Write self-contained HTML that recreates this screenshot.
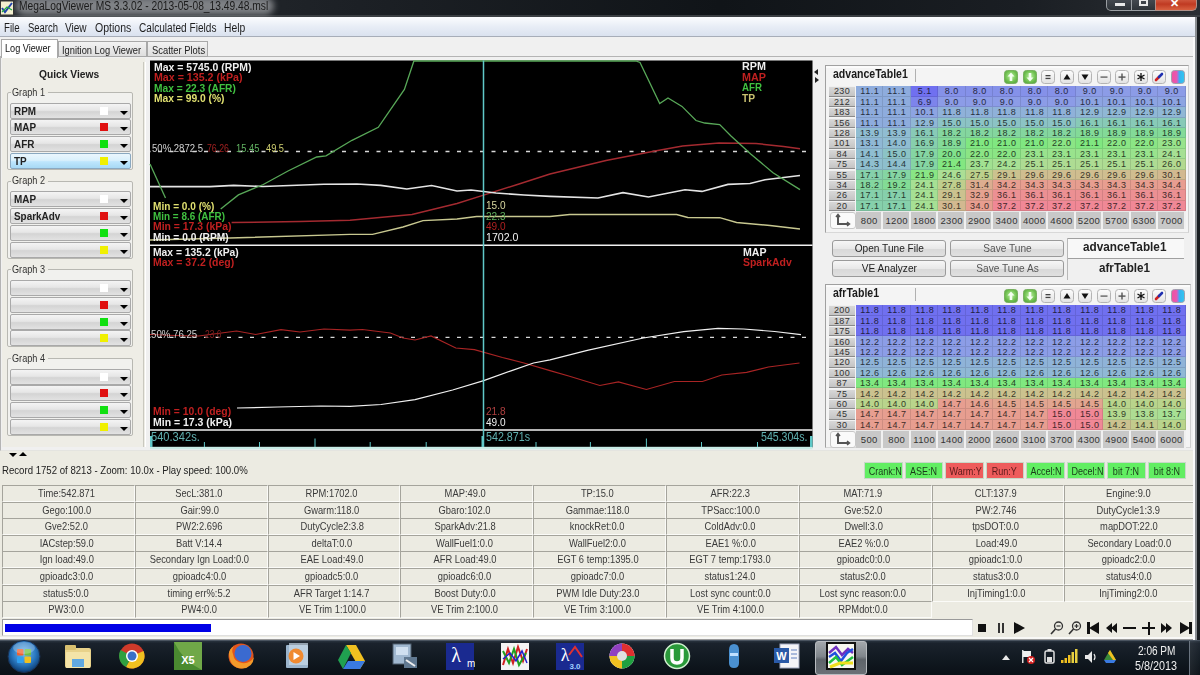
<!DOCTYPE html><html><head><meta charset="utf-8"><style>
html,body{margin:0;padding:0;width:1200px;height:675px;overflow:hidden;background:#f0f0f0;font-family:"Liberation Sans",sans-serif;}
div{box-sizing:border-box;}
.cb{position:absolute;left:10px;width:121px;height:16px;border:1px solid #a9a9a9;border-radius:2px;background:linear-gradient(#f4f4f4,#e6e6e6 45%,#d4d4d4 55%,#e2e2e2);font-size:11px;font-weight:bold;color:#222;line-height:14px;padding-left:3px;}
.cb .sq{position:absolute;left:89px;top:3px;width:8px;height:8px;}
.cb .ar{position:absolute;left:109px;top:7px;width:0;height:0;border-left:4px solid transparent;border-right:4px solid transparent;border-top:4px solid #000;}
.grp{position:absolute;left:7px;width:126px;border:1px solid #b8b8b2;border-radius:2px;background:#f1f1ee;}
.gl{position:absolute;left:11px;font-size:11px;color:#333;background:#eeede6;padding:0 1px;line-height:12px;}
.dc{position:absolute;height:17px;padding-right:4px;border-top:1px solid #a5a49c;border-left:1px solid #a5a49c;border-bottom:1px solid #fbfbf8;border-right:1px solid #fbfbf8;font-size:11px;color:#3a3a3a;text-align:center;line-height:15px;}
.tb{position:absolute;width:14px;height:14px;border:1px solid #b9b9b9;border-radius:3px;background:linear-gradient(#fdfdfd,#e4e4e4);}
.ind{position:absolute;top:462px;height:17px;font-size:11px;color:#2a4a2a;text-align:center;line-height:16px;}
</style></head><body>
<div style="position:absolute;left:0px;top:0px;width:1200px;height:17px;background:linear-gradient(90deg,#2a2e33 0%,#1c2025 30%,#101418 60%,#1a1e23 85%,#2a2e33 100%);"></div>
<div style="position:absolute;left:0px;top:15px;width:1200px;height:2px;background:#3a3e42;"></div>
<div style="position:absolute;left:16px;top:-3px;width:258px;height:18px;background:rgba(150,153,156,0.8);border-radius:9px;filter:blur(3px);"></div>
<svg style="position:absolute;left:0;top:0" width="14" height="16" viewBox="0 0 14 16"><rect x="0.5" y="1" width="13" height="14" fill="#f3efd0" stroke="#333" stroke-width="1"/><polyline points="2,8 5,12 12,3" fill="none" stroke="#2244aa" stroke-width="2"/><polyline points="2,12 7,7 12,10" fill="none" stroke="#22aa44" stroke-width="1.2"/></svg>
<div style="position:absolute;left:19.1px;top:-1.3px;height:15px;line-height:15px;white-space:nowrap;transform:scaleX(0.8534);transform-origin:left;font-size:12px;font-weight:normal;color:#1b1b1b;">MegaLogViewer MS 3.3.02 - 2013-05-08_13.49.48.msl</div>
<div style="position:absolute;left:1106px;top:-3px;width:26px;height:14px;border:1px solid #9a9ea2;border-top:none;border-radius:0 0 0 5px;background:linear-gradient(#4a4f56,#2e3338);"></div>
<div style="position:absolute;left:1115px;top:3px;width:10px;height:3px;background:#e8e8e8;"></div>
<div style="position:absolute;left:1131px;top:-3px;width:25px;height:14px;border:1px solid #9a9ea2;border-top:none;background:linear-gradient(#4a4f56,#2e3338);"></div>
<div style="position:absolute;left:1139px;top:-1px;width:9px;height:7px;border:2px solid #e8e8e8;"></div>
<div style="position:absolute;left:1155px;top:-3px;width:42px;height:14px;border:1px solid #b09088;border-top:none;border-radius:0 0 5px 0;background:linear-gradient(#d86a50,#c03a22 55%,#d86040);"></div>
<div style="position:absolute;left:1170px;top:-4px;height:14px;line-height:14px;white-space:nowrap;font-size:11px;color:#fff;font-weight:bold;">&#x2715;</div>
<div style="position:absolute;left:0px;top:17px;width:1196px;height:20px;background:linear-gradient(#fbfcfe,#e8edf6 50%,#dae2ef);border-bottom:1px solid #a7adb8;"></div>
<div style="position:absolute;left:3.9px;top:20.9px;height:15px;line-height:15px;white-space:nowrap;transform:scaleX(0.8052);transform-origin:left;font-size:12px;font-weight:normal;color:#1e1e1e;">File</div>
<div style="position:absolute;left:27.5px;top:20.9px;height:15px;line-height:15px;white-space:nowrap;transform:scaleX(0.7868);transform-origin:left;font-size:12px;font-weight:normal;color:#1e1e1e;">Search</div>
<div style="position:absolute;left:65.0px;top:20.9px;height:15px;line-height:15px;white-space:nowrap;transform:scaleX(0.8386);transform-origin:left;font-size:12px;font-weight:normal;color:#1e1e1e;">View</div>
<div style="position:absolute;left:94.7px;top:20.9px;height:15px;line-height:15px;white-space:nowrap;transform:scaleX(0.8773);transform-origin:left;font-size:12px;font-weight:normal;color:#1e1e1e;">Options</div>
<div style="position:absolute;left:139.3px;top:20.9px;height:15px;line-height:15px;white-space:nowrap;transform:scaleX(0.8413);transform-origin:left;font-size:12px;font-weight:normal;color:#1e1e1e;">Calculated Fields</div>
<div style="position:absolute;left:224.3px;top:20.9px;height:15px;line-height:15px;white-space:nowrap;transform:scaleX(0.8609);transform-origin:left;font-size:12px;font-weight:normal;color:#1e1e1e;">Help</div>
<div style="position:absolute;left:0px;top:37px;width:1196px;height:20px;background:#f0f0f0;"></div>
<div style="position:absolute;left:0px;top:56px;width:1195px;height:395px;border:1px solid #b4b4b4;border-bottom-color:#e4e4e0;background:#f0f0f0;"></div>
<div style="position:absolute;left:1px;top:39px;width:57px;height:19px;background:#fff;border:1px solid #a8a8a8;border-bottom:none;"></div>
<div style="position:absolute;left:5.4px;top:41.0px;height:14px;line-height:14px;white-space:nowrap;transform:scaleX(0.8310);transform-origin:left;font-size:11px;font-weight:normal;color:#111;">Log Viewer</div>
<div style="position:absolute;left:58px;top:41px;width:89px;height:16px;background:linear-gradient(#f2f2f2,#dedede);border:1px solid #a8a8a8;"></div>
<div style="position:absolute;left:61.8px;top:42.5px;height:14px;line-height:14px;white-space:nowrap;transform:scaleX(0.8461);transform-origin:left;font-size:11px;font-weight:normal;color:#222;">Ignition Log Viewer</div>
<div style="position:absolute;left:147px;top:41px;width:61px;height:16px;background:linear-gradient(#f2f2f2,#dedede);border:1px solid #a8a8a8;"></div>
<div style="position:absolute;left:151.7px;top:42.5px;height:14px;line-height:14px;white-space:nowrap;transform:scaleX(0.8513);transform-origin:left;font-size:11px;font-weight:normal;color:#222;">Scatter Plots</div>
<div style="position:absolute;left:2px;top:58px;width:143px;height:389px;background:#eeede6;"></div>
<div style="position:absolute;left:143px;top:62px;width:3px;height:385px;border-left:1px solid #c9c8bf;border-right:1px solid #fff;"></div>
<div style="position:absolute;left:39.4px;top:67.0px;height:14px;line-height:14px;white-space:nowrap;transform:scaleX(0.9315);transform-origin:left;font-size:11px;font-weight:bold;color:#222;">Quick Views</div>
<div class="grp" style="top:92.0px;height:78px;"></div>
<div style="position:absolute;left:11px;top:90.0px;width:37px;height:4px;background:#eeede6;"></div>
<div style="position:absolute;left:12.0px;top:84.7px;height:14px;line-height:14px;white-space:nowrap;transform:scaleX(0.8302);transform-origin:left;font-size:11px;font-weight:normal;color:#333;">Graph 1</div>
<div class="cb" style="top:102.5px;"><span style="display:inline-block;transform:scaleX(0.9);transform-origin:left;">RPM</span><div class="sq" style="background:#fff;"></div><div class="ar"></div></div>
<div class="cb" style="top:119.3px;"><span style="display:inline-block;transform:scaleX(0.9);transform-origin:left;">MAP</span><div class="sq" style="background:#e01010;"></div><div class="ar"></div></div>
<div class="cb" style="top:136.1px;"><span style="display:inline-block;transform:scaleX(0.9);transform-origin:left;">AFR</span><div class="sq" style="background:#10e010;"></div><div class="ar"></div></div>
<div class="cb" style="top:152.9px;background:linear-gradient(#eaf6fd,#d9f0fc 45%,#bee6fd 55%,#a7d9f5);border-color:#8aa8c0;"><span style="display:inline-block;transform:scaleX(0.9);transform-origin:left;">TP</span><div class="sq" style="background:#f0f000;"></div><div class="ar"></div></div>
<div class="grp" style="top:180.7px;height:78px;"></div>
<div style="position:absolute;left:11px;top:178.7px;width:37px;height:4px;background:#eeede6;"></div>
<div style="position:absolute;left:12.0px;top:173.4px;height:14px;line-height:14px;white-space:nowrap;transform:scaleX(0.8302);transform-origin:left;font-size:11px;font-weight:normal;color:#333;">Graph 2</div>
<div class="cb" style="top:191.2px;"><span style="display:inline-block;transform:scaleX(0.9);transform-origin:left;">MAP</span><div class="sq" style="background:#fff;"></div><div class="ar"></div></div>
<div class="cb" style="top:208.0px;"><span style="display:inline-block;transform:scaleX(0.9);transform-origin:left;">SparkAdv</span><div class="sq" style="background:#e01010;"></div><div class="ar"></div></div>
<div class="cb" style="top:224.8px;"><span style="display:inline-block;transform:scaleX(0.9);transform-origin:left;"></span><div class="sq" style="background:#10e010;"></div><div class="ar"></div></div>
<div class="cb" style="top:241.6px;"><span style="display:inline-block;transform:scaleX(0.9);transform-origin:left;"></span><div class="sq" style="background:#f0f000;"></div><div class="ar"></div></div>
<div class="grp" style="top:269.4px;height:78px;"></div>
<div style="position:absolute;left:11px;top:267.4px;width:37px;height:4px;background:#eeede6;"></div>
<div style="position:absolute;left:12.0px;top:262.1px;height:14px;line-height:14px;white-space:nowrap;transform:scaleX(0.8302);transform-origin:left;font-size:11px;font-weight:normal;color:#333;">Graph 3</div>
<div class="cb" style="top:279.9px;"><span style="display:inline-block;transform:scaleX(0.9);transform-origin:left;"></span><div class="sq" style="background:#fff;"></div><div class="ar"></div></div>
<div class="cb" style="top:296.7px;"><span style="display:inline-block;transform:scaleX(0.9);transform-origin:left;"></span><div class="sq" style="background:#e01010;"></div><div class="ar"></div></div>
<div class="cb" style="top:313.5px;"><span style="display:inline-block;transform:scaleX(0.9);transform-origin:left;"></span><div class="sq" style="background:#10e010;"></div><div class="ar"></div></div>
<div class="cb" style="top:330.3px;"><span style="display:inline-block;transform:scaleX(0.9);transform-origin:left;"></span><div class="sq" style="background:#f0f000;"></div><div class="ar"></div></div>
<div class="grp" style="top:358.1px;height:78px;"></div>
<div style="position:absolute;left:11px;top:356.1px;width:37px;height:4px;background:#eeede6;"></div>
<div style="position:absolute;left:12.0px;top:350.8px;height:14px;line-height:14px;white-space:nowrap;transform:scaleX(0.8302);transform-origin:left;font-size:11px;font-weight:normal;color:#333;">Graph 4</div>
<div class="cb" style="top:368.6px;"><span style="display:inline-block;transform:scaleX(0.9);transform-origin:left;"></span><div class="sq" style="background:#fff;"></div><div class="ar"></div></div>
<div class="cb" style="top:385.4px;"><span style="display:inline-block;transform:scaleX(0.9);transform-origin:left;"></span><div class="sq" style="background:#e01010;"></div><div class="ar"></div></div>
<div class="cb" style="top:402.2px;"><span style="display:inline-block;transform:scaleX(0.9);transform-origin:left;"></span><div class="sq" style="background:#10e010;"></div><div class="ar"></div></div>
<div class="cb" style="top:419.0px;"><span style="display:inline-block;transform:scaleX(0.9);transform-origin:left;"></span><div class="sq" style="background:#f0f000;"></div><div class="ar"></div></div>
<svg style="position:absolute;left:0;top:0" width="1200" height="675" viewBox="0 0 1200 675">
<defs><linearGradient id="tbg" x1="0" y1="0" x2="0" y2="1"><stop offset="0" stop-color="#fdfdfd"/><stop offset="1" stop-color="#e2e2e2"/></linearGradient><radialGradient id="tgr" cx="50%" cy="45%" r="60%"><stop offset="0" stop-color="#b8f0a0"/><stop offset="0.7" stop-color="#70c050"/><stop offset="1" stop-color="#58a840"/></radialGradient><linearGradient id="tcl" x1="0" y1="0" x2="1" y2="0"><stop offset="0" stop-color="#f050a0"/><stop offset="0.38" stop-color="#e858b0"/><stop offset="0.5" stop-color="#9a78e0"/><stop offset="0.6" stop-color="#38b0f0"/><stop offset="1" stop-color="#30c8f0"/></linearGradient></defs>
<rect x="150" y="60.5" width="662.5" height="387" fill="#000"/>
<line x1="150" y1="245.3" x2="812.5" y2="245.3" stroke="#f0f0f0" stroke-width="1.6"/>
<line x1="150" y1="430" x2="812.5" y2="430" stroke="#f0f0f0" stroke-width="1.6"/>
<line x1="150" y1="151.5" x2="812" y2="151.5" stroke="#d8d8d8" stroke-width="1.3" stroke-dasharray="4,7.5" stroke-dashoffset="3.5"/>
<line x1="150" y1="337.4" x2="812" y2="337.4" stroke="#d8d8d8" stroke-width="1.3" stroke-dasharray="4,7.5" stroke-dashoffset="3.5"/>
<polyline points="150.0,240.0 230.0,238.0 350.0,234.4 372.5,234.4 403.0,227.0 423.0,220.6 457.0,219.0 476.6,216.5 550.0,216.5 569.7,214.5 676.6,214.5 687.8,217.5 719.7,217.7 736.6,222.5 770.0,225.5 800.0,229.0" fill="none" stroke="#c8c890" stroke-width="1.4"/>
<polyline points="231.6,222.6 300.0,221.5 350.0,220.3 412.0,214.5 457.0,203.5 482.0,195.6 519.0,184.0 550.0,174.0 606.0,160.5 655.0,151.0 682.6,146.0 719.0,142.9 756.0,143.5 783.5,146.4 800.0,148.8" fill="none" stroke="#a42a30" stroke-width="1.5"/>
<polyline points="150.0,186.6 210.0,186.6 233.7,185.4 263.0,186.5 323.8,184.2 357.0,184.0 380.7,185.4 406.8,189.0 431.6,185.5 457.0,191.0 471.0,190.0 496.0,193.0 524.0,195.0 550.0,196.4 598.0,198.0 623.0,192.6 648.5,197.0 685.0,189.7 702.0,191.4 728.0,184.4 750.0,183.5 765.0,179.7 800.0,175.5" fill="none" stroke="#e4e4e4" stroke-width="1.6"/>
<polyline points="150.0,164.0 165.5,198.0" fill="none" stroke="#58a858" stroke-width="1.3"/>
<polyline points="220.7,209.0 238.4,194.9 263.3,184.5 288.0,171.0 316.7,157.0 326.0,155.8 352.0,140.3 378.3,127.3 404.4,89.4 413.9,61.0 635.8,61.0 640.0,62.5 659.7,103.6 668.0,98.0 682.0,106.4 696.0,120.5 704.7,123.0 719.7,124.5 731.0,136.0 750.7,154.0 773.0,172.7 800.0,189.6" fill="none" stroke="#58a858" stroke-width="1.3"/>
<polyline points="150.0,334.5 175.0,335.5 198.6,336.0 221.4,333.0 236.6,331.0 255.6,334.5 281.0,329.7 300.0,332.0 324.0,329.0 350.0,330.2 362.4,329.5 390.4,333.0 403.0,338.0 415.0,340.0 431.0,336.0 455.8,348.0 474.4,349.7 502.4,357.5 524.0,363.0 550.0,370.6 568.7,376.0 599.8,385.5 618.4,381.8 646.4,389.5 674.4,381.5 702.4,381.5 721.8,375.0 746.6,372.4 768.4,367.0 799.5,363.0" fill="none" stroke="#a82424" stroke-width="1.2"/>
<polyline points="237.0,408.0 277.5,407.0 321.0,406.0 350.0,406.4 381.0,404.5 415.0,399.7 452.6,390.0 483.7,380.6 511.7,370.6 533.5,363.0 550.0,359.8 587.3,350.4 643.3,338.0 683.7,331.6 718.0,328.3 743.5,329.0 774.6,331.5 801.0,334.7" fill="none" stroke="#f0f0f0" stroke-width="1.2"/>
<line x1="483.5" y1="60.5" x2="483.5" y2="447" stroke="#5fc8c8" stroke-width="1.5"/>
<rect x="150" y="446.8" width="662.5" height="2.5" fill="#c8ece6"/>
<line x1="204.4" y1="442" x2="204.4" y2="447" stroke="#5fc8c8" stroke-width="1"/>
<line x1="259.5" y1="442" x2="259.5" y2="447" stroke="#5fc8c8" stroke-width="1"/>
<line x1="370.2" y1="442" x2="370.2" y2="447" stroke="#5fc8c8" stroke-width="1"/>
<line x1="426.2" y1="442" x2="426.2" y2="447" stroke="#5fc8c8" stroke-width="1"/>
<line x1="536" y1="442" x2="536" y2="447" stroke="#5fc8c8" stroke-width="1"/>
<line x1="590.4" y1="442" x2="590.4" y2="447" stroke="#5fc8c8" stroke-width="1"/>
<line x1="701.5" y1="442" x2="701.5" y2="447" stroke="#5fc8c8" stroke-width="1"/>
<line x1="757.5" y1="442" x2="757.5" y2="447" stroke="#5fc8c8" stroke-width="1"/>
<line x1="315" y1="438.5" x2="315" y2="447" stroke="#5fc8c8" stroke-width="1"/>
<line x1="646.4" y1="438.5" x2="646.4" y2="447" stroke="#5fc8c8" stroke-width="1"/>
<rect x="150" y="436" width="2.5" height="11" fill="#5fc8c8"/>
<rect x="481.5" y="436" width="2.5" height="11" fill="#5fc8c8"/>
<rect x="810" y="436" width="2.5" height="11" fill="#5fc8c8"/>
</svg>
<div style="position:absolute;left:153.5px;top:60.0px;height:14px;line-height:14px;white-space:nowrap;transform:scaleX(0.9524);transform-origin:left;font-size:11px;font-weight:bold;color:#f0f0f0;">Max = 5745.0 (RPM)</div>
<div style="position:absolute;left:153.5px;top:70.2px;height:14px;line-height:14px;white-space:nowrap;transform:scaleX(0.9685);transform-origin:left;font-size:11px;font-weight:bold;color:#c02020;">Max = 135.2 (kPa)</div>
<div style="position:absolute;left:153.5px;top:80.5px;height:14px;line-height:14px;white-space:nowrap;transform:scaleX(0.9267);transform-origin:left;font-size:11px;font-weight:bold;color:#40c040;">Max = 22.3 (AFR)</div>
<div style="position:absolute;left:153.5px;top:91.0px;height:14px;line-height:14px;white-space:nowrap;transform:scaleX(0.9338);transform-origin:left;font-size:11px;font-weight:bold;color:#e0e070;">Max = 99.0 (%)</div>
<div style="position:absolute;left:742.0px;top:59.2px;height:14px;line-height:14px;white-space:nowrap;transform:scaleX(0.9796);transform-origin:left;font-size:11px;font-weight:bold;color:#f0f0f0;">RPM</div>
<div style="position:absolute;left:742.0px;top:69.6px;height:14px;line-height:14px;white-space:nowrap;transform:scaleX(0.9796);transform-origin:left;font-size:11px;font-weight:bold;color:#c02020;">MAP</div>
<div style="position:absolute;left:742.0px;top:80.0px;height:14px;line-height:14px;white-space:nowrap;transform:scaleX(0.8840);transform-origin:left;font-size:11px;font-weight:bold;color:#40c040;">AFR</div>
<div style="position:absolute;left:742.0px;top:90.6px;height:14px;line-height:14px;white-space:nowrap;transform:scaleX(0.9286);transform-origin:left;font-size:11px;font-weight:bold;color:#c8c070;">TP</div>
<div style="position:absolute;left:152.0px;top:142.1px;height:13px;line-height:13px;white-space:nowrap;transform:scaleX(0.9555);transform-origin:left;font-size:10px;font-weight:normal;color:#d0d0d0;">50% 2872.5</div>
<div style="position:absolute;left:206.6px;top:142.1px;height:13px;line-height:13px;white-space:nowrap;transform:scaleX(0.8760);transform-origin:left;font-size:10px;font-weight:normal;color:#a02020;">76.26</div>
<div style="position:absolute;left:236.0px;top:142.1px;height:13px;line-height:13px;white-space:nowrap;transform:scaleX(0.9360);transform-origin:left;font-size:10px;font-weight:normal;color:#60b060;">15.45</div>
<div style="position:absolute;left:266.0px;top:142.1px;height:13px;line-height:13px;white-space:nowrap;transform:scaleX(0.9231);transform-origin:left;font-size:10px;font-weight:normal;color:#d0d070;">49.5</div>
<div style="position:absolute;left:153.3px;top:198.5px;height:14px;line-height:14px;white-space:nowrap;transform:scaleX(0.9166);transform-origin:left;font-size:11px;font-weight:bold;color:#e0e070;">Min = 0.0 (%)</div>
<div style="position:absolute;left:153.3px;top:208.8px;height:14px;line-height:14px;white-space:nowrap;transform:scaleX(0.9028);transform-origin:left;font-size:11px;font-weight:bold;color:#40c040;">Min = 8.6 (AFR)</div>
<div style="position:absolute;left:153.3px;top:219.2px;height:14px;line-height:14px;white-space:nowrap;transform:scaleX(0.9472);transform-origin:left;font-size:11px;font-weight:bold;color:#c02020;">Min = 17.3 (kPa)</div>
<div style="position:absolute;left:153.3px;top:229.6px;height:14px;line-height:14px;white-space:nowrap;transform:scaleX(0.9262);transform-origin:left;font-size:11px;font-weight:bold;color:#f0f0f0;">Min = 0.0 (RPM)</div>
<div style="position:absolute;left:486.4px;top:198.3px;height:14px;line-height:14px;white-space:nowrap;transform:scaleX(0.9170);transform-origin:left;font-size:11px;font-weight:normal;color:#d8d8a0;">15.0</div>
<div style="position:absolute;left:486.4px;top:208.6px;height:14px;line-height:14px;white-space:nowrap;transform:scaleX(0.9170);transform-origin:left;font-size:11px;font-weight:normal;color:#60b060;">22.3</div>
<div style="position:absolute;left:486.4px;top:219.0px;height:14px;line-height:14px;white-space:nowrap;transform:scaleX(0.9170);transform-origin:left;font-size:11px;font-weight:normal;color:#b02020;">49.0</div>
<div style="position:absolute;left:486.4px;top:229.5px;height:14px;line-height:14px;white-space:nowrap;transform:scaleX(0.9636);transform-origin:left;font-size:11px;font-weight:normal;color:#f0f0f0;">1702.0</div>
<div style="position:absolute;left:153.3px;top:245.2px;height:14px;line-height:14px;white-space:nowrap;transform:scaleX(0.9379);transform-origin:left;font-size:11px;font-weight:bold;color:#f0f0f0;">Max = 135.2 (kPa)</div>
<div style="position:absolute;left:153.3px;top:255.3px;height:14px;line-height:14px;white-space:nowrap;transform:scaleX(0.9525);transform-origin:left;font-size:11px;font-weight:bold;color:#c02020;">Max = 37.2 (deg)</div>
<div style="position:absolute;left:742.9px;top:245.4px;height:14px;line-height:14px;white-space:nowrap;transform:scaleX(0.9633);transform-origin:left;font-size:11px;font-weight:bold;color:#f0f0f0;">MAP</div>
<div style="position:absolute;left:742.9px;top:255.3px;height:14px;line-height:14px;white-space:nowrap;transform:scaleX(0.9499);transform-origin:left;font-size:11px;font-weight:bold;color:#c02020;">SparkAdv</div>
<div style="position:absolute;left:150.7px;top:328.0px;height:13px;line-height:13px;white-space:nowrap;transform:scaleX(0.9671);transform-origin:left;font-size:10px;font-weight:normal;color:#d0d0d0;">50% 76.25</div>
<div style="position:absolute;left:205.0px;top:328.0px;height:13px;line-height:13px;white-space:nowrap;transform:scaleX(0.8410);transform-origin:left;font-size:10px;font-weight:normal;color:#802020;">23.6</div>
<div style="position:absolute;left:153.0px;top:404.0px;height:14px;line-height:14px;white-space:nowrap;transform:scaleX(0.9436);transform-origin:left;font-size:11px;font-weight:bold;color:#c02020;">Min = 10.0 (deg)</div>
<div style="position:absolute;left:153.0px;top:415.0px;height:14px;line-height:14px;white-space:nowrap;transform:scaleX(0.9532);transform-origin:left;font-size:11px;font-weight:bold;color:#f0f0f0;">Min = 17.3 (kPa)</div>
<div style="position:absolute;left:486.4px;top:404.0px;height:14px;line-height:14px;white-space:nowrap;transform:scaleX(0.9170);transform-origin:left;font-size:11px;font-weight:normal;color:#b04040;">21.8</div>
<div style="position:absolute;left:486.4px;top:415.0px;height:14px;line-height:14px;white-space:nowrap;transform:scaleX(0.9170);transform-origin:left;font-size:11px;font-weight:normal;color:#f0f0f0;">49.0</div>
<div style="position:absolute;left:151.0px;top:430.0px;height:15px;line-height:15px;white-space:nowrap;transform:scaleX(0.9251);transform-origin:left;font-size:12px;font-weight:normal;color:#60b0b0;">540.342s.</div>
<div style="position:absolute;left:486.0px;top:430.0px;height:15px;line-height:15px;white-space:nowrap;transform:scaleX(0.8911);transform-origin:left;font-size:12px;font-weight:normal;color:#60b0b0;">542.871s</div>
<div style="position:absolute;left:761.0px;top:430.0px;height:15px;line-height:15px;white-space:nowrap;transform:scaleX(0.8815);transform-origin:left;font-size:12px;font-weight:normal;color:#60b0b0;">545.304s.</div>
<div style="position:absolute;left:814px;top:69px;width:0;height:0;border-top:3.5px solid transparent;border-bottom:3.5px solid transparent;border-right:4px solid #222;"></div>
<div style="position:absolute;left:815px;top:77px;width:0;height:0;border-top:3.5px solid transparent;border-bottom:3.5px solid transparent;border-left:4px solid #222;"></div>
<div style="position:absolute;left:824.5px;top:64.5px;width:364px;height:168px;border:1px solid #a0a0a0;border-right-color:#d0d0d0;border-bottom-color:#d8d8d8;background:#f4f4f4;"></div>
<div style="position:absolute;left:825.5px;top:65.5px;width:362px;height:2px;background:#fff;opacity:0.6;"></div>
<div style="position:absolute;left:832.7px;top:67.2px;height:15px;line-height:15px;white-space:nowrap;transform:scaleX(0.8787);transform-origin:left;font-size:12px;font-weight:bold;color:#1a1a1a;">advanceTable1</div>
<div style="position:absolute;left:914.5px;top:68.5px;width:1px;height:13px;background:#b0b0b0;"></div>
<svg style="position:absolute;left:1004px;top:69.5px" width="14" height="14" viewBox="0 0 14 14"><rect x="0.5" y="0.5" width="13" height="13" rx="3" fill="url(#tgr)" stroke="#78b060"/><path d="M7 2.5 L10.5 6.5 L8.3 6.5 L8.3 11 L5.7 11 L5.7 6.5 L3.5 6.5 Z" fill="#f4fff0"/></svg>
<svg style="position:absolute;left:1022.5px;top:69.5px" width="14" height="14" viewBox="0 0 14 14"><rect x="0.5" y="0.5" width="13" height="13" rx="3" fill="url(#tgr)" stroke="#78b060"/><path d="M7 11.5 L10.5 7.5 L8.3 7.5 L8.3 3 L5.7 3 L5.7 7.5 L3.5 7.5 Z" fill="#f4fff0"/></svg>
<svg style="position:absolute;left:1041px;top:69.5px" width="14" height="14" viewBox="0 0 14 14"><rect x="0.5" y="0.5" width="13" height="13" rx="3" fill="url(#tbg)" stroke="#b4b4b4"/><rect x="4.5" y="5" width="5" height="1.3" fill="#444"/><rect x="4.5" y="7.8" width="5" height="1.3" fill="#444"/></svg>
<svg style="position:absolute;left:1059.5px;top:69.5px" width="14" height="14" viewBox="0 0 14 14"><rect x="0.5" y="0.5" width="13" height="13" rx="3" fill="url(#tbg)" stroke="#b4b4b4"/><path d="M7 4 L10.5 9.5 L3.5 9.5 Z" fill="#111"/></svg>
<svg style="position:absolute;left:1078px;top:69.5px" width="14" height="14" viewBox="0 0 14 14"><rect x="0.5" y="0.5" width="13" height="13" rx="3" fill="url(#tbg)" stroke="#b4b4b4"/><path d="M7 10 L10.5 4.5 L3.5 4.5 Z" fill="#111"/></svg>
<svg style="position:absolute;left:1096.5px;top:69.5px" width="14" height="14" viewBox="0 0 14 14"><rect x="0.5" y="0.5" width="13" height="13" rx="3" fill="url(#tbg)" stroke="#b4b4b4"/><rect x="3.5" y="6.4" width="7" height="1.4" fill="#666"/></svg>
<svg style="position:absolute;left:1115px;top:69.5px" width="14" height="14" viewBox="0 0 14 14"><rect x="0.5" y="0.5" width="13" height="13" rx="3" fill="url(#tbg)" stroke="#b4b4b4"/><rect x="3.5" y="6.4" width="7" height="1.4" fill="#555"/><rect x="6.3" y="3.5" width="1.4" height="7" fill="#555"/></svg>
<svg style="position:absolute;left:1133.5px;top:69.5px" width="14" height="14" viewBox="0 0 14 14"><rect x="0.5" y="0.5" width="13" height="13" rx="3" fill="url(#tbg)" stroke="#b4b4b4"/><path d="M7 3 L7 11 M3.5 5 L10.5 9 M3.5 9 L10.5 5" stroke="#111" stroke-width="1.3"/></svg>
<svg style="position:absolute;left:1152px;top:69.5px" width="14" height="14" viewBox="0 0 14 14"><rect x="0.5" y="0.5" width="13" height="13" rx="3" fill="url(#tbg)" stroke="#b4b4b4"/><line x1="4" y1="10" x2="7" y2="7" stroke="#d02020" stroke-width="2.6" stroke-linecap="round"/><line x1="7" y1="7" x2="10" y2="4" stroke="#2030b0" stroke-width="2.6" stroke-linecap="round"/></svg>
<svg style="position:absolute;left:1170.5px;top:69.5px" width="14" height="14" viewBox="0 0 14 14"><rect x="0.5" y="0.5" width="13" height="13" rx="3" fill="url(#tcl)" stroke="#a0a0b0"/></svg>
<div style="position:absolute;left:829px;top:86.3px;width:26px;height:10.4px;background:linear-gradient(#d8d8d8,#c4c4c4);border-bottom:1px solid #8a8a8a;border-top:1px solid #f0f0f0;"></div>
<div style="position:absolute;left:829px;top:86.3px;width:26px;height:11px;line-height:11px;white-space:nowrap;font-size:9px;color:#333;text-align:center;letter-spacing:0.4px;">230</div>
<div style="position:absolute;left:829px;top:96.7px;width:26px;height:10.4px;background:linear-gradient(#d8d8d8,#c4c4c4);border-bottom:1px solid #8a8a8a;border-top:1px solid #f0f0f0;"></div>
<div style="position:absolute;left:829px;top:96.7px;width:26px;height:11px;line-height:11px;white-space:nowrap;font-size:9px;color:#333;text-align:center;letter-spacing:0.4px;">212</div>
<div style="position:absolute;left:829px;top:107.1px;width:26px;height:10.4px;background:linear-gradient(#d8d8d8,#c4c4c4);border-bottom:1px solid #8a8a8a;border-top:1px solid #f0f0f0;"></div>
<div style="position:absolute;left:829px;top:107.1px;width:26px;height:11px;line-height:11px;white-space:nowrap;font-size:9px;color:#333;text-align:center;letter-spacing:0.4px;">183</div>
<div style="position:absolute;left:829px;top:117.5px;width:26px;height:10.4px;background:linear-gradient(#d8d8d8,#c4c4c4);border-bottom:1px solid #8a8a8a;border-top:1px solid #f0f0f0;"></div>
<div style="position:absolute;left:829px;top:117.5px;width:26px;height:11px;line-height:11px;white-space:nowrap;font-size:9px;color:#333;text-align:center;letter-spacing:0.4px;">156</div>
<div style="position:absolute;left:829px;top:127.9px;width:26px;height:10.4px;background:linear-gradient(#d8d8d8,#c4c4c4);border-bottom:1px solid #8a8a8a;border-top:1px solid #f0f0f0;"></div>
<div style="position:absolute;left:829px;top:127.9px;width:26px;height:11px;line-height:11px;white-space:nowrap;font-size:9px;color:#333;text-align:center;letter-spacing:0.4px;">128</div>
<div style="position:absolute;left:829px;top:138.3px;width:26px;height:10.4px;background:linear-gradient(#d8d8d8,#c4c4c4);border-bottom:1px solid #8a8a8a;border-top:1px solid #f0f0f0;"></div>
<div style="position:absolute;left:829px;top:138.3px;width:26px;height:11px;line-height:11px;white-space:nowrap;font-size:9px;color:#333;text-align:center;letter-spacing:0.4px;">101</div>
<div style="position:absolute;left:829px;top:148.7px;width:26px;height:10.4px;background:linear-gradient(#d8d8d8,#c4c4c4);border-bottom:1px solid #8a8a8a;border-top:1px solid #f0f0f0;"></div>
<div style="position:absolute;left:829px;top:148.7px;width:26px;height:11px;line-height:11px;white-space:nowrap;font-size:9px;color:#333;text-align:center;letter-spacing:0.4px;">84</div>
<div style="position:absolute;left:829px;top:159.1px;width:26px;height:10.4px;background:linear-gradient(#d8d8d8,#c4c4c4);border-bottom:1px solid #8a8a8a;border-top:1px solid #f0f0f0;"></div>
<div style="position:absolute;left:829px;top:159.1px;width:26px;height:11px;line-height:11px;white-space:nowrap;font-size:9px;color:#333;text-align:center;letter-spacing:0.4px;">75</div>
<div style="position:absolute;left:829px;top:169.5px;width:26px;height:10.4px;background:linear-gradient(#d8d8d8,#c4c4c4);border-bottom:1px solid #8a8a8a;border-top:1px solid #f0f0f0;"></div>
<div style="position:absolute;left:829px;top:169.5px;width:26px;height:11px;line-height:11px;white-space:nowrap;font-size:9px;color:#333;text-align:center;letter-spacing:0.4px;">55</div>
<div style="position:absolute;left:829px;top:179.9px;width:26px;height:10.4px;background:linear-gradient(#d8d8d8,#c4c4c4);border-bottom:1px solid #8a8a8a;border-top:1px solid #f0f0f0;"></div>
<div style="position:absolute;left:829px;top:179.9px;width:26px;height:11px;line-height:11px;white-space:nowrap;font-size:9px;color:#333;text-align:center;letter-spacing:0.4px;">34</div>
<div style="position:absolute;left:829px;top:190.3px;width:26px;height:10.4px;background:linear-gradient(#d8d8d8,#c4c4c4);border-bottom:1px solid #8a8a8a;border-top:1px solid #f0f0f0;"></div>
<div style="position:absolute;left:829px;top:190.3px;width:26px;height:11px;line-height:11px;white-space:nowrap;font-size:9px;color:#333;text-align:center;letter-spacing:0.4px;">26</div>
<div style="position:absolute;left:829px;top:200.7px;width:26px;height:10.4px;background:linear-gradient(#d8d8d8,#c4c4c4);border-bottom:1px solid #8a8a8a;border-top:1px solid #f0f0f0;"></div>
<div style="position:absolute;left:829px;top:200.7px;width:26px;height:11px;line-height:11px;white-space:nowrap;font-size:9px;color:#333;text-align:center;letter-spacing:0.4px;">20</div>
<div style="position:absolute;left:856px;top:86px;width:27px;height:11px;background:rgb(142, 172, 221);border-right:1px solid rgba(0,0,0,0.10);border-bottom:1px solid rgba(0,0,0,0.10);"></div>
<div style="position:absolute;left:856px;top:86.3px;width:27.47px;height:11px;line-height:11px;white-space:nowrap;font-size:9px;color:rgb(39, 48, 61);text-align:center;letter-spacing:0.5px;">11.1</div>
<div style="position:absolute;left:883px;top:86px;width:28px;height:11px;background:rgb(142, 172, 221);border-right:1px solid rgba(0,0,0,0.10);border-bottom:1px solid rgba(0,0,0,0.10);"></div>
<div style="position:absolute;left:883px;top:86.3px;width:27.47px;height:11px;line-height:11px;white-space:nowrap;font-size:9px;color:rgb(39, 48, 61);text-align:center;letter-spacing:0.5px;">11.1</div>
<div style="position:absolute;left:911px;top:86px;width:27px;height:11px;background:rgb(112, 112, 240);border-right:1px solid rgba(0,0,0,0.10);border-bottom:1px solid rgba(0,0,0,0.10);"></div>
<div style="position:absolute;left:911px;top:86.3px;width:27.47px;height:11px;line-height:11px;white-space:nowrap;font-size:9px;color:rgb(31, 31, 67);text-align:center;letter-spacing:0.5px;">5.1</div>
<div style="position:absolute;left:938px;top:86px;width:28px;height:11px;background:rgb(133, 145, 233);border-right:1px solid rgba(0,0,0,0.10);border-bottom:1px solid rgba(0,0,0,0.10);"></div>
<div style="position:absolute;left:938px;top:86.3px;width:27.47px;height:11px;line-height:11px;white-space:nowrap;font-size:9px;color:rgb(37, 40, 65);text-align:center;letter-spacing:0.5px;">8.0</div>
<div style="position:absolute;left:966px;top:86px;width:27px;height:11px;background:rgb(133, 145, 233);border-right:1px solid rgba(0,0,0,0.10);border-bottom:1px solid rgba(0,0,0,0.10);"></div>
<div style="position:absolute;left:966px;top:86.3px;width:27.47px;height:11px;line-height:11px;white-space:nowrap;font-size:9px;color:rgb(37, 40, 65);text-align:center;letter-spacing:0.5px;">8.0</div>
<div style="position:absolute;left:993px;top:86px;width:28px;height:11px;background:rgb(133, 145, 233);border-right:1px solid rgba(0,0,0,0.10);border-bottom:1px solid rgba(0,0,0,0.10);"></div>
<div style="position:absolute;left:993px;top:86.3px;width:27.47px;height:11px;line-height:11px;white-space:nowrap;font-size:9px;color:rgb(37, 40, 65);text-align:center;letter-spacing:0.5px;">8.0</div>
<div style="position:absolute;left:1021px;top:86px;width:27px;height:11px;background:rgb(133, 145, 233);border-right:1px solid rgba(0,0,0,0.10);border-bottom:1px solid rgba(0,0,0,0.10);"></div>
<div style="position:absolute;left:1021px;top:86.3px;width:27.47px;height:11px;line-height:11px;white-space:nowrap;font-size:9px;color:rgb(37, 40, 65);text-align:center;letter-spacing:0.5px;">8.0</div>
<div style="position:absolute;left:1048px;top:86px;width:28px;height:11px;background:rgb(133, 145, 233);border-right:1px solid rgba(0,0,0,0.10);border-bottom:1px solid rgba(0,0,0,0.10);"></div>
<div style="position:absolute;left:1048px;top:86.3px;width:27.47px;height:11px;line-height:11px;white-space:nowrap;font-size:9px;color:rgb(37, 40, 65);text-align:center;letter-spacing:0.5px;">8.0</div>
<div style="position:absolute;left:1076px;top:86px;width:27px;height:11px;background:rgb(140, 156, 231);border-right:1px solid rgba(0,0,0,0.10);border-bottom:1px solid rgba(0,0,0,0.10);"></div>
<div style="position:absolute;left:1076px;top:86.3px;width:27.47px;height:11px;line-height:11px;white-space:nowrap;font-size:9px;color:rgb(39, 43, 64);text-align:center;letter-spacing:0.5px;">9.0</div>
<div style="position:absolute;left:1103px;top:86px;width:28px;height:11px;background:rgb(140, 156, 231);border-right:1px solid rgba(0,0,0,0.10);border-bottom:1px solid rgba(0,0,0,0.10);"></div>
<div style="position:absolute;left:1103px;top:86.3px;width:27.47px;height:11px;line-height:11px;white-space:nowrap;font-size:9px;color:rgb(39, 43, 64);text-align:center;letter-spacing:0.5px;">9.0</div>
<div style="position:absolute;left:1131px;top:86px;width:27px;height:11px;background:rgb(140, 156, 231);border-right:1px solid rgba(0,0,0,0.10);border-bottom:1px solid rgba(0,0,0,0.10);"></div>
<div style="position:absolute;left:1131px;top:86.3px;width:27.47px;height:11px;line-height:11px;white-space:nowrap;font-size:9px;color:rgb(39, 43, 64);text-align:center;letter-spacing:0.5px;">9.0</div>
<div style="position:absolute;left:1158px;top:86px;width:28px;height:11px;background:rgb(140, 156, 231);border-right:1px solid rgba(0,0,0,0.10);border-bottom:1px solid rgba(0,0,0,0.10);"></div>
<div style="position:absolute;left:1158px;top:86.3px;width:27.47px;height:11px;line-height:11px;white-space:nowrap;font-size:9px;color:rgb(39, 43, 64);text-align:center;letter-spacing:0.5px;">9.0</div>
<div style="position:absolute;left:856px;top:97px;width:27px;height:10px;background:rgb(142, 172, 221);border-right:1px solid rgba(0,0,0,0.10);border-bottom:1px solid rgba(0,0,0,0.10);"></div>
<div style="position:absolute;left:856px;top:96.7px;width:27.47px;height:11px;line-height:11px;white-space:nowrap;font-size:9px;color:rgb(39, 48, 61);text-align:center;letter-spacing:0.5px;">11.1</div>
<div style="position:absolute;left:883px;top:97px;width:28px;height:10px;background:rgb(142, 172, 221);border-right:1px solid rgba(0,0,0,0.10);border-bottom:1px solid rgba(0,0,0,0.10);"></div>
<div style="position:absolute;left:883px;top:96.7px;width:27.47px;height:11px;line-height:11px;white-space:nowrap;font-size:9px;color:rgb(39, 48, 61);text-align:center;letter-spacing:0.5px;">11.1</div>
<div style="position:absolute;left:911px;top:97px;width:27px;height:10px;background:rgb(125, 132, 236);border-right:1px solid rgba(0,0,0,0.10);border-bottom:1px solid rgba(0,0,0,0.10);"></div>
<div style="position:absolute;left:911px;top:96.7px;width:27.47px;height:11px;line-height:11px;white-space:nowrap;font-size:9px;color:rgb(35, 36, 66);text-align:center;letter-spacing:0.5px;">6.9</div>
<div style="position:absolute;left:938px;top:97px;width:28px;height:10px;background:rgb(140, 156, 231);border-right:1px solid rgba(0,0,0,0.10);border-bottom:1px solid rgba(0,0,0,0.10);"></div>
<div style="position:absolute;left:938px;top:96.7px;width:27.47px;height:11px;line-height:11px;white-space:nowrap;font-size:9px;color:rgb(39, 43, 64);text-align:center;letter-spacing:0.5px;">9.0</div>
<div style="position:absolute;left:966px;top:97px;width:27px;height:10px;background:rgb(140, 156, 231);border-right:1px solid rgba(0,0,0,0.10);border-bottom:1px solid rgba(0,0,0,0.10);"></div>
<div style="position:absolute;left:966px;top:96.7px;width:27.47px;height:11px;line-height:11px;white-space:nowrap;font-size:9px;color:rgb(39, 43, 64);text-align:center;letter-spacing:0.5px;">9.0</div>
<div style="position:absolute;left:993px;top:97px;width:28px;height:10px;background:rgb(140, 156, 231);border-right:1px solid rgba(0,0,0,0.10);border-bottom:1px solid rgba(0,0,0,0.10);"></div>
<div style="position:absolute;left:993px;top:96.7px;width:27.47px;height:11px;line-height:11px;white-space:nowrap;font-size:9px;color:rgb(39, 43, 64);text-align:center;letter-spacing:0.5px;">9.0</div>
<div style="position:absolute;left:1021px;top:97px;width:27px;height:10px;background:rgb(140, 156, 231);border-right:1px solid rgba(0,0,0,0.10);border-bottom:1px solid rgba(0,0,0,0.10);"></div>
<div style="position:absolute;left:1021px;top:96.7px;width:27.47px;height:11px;line-height:11px;white-space:nowrap;font-size:9px;color:rgb(39, 43, 64);text-align:center;letter-spacing:0.5px;">9.0</div>
<div style="position:absolute;left:1048px;top:97px;width:28px;height:10px;background:rgb(140, 156, 231);border-right:1px solid rgba(0,0,0,0.10);border-bottom:1px solid rgba(0,0,0,0.10);"></div>
<div style="position:absolute;left:1048px;top:96.7px;width:27.47px;height:11px;line-height:11px;white-space:nowrap;font-size:9px;color:rgb(39, 43, 64);text-align:center;letter-spacing:0.5px;">9.0</div>
<div style="position:absolute;left:1076px;top:97px;width:27px;height:10px;background:rgb(141, 164, 226);border-right:1px solid rgba(0,0,0,0.10);border-bottom:1px solid rgba(0,0,0,0.10);"></div>
<div style="position:absolute;left:1076px;top:96.7px;width:27.47px;height:11px;line-height:11px;white-space:nowrap;font-size:9px;color:rgb(39, 45, 63);text-align:center;letter-spacing:0.5px;">10.1</div>
<div style="position:absolute;left:1103px;top:97px;width:28px;height:10px;background:rgb(141, 164, 226);border-right:1px solid rgba(0,0,0,0.10);border-bottom:1px solid rgba(0,0,0,0.10);"></div>
<div style="position:absolute;left:1103px;top:96.7px;width:27.47px;height:11px;line-height:11px;white-space:nowrap;font-size:9px;color:rgb(39, 45, 63);text-align:center;letter-spacing:0.5px;">10.1</div>
<div style="position:absolute;left:1131px;top:97px;width:27px;height:10px;background:rgb(141, 164, 226);border-right:1px solid rgba(0,0,0,0.10);border-bottom:1px solid rgba(0,0,0,0.10);"></div>
<div style="position:absolute;left:1131px;top:96.7px;width:27.47px;height:11px;line-height:11px;white-space:nowrap;font-size:9px;color:rgb(39, 45, 63);text-align:center;letter-spacing:0.5px;">10.1</div>
<div style="position:absolute;left:1158px;top:97px;width:28px;height:10px;background:rgb(141, 164, 226);border-right:1px solid rgba(0,0,0,0.10);border-bottom:1px solid rgba(0,0,0,0.10);"></div>
<div style="position:absolute;left:1158px;top:96.7px;width:27.47px;height:11px;line-height:11px;white-space:nowrap;font-size:9px;color:rgb(39, 45, 63);text-align:center;letter-spacing:0.5px;">10.1</div>
<div style="position:absolute;left:856px;top:107px;width:27px;height:11px;background:rgb(142, 172, 221);border-right:1px solid rgba(0,0,0,0.10);border-bottom:1px solid rgba(0,0,0,0.10);"></div>
<div style="position:absolute;left:856px;top:107.1px;width:27.47px;height:11px;line-height:11px;white-space:nowrap;font-size:9px;color:rgb(39, 48, 61);text-align:center;letter-spacing:0.5px;">11.1</div>
<div style="position:absolute;left:883px;top:107px;width:28px;height:11px;background:rgb(142, 172, 221);border-right:1px solid rgba(0,0,0,0.10);border-bottom:1px solid rgba(0,0,0,0.10);"></div>
<div style="position:absolute;left:883px;top:107.1px;width:27.47px;height:11px;line-height:11px;white-space:nowrap;font-size:9px;color:rgb(39, 48, 61);text-align:center;letter-spacing:0.5px;">11.1</div>
<div style="position:absolute;left:911px;top:107px;width:27px;height:11px;background:rgb(141, 164, 226);border-right:1px solid rgba(0,0,0,0.10);border-bottom:1px solid rgba(0,0,0,0.10);"></div>
<div style="position:absolute;left:911px;top:107.1px;width:27.47px;height:11px;line-height:11px;white-space:nowrap;font-size:9px;color:rgb(39, 45, 63);text-align:center;letter-spacing:0.5px;">10.1</div>
<div style="position:absolute;left:938px;top:107px;width:28px;height:11px;background:rgb(143, 177, 217);border-right:1px solid rgba(0,0,0,0.10);border-bottom:1px solid rgba(0,0,0,0.10);"></div>
<div style="position:absolute;left:938px;top:107.1px;width:27.47px;height:11px;line-height:11px;white-space:nowrap;font-size:9px;color:rgb(40, 49, 60);text-align:center;letter-spacing:0.5px;">11.8</div>
<div style="position:absolute;left:966px;top:107px;width:27px;height:11px;background:rgb(143, 177, 217);border-right:1px solid rgba(0,0,0,0.10);border-bottom:1px solid rgba(0,0,0,0.10);"></div>
<div style="position:absolute;left:966px;top:107.1px;width:27.47px;height:11px;line-height:11px;white-space:nowrap;font-size:9px;color:rgb(40, 49, 60);text-align:center;letter-spacing:0.5px;">11.8</div>
<div style="position:absolute;left:993px;top:107px;width:28px;height:11px;background:rgb(143, 177, 217);border-right:1px solid rgba(0,0,0,0.10);border-bottom:1px solid rgba(0,0,0,0.10);"></div>
<div style="position:absolute;left:993px;top:107.1px;width:27.47px;height:11px;line-height:11px;white-space:nowrap;font-size:9px;color:rgb(40, 49, 60);text-align:center;letter-spacing:0.5px;">11.8</div>
<div style="position:absolute;left:1021px;top:107px;width:27px;height:11px;background:rgb(143, 177, 217);border-right:1px solid rgba(0,0,0,0.10);border-bottom:1px solid rgba(0,0,0,0.10);"></div>
<div style="position:absolute;left:1021px;top:107.1px;width:27.47px;height:11px;line-height:11px;white-space:nowrap;font-size:9px;color:rgb(40, 49, 60);text-align:center;letter-spacing:0.5px;">11.8</div>
<div style="position:absolute;left:1048px;top:107px;width:28px;height:11px;background:rgb(143, 177, 217);border-right:1px solid rgba(0,0,0,0.10);border-bottom:1px solid rgba(0,0,0,0.10);"></div>
<div style="position:absolute;left:1048px;top:107.1px;width:27.47px;height:11px;line-height:11px;white-space:nowrap;font-size:9px;color:rgb(40, 49, 60);text-align:center;letter-spacing:0.5px;">11.8</div>
<div style="position:absolute;left:1076px;top:107px;width:27px;height:11px;background:rgb(144, 183, 213);border-right:1px solid rgba(0,0,0,0.10);border-bottom:1px solid rgba(0,0,0,0.10);"></div>
<div style="position:absolute;left:1076px;top:107.1px;width:27.47px;height:11px;line-height:11px;white-space:nowrap;font-size:9px;color:rgb(40, 51, 59);text-align:center;letter-spacing:0.5px;">12.9</div>
<div style="position:absolute;left:1103px;top:107px;width:28px;height:11px;background:rgb(144, 183, 213);border-right:1px solid rgba(0,0,0,0.10);border-bottom:1px solid rgba(0,0,0,0.10);"></div>
<div style="position:absolute;left:1103px;top:107.1px;width:27.47px;height:11px;line-height:11px;white-space:nowrap;font-size:9px;color:rgb(40, 51, 59);text-align:center;letter-spacing:0.5px;">12.9</div>
<div style="position:absolute;left:1131px;top:107px;width:27px;height:11px;background:rgb(144, 183, 213);border-right:1px solid rgba(0,0,0,0.10);border-bottom:1px solid rgba(0,0,0,0.10);"></div>
<div style="position:absolute;left:1131px;top:107.1px;width:27.47px;height:11px;line-height:11px;white-space:nowrap;font-size:9px;color:rgb(40, 51, 59);text-align:center;letter-spacing:0.5px;">12.9</div>
<div style="position:absolute;left:1158px;top:107px;width:28px;height:11px;background:rgb(144, 183, 213);border-right:1px solid rgba(0,0,0,0.10);border-bottom:1px solid rgba(0,0,0,0.10);"></div>
<div style="position:absolute;left:1158px;top:107.1px;width:27.47px;height:11px;line-height:11px;white-space:nowrap;font-size:9px;color:rgb(40, 51, 59);text-align:center;letter-spacing:0.5px;">12.9</div>
<div style="position:absolute;left:856px;top:118px;width:27px;height:10px;background:rgb(142, 172, 221);border-right:1px solid rgba(0,0,0,0.10);border-bottom:1px solid rgba(0,0,0,0.10);"></div>
<div style="position:absolute;left:856px;top:117.5px;width:27.47px;height:11px;line-height:11px;white-space:nowrap;font-size:9px;color:rgb(39, 48, 61);text-align:center;letter-spacing:0.5px;">11.1</div>
<div style="position:absolute;left:883px;top:118px;width:28px;height:10px;background:rgb(142, 172, 221);border-right:1px solid rgba(0,0,0,0.10);border-bottom:1px solid rgba(0,0,0,0.10);"></div>
<div style="position:absolute;left:883px;top:117.5px;width:27.47px;height:11px;line-height:11px;white-space:nowrap;font-size:9px;color:rgb(39, 48, 61);text-align:center;letter-spacing:0.5px;">11.1</div>
<div style="position:absolute;left:911px;top:118px;width:27px;height:10px;background:rgb(144, 183, 213);border-right:1px solid rgba(0,0,0,0.10);border-bottom:1px solid rgba(0,0,0,0.10);"></div>
<div style="position:absolute;left:911px;top:117.5px;width:27.47px;height:11px;line-height:11px;white-space:nowrap;font-size:9px;color:rgb(40, 51, 59);text-align:center;letter-spacing:0.5px;">12.9</div>
<div style="position:absolute;left:938px;top:118px;width:28px;height:10px;background:rgb(140, 195, 197);border-right:1px solid rgba(0,0,0,0.10);border-bottom:1px solid rgba(0,0,0,0.10);"></div>
<div style="position:absolute;left:938px;top:117.5px;width:27.47px;height:11px;line-height:11px;white-space:nowrap;font-size:9px;color:rgb(39, 54, 55);text-align:center;letter-spacing:0.5px;">15.0</div>
<div style="position:absolute;left:966px;top:118px;width:27px;height:10px;background:rgb(140, 195, 197);border-right:1px solid rgba(0,0,0,0.10);border-bottom:1px solid rgba(0,0,0,0.10);"></div>
<div style="position:absolute;left:966px;top:117.5px;width:27.47px;height:11px;line-height:11px;white-space:nowrap;font-size:9px;color:rgb(39, 54, 55);text-align:center;letter-spacing:0.5px;">15.0</div>
<div style="position:absolute;left:993px;top:118px;width:28px;height:10px;background:rgb(140, 195, 197);border-right:1px solid rgba(0,0,0,0.10);border-bottom:1px solid rgba(0,0,0,0.10);"></div>
<div style="position:absolute;left:993px;top:117.5px;width:27.47px;height:11px;line-height:11px;white-space:nowrap;font-size:9px;color:rgb(39, 54, 55);text-align:center;letter-spacing:0.5px;">15.0</div>
<div style="position:absolute;left:1021px;top:118px;width:27px;height:10px;background:rgb(140, 195, 197);border-right:1px solid rgba(0,0,0,0.10);border-bottom:1px solid rgba(0,0,0,0.10);"></div>
<div style="position:absolute;left:1021px;top:117.5px;width:27.47px;height:11px;line-height:11px;white-space:nowrap;font-size:9px;color:rgb(39, 54, 55);text-align:center;letter-spacing:0.5px;">15.0</div>
<div style="position:absolute;left:1048px;top:118px;width:28px;height:10px;background:rgb(140, 195, 197);border-right:1px solid rgba(0,0,0,0.10);border-bottom:1px solid rgba(0,0,0,0.10);"></div>
<div style="position:absolute;left:1048px;top:117.5px;width:27.47px;height:11px;line-height:11px;white-space:nowrap;font-size:9px;color:rgb(39, 54, 55);text-align:center;letter-spacing:0.5px;">15.0</div>
<div style="position:absolute;left:1076px;top:118px;width:27px;height:10px;background:rgb(136, 202, 183);border-right:1px solid rgba(0,0,0,0.10);border-bottom:1px solid rgba(0,0,0,0.10);"></div>
<div style="position:absolute;left:1076px;top:117.5px;width:27.47px;height:11px;line-height:11px;white-space:nowrap;font-size:9px;color:rgb(38, 56, 51);text-align:center;letter-spacing:0.5px;">16.1</div>
<div style="position:absolute;left:1103px;top:118px;width:28px;height:10px;background:rgb(136, 202, 183);border-right:1px solid rgba(0,0,0,0.10);border-bottom:1px solid rgba(0,0,0,0.10);"></div>
<div style="position:absolute;left:1103px;top:117.5px;width:27.47px;height:11px;line-height:11px;white-space:nowrap;font-size:9px;color:rgb(38, 56, 51);text-align:center;letter-spacing:0.5px;">16.1</div>
<div style="position:absolute;left:1131px;top:118px;width:27px;height:10px;background:rgb(136, 202, 183);border-right:1px solid rgba(0,0,0,0.10);border-bottom:1px solid rgba(0,0,0,0.10);"></div>
<div style="position:absolute;left:1131px;top:117.5px;width:27.47px;height:11px;line-height:11px;white-space:nowrap;font-size:9px;color:rgb(38, 56, 51);text-align:center;letter-spacing:0.5px;">16.1</div>
<div style="position:absolute;left:1158px;top:118px;width:28px;height:10px;background:rgb(136, 202, 183);border-right:1px solid rgba(0,0,0,0.10);border-bottom:1px solid rgba(0,0,0,0.10);"></div>
<div style="position:absolute;left:1158px;top:117.5px;width:27.47px;height:11px;line-height:11px;white-space:nowrap;font-size:9px;color:rgb(38, 56, 51);text-align:center;letter-spacing:0.5px;">16.1</div>
<div style="position:absolute;left:856px;top:128px;width:27px;height:10px;background:rgb(144, 189, 210);border-right:1px solid rgba(0,0,0,0.10);border-bottom:1px solid rgba(0,0,0,0.10);"></div>
<div style="position:absolute;left:856px;top:127.9px;width:27.47px;height:11px;line-height:11px;white-space:nowrap;font-size:9px;color:rgb(40, 52, 58);text-align:center;letter-spacing:0.5px;">13.9</div>
<div style="position:absolute;left:883px;top:128px;width:28px;height:10px;background:rgb(144, 189, 210);border-right:1px solid rgba(0,0,0,0.10);border-bottom:1px solid rgba(0,0,0,0.10);"></div>
<div style="position:absolute;left:883px;top:127.9px;width:27.47px;height:11px;line-height:11px;white-space:nowrap;font-size:9px;color:rgb(40, 52, 58);text-align:center;letter-spacing:0.5px;">13.9</div>
<div style="position:absolute;left:911px;top:128px;width:27px;height:10px;background:rgb(136, 202, 183);border-right:1px solid rgba(0,0,0,0.10);border-bottom:1px solid rgba(0,0,0,0.10);"></div>
<div style="position:absolute;left:911px;top:127.9px;width:27.47px;height:11px;line-height:11px;white-space:nowrap;font-size:9px;color:rgb(38, 56, 51);text-align:center;letter-spacing:0.5px;">16.1</div>
<div style="position:absolute;left:938px;top:128px;width:28px;height:10px;background:rgb(132, 214, 159);border-right:1px solid rgba(0,0,0,0.10);border-bottom:1px solid rgba(0,0,0,0.10);"></div>
<div style="position:absolute;left:938px;top:127.9px;width:27.47px;height:11px;line-height:11px;white-space:nowrap;font-size:9px;color:rgb(36, 59, 44);text-align:center;letter-spacing:0.5px;">18.2</div>
<div style="position:absolute;left:966px;top:128px;width:27px;height:10px;background:rgb(132, 214, 159);border-right:1px solid rgba(0,0,0,0.10);border-bottom:1px solid rgba(0,0,0,0.10);"></div>
<div style="position:absolute;left:966px;top:127.9px;width:27.47px;height:11px;line-height:11px;white-space:nowrap;font-size:9px;color:rgb(36, 59, 44);text-align:center;letter-spacing:0.5px;">18.2</div>
<div style="position:absolute;left:993px;top:128px;width:28px;height:10px;background:rgb(132, 214, 159);border-right:1px solid rgba(0,0,0,0.10);border-bottom:1px solid rgba(0,0,0,0.10);"></div>
<div style="position:absolute;left:993px;top:127.9px;width:27.47px;height:11px;line-height:11px;white-space:nowrap;font-size:9px;color:rgb(36, 59, 44);text-align:center;letter-spacing:0.5px;">18.2</div>
<div style="position:absolute;left:1021px;top:128px;width:27px;height:10px;background:rgb(132, 214, 159);border-right:1px solid rgba(0,0,0,0.10);border-bottom:1px solid rgba(0,0,0,0.10);"></div>
<div style="position:absolute;left:1021px;top:127.9px;width:27.47px;height:11px;line-height:11px;white-space:nowrap;font-size:9px;color:rgb(36, 59, 44);text-align:center;letter-spacing:0.5px;">18.2</div>
<div style="position:absolute;left:1048px;top:128px;width:28px;height:10px;background:rgb(132, 214, 159);border-right:1px solid rgba(0,0,0,0.10);border-bottom:1px solid rgba(0,0,0,0.10);"></div>
<div style="position:absolute;left:1048px;top:127.9px;width:27.47px;height:11px;line-height:11px;white-space:nowrap;font-size:9px;color:rgb(36, 59, 44);text-align:center;letter-spacing:0.5px;">18.2</div>
<div style="position:absolute;left:1076px;top:128px;width:27px;height:10px;background:rgb(131, 218, 152);border-right:1px solid rgba(0,0,0,0.10);border-bottom:1px solid rgba(0,0,0,0.10);"></div>
<div style="position:absolute;left:1076px;top:127.9px;width:27.47px;height:11px;line-height:11px;white-space:nowrap;font-size:9px;color:rgb(36, 61, 42);text-align:center;letter-spacing:0.5px;">18.9</div>
<div style="position:absolute;left:1103px;top:128px;width:28px;height:10px;background:rgb(131, 218, 152);border-right:1px solid rgba(0,0,0,0.10);border-bottom:1px solid rgba(0,0,0,0.10);"></div>
<div style="position:absolute;left:1103px;top:127.9px;width:27.47px;height:11px;line-height:11px;white-space:nowrap;font-size:9px;color:rgb(36, 61, 42);text-align:center;letter-spacing:0.5px;">18.9</div>
<div style="position:absolute;left:1131px;top:128px;width:27px;height:10px;background:rgb(131, 218, 152);border-right:1px solid rgba(0,0,0,0.10);border-bottom:1px solid rgba(0,0,0,0.10);"></div>
<div style="position:absolute;left:1131px;top:127.9px;width:27.47px;height:11px;line-height:11px;white-space:nowrap;font-size:9px;color:rgb(36, 61, 42);text-align:center;letter-spacing:0.5px;">18.9</div>
<div style="position:absolute;left:1158px;top:128px;width:28px;height:10px;background:rgb(131, 218, 152);border-right:1px solid rgba(0,0,0,0.10);border-bottom:1px solid rgba(0,0,0,0.10);"></div>
<div style="position:absolute;left:1158px;top:127.9px;width:27.47px;height:11px;line-height:11px;white-space:nowrap;font-size:9px;color:rgb(36, 61, 42);text-align:center;letter-spacing:0.5px;">18.9</div>
<div style="position:absolute;left:856px;top:138px;width:27px;height:11px;background:rgb(144, 184, 213);border-right:1px solid rgba(0,0,0,0.10);border-bottom:1px solid rgba(0,0,0,0.10);"></div>
<div style="position:absolute;left:856px;top:138.3px;width:27.47px;height:11px;line-height:11px;white-space:nowrap;font-size:9px;color:rgb(40, 51, 59);text-align:center;letter-spacing:0.5px;">13.1</div>
<div style="position:absolute;left:883px;top:138px;width:28px;height:11px;background:rgb(144, 189, 210);border-right:1px solid rgba(0,0,0,0.10);border-bottom:1px solid rgba(0,0,0,0.10);"></div>
<div style="position:absolute;left:883px;top:138.3px;width:27.47px;height:11px;line-height:11px;white-space:nowrap;font-size:9px;color:rgb(40, 52, 58);text-align:center;letter-spacing:0.5px;">14.0</div>
<div style="position:absolute;left:911px;top:138px;width:27px;height:11px;background:rgb(135, 207, 173);border-right:1px solid rgba(0,0,0,0.10);border-bottom:1px solid rgba(0,0,0,0.10);"></div>
<div style="position:absolute;left:911px;top:138.3px;width:27.47px;height:11px;line-height:11px;white-space:nowrap;font-size:9px;color:rgb(37, 57, 48);text-align:center;letter-spacing:0.5px;">16.9</div>
<div style="position:absolute;left:938px;top:138px;width:28px;height:11px;background:rgb(131, 218, 152);border-right:1px solid rgba(0,0,0,0.10);border-bottom:1px solid rgba(0,0,0,0.10);"></div>
<div style="position:absolute;left:938px;top:138.3px;width:27.47px;height:11px;line-height:11px;white-space:nowrap;font-size:9px;color:rgb(36, 61, 42);text-align:center;letter-spacing:0.5px;">18.9</div>
<div style="position:absolute;left:966px;top:138px;width:27px;height:11px;background:rgb(128, 231, 129);border-right:1px solid rgba(0,0,0,0.10);border-bottom:1px solid rgba(0,0,0,0.10);"></div>
<div style="position:absolute;left:966px;top:138.3px;width:27.47px;height:11px;line-height:11px;white-space:nowrap;font-size:9px;color:rgb(35, 64, 36);text-align:center;letter-spacing:0.5px;">21.0</div>
<div style="position:absolute;left:993px;top:138px;width:28px;height:11px;background:rgb(128, 231, 129);border-right:1px solid rgba(0,0,0,0.10);border-bottom:1px solid rgba(0,0,0,0.10);"></div>
<div style="position:absolute;left:993px;top:138.3px;width:27.47px;height:11px;line-height:11px;white-space:nowrap;font-size:9px;color:rgb(35, 64, 36);text-align:center;letter-spacing:0.5px;">21.0</div>
<div style="position:absolute;left:1021px;top:138px;width:27px;height:11px;background:rgb(128, 231, 129);border-right:1px solid rgba(0,0,0,0.10);border-bottom:1px solid rgba(0,0,0,0.10);"></div>
<div style="position:absolute;left:1021px;top:138.3px;width:27.47px;height:11px;line-height:11px;white-space:nowrap;font-size:9px;color:rgb(35, 64, 36);text-align:center;letter-spacing:0.5px;">21.0</div>
<div style="position:absolute;left:1048px;top:138px;width:28px;height:11px;background:rgb(139, 229, 133);border-right:1px solid rgba(0,0,0,0.10);border-bottom:1px solid rgba(0,0,0,0.10);"></div>
<div style="position:absolute;left:1048px;top:138.3px;width:27.47px;height:11px;line-height:11px;white-space:nowrap;font-size:9px;color:rgb(38, 64, 37);text-align:center;letter-spacing:0.5px;">22.0</div>
<div style="position:absolute;left:1076px;top:138px;width:27px;height:11px;background:rgb(128, 231, 128);border-right:1px solid rgba(0,0,0,0.10);border-bottom:1px solid rgba(0,0,0,0.10);"></div>
<div style="position:absolute;left:1076px;top:138.3px;width:27.47px;height:11px;line-height:11px;white-space:nowrap;font-size:9px;color:rgb(35, 64, 35);text-align:center;letter-spacing:0.5px;">21.1</div>
<div style="position:absolute;left:1103px;top:138px;width:28px;height:11px;background:rgb(139, 229, 133);border-right:1px solid rgba(0,0,0,0.10);border-bottom:1px solid rgba(0,0,0,0.10);"></div>
<div style="position:absolute;left:1103px;top:138.3px;width:27.47px;height:11px;line-height:11px;white-space:nowrap;font-size:9px;color:rgb(38, 64, 37);text-align:center;letter-spacing:0.5px;">22.0</div>
<div style="position:absolute;left:1131px;top:138px;width:27px;height:11px;background:rgb(139, 229, 133);border-right:1px solid rgba(0,0,0,0.10);border-bottom:1px solid rgba(0,0,0,0.10);"></div>
<div style="position:absolute;left:1131px;top:138.3px;width:27.47px;height:11px;line-height:11px;white-space:nowrap;font-size:9px;color:rgb(38, 64, 37);text-align:center;letter-spacing:0.5px;">22.0</div>
<div style="position:absolute;left:1158px;top:138px;width:28px;height:11px;background:rgb(152, 227, 140);border-right:1px solid rgba(0,0,0,0.10);border-bottom:1px solid rgba(0,0,0,0.10);"></div>
<div style="position:absolute;left:1158px;top:138.3px;width:27.47px;height:11px;line-height:11px;white-space:nowrap;font-size:9px;color:rgb(42, 63, 39);text-align:center;letter-spacing:0.5px;">23.0</div>
<div style="position:absolute;left:856px;top:149px;width:27px;height:10px;background:rgb(143, 190, 209);border-right:1px solid rgba(0,0,0,0.10);border-bottom:1px solid rgba(0,0,0,0.10);"></div>
<div style="position:absolute;left:856px;top:148.7px;width:27.47px;height:11px;line-height:11px;white-space:nowrap;font-size:9px;color:rgb(40, 53, 58);text-align:center;letter-spacing:0.5px;">14.1</div>
<div style="position:absolute;left:883px;top:149px;width:28px;height:10px;background:rgb(140, 195, 197);border-right:1px solid rgba(0,0,0,0.10);border-bottom:1px solid rgba(0,0,0,0.10);"></div>
<div style="position:absolute;left:883px;top:148.7px;width:27.47px;height:11px;line-height:11px;white-space:nowrap;font-size:9px;color:rgb(39, 54, 55);text-align:center;letter-spacing:0.5px;">15.0</div>
<div style="position:absolute;left:911px;top:149px;width:27px;height:10px;background:rgb(133, 213, 163);border-right:1px solid rgba(0,0,0,0.10);border-bottom:1px solid rgba(0,0,0,0.10);"></div>
<div style="position:absolute;left:911px;top:148.7px;width:27.47px;height:11px;line-height:11px;white-space:nowrap;font-size:9px;color:rgb(37, 59, 45);text-align:center;letter-spacing:0.5px;">17.9</div>
<div style="position:absolute;left:938px;top:149px;width:28px;height:10px;background:rgb(129, 225, 140);border-right:1px solid rgba(0,0,0,0.10);border-bottom:1px solid rgba(0,0,0,0.10);"></div>
<div style="position:absolute;left:938px;top:148.7px;width:27.47px;height:11px;line-height:11px;white-space:nowrap;font-size:9px;color:rgb(36, 63, 39);text-align:center;letter-spacing:0.5px;">20.0</div>
<div style="position:absolute;left:966px;top:149px;width:27px;height:10px;background:rgb(139, 229, 133);border-right:1px solid rgba(0,0,0,0.10);border-bottom:1px solid rgba(0,0,0,0.10);"></div>
<div style="position:absolute;left:966px;top:148.7px;width:27.47px;height:11px;line-height:11px;white-space:nowrap;font-size:9px;color:rgb(38, 64, 37);text-align:center;letter-spacing:0.5px;">22.0</div>
<div style="position:absolute;left:993px;top:149px;width:28px;height:10px;background:rgb(139, 229, 133);border-right:1px solid rgba(0,0,0,0.10);border-bottom:1px solid rgba(0,0,0,0.10);"></div>
<div style="position:absolute;left:993px;top:148.7px;width:27.47px;height:11px;line-height:11px;white-space:nowrap;font-size:9px;color:rgb(38, 64, 37);text-align:center;letter-spacing:0.5px;">22.0</div>
<div style="position:absolute;left:1021px;top:149px;width:27px;height:10px;background:rgb(153, 227, 141);border-right:1px solid rgba(0,0,0,0.10);border-bottom:1px solid rgba(0,0,0,0.10);"></div>
<div style="position:absolute;left:1021px;top:148.7px;width:27.47px;height:11px;line-height:11px;white-space:nowrap;font-size:9px;color:rgb(42, 63, 39);text-align:center;letter-spacing:0.5px;">23.1</div>
<div style="position:absolute;left:1048px;top:149px;width:28px;height:10px;background:rgb(153, 227, 141);border-right:1px solid rgba(0,0,0,0.10);border-bottom:1px solid rgba(0,0,0,0.10);"></div>
<div style="position:absolute;left:1048px;top:148.7px;width:27.47px;height:11px;line-height:11px;white-space:nowrap;font-size:9px;color:rgb(42, 63, 39);text-align:center;letter-spacing:0.5px;">23.1</div>
<div style="position:absolute;left:1076px;top:149px;width:27px;height:10px;background:rgb(153, 227, 141);border-right:1px solid rgba(0,0,0,0.10);border-bottom:1px solid rgba(0,0,0,0.10);"></div>
<div style="position:absolute;left:1076px;top:148.7px;width:27.47px;height:11px;line-height:11px;white-space:nowrap;font-size:9px;color:rgb(42, 63, 39);text-align:center;letter-spacing:0.5px;">23.1</div>
<div style="position:absolute;left:1103px;top:149px;width:28px;height:10px;background:rgb(153, 227, 141);border-right:1px solid rgba(0,0,0,0.10);border-bottom:1px solid rgba(0,0,0,0.10);"></div>
<div style="position:absolute;left:1103px;top:148.7px;width:27.47px;height:11px;line-height:11px;white-space:nowrap;font-size:9px;color:rgb(42, 63, 39);text-align:center;letter-spacing:0.5px;">23.1</div>
<div style="position:absolute;left:1131px;top:149px;width:27px;height:10px;background:rgb(153, 227, 141);border-right:1px solid rgba(0,0,0,0.10);border-bottom:1px solid rgba(0,0,0,0.10);"></div>
<div style="position:absolute;left:1131px;top:148.7px;width:27.47px;height:11px;line-height:11px;white-space:nowrap;font-size:9px;color:rgb(42, 63, 39);text-align:center;letter-spacing:0.5px;">23.1</div>
<div style="position:absolute;left:1158px;top:149px;width:28px;height:10px;background:rgb(166, 224, 148);border-right:1px solid rgba(0,0,0,0.10);border-bottom:1px solid rgba(0,0,0,0.10);"></div>
<div style="position:absolute;left:1158px;top:148.7px;width:27.47px;height:11px;line-height:11px;white-space:nowrap;font-size:9px;color:rgb(46, 62, 41);text-align:center;letter-spacing:0.5px;">24.1</div>
<div style="position:absolute;left:856px;top:159px;width:27px;height:11px;background:rgb(143, 191, 207);border-right:1px solid rgba(0,0,0,0.10);border-bottom:1px solid rgba(0,0,0,0.10);"></div>
<div style="position:absolute;left:856px;top:159.1px;width:27.47px;height:11px;line-height:11px;white-space:nowrap;font-size:9px;color:rgb(40, 53, 57);text-align:center;letter-spacing:0.5px;">14.3</div>
<div style="position:absolute;left:883px;top:159px;width:28px;height:11px;background:rgb(142, 191, 205);border-right:1px solid rgba(0,0,0,0.10);border-bottom:1px solid rgba(0,0,0,0.10);"></div>
<div style="position:absolute;left:883px;top:159.1px;width:27.47px;height:11px;line-height:11px;white-space:nowrap;font-size:9px;color:rgb(39, 53, 57);text-align:center;letter-spacing:0.5px;">14.4</div>
<div style="position:absolute;left:911px;top:159px;width:27px;height:11px;background:rgb(133, 213, 163);border-right:1px solid rgba(0,0,0,0.10);border-bottom:1px solid rgba(0,0,0,0.10);"></div>
<div style="position:absolute;left:911px;top:159.1px;width:27.47px;height:11px;line-height:11px;white-space:nowrap;font-size:9px;color:rgb(37, 59, 45);text-align:center;letter-spacing:0.5px;">17.9</div>
<div style="position:absolute;left:938px;top:159px;width:28px;height:11px;background:rgb(131, 231, 129);border-right:1px solid rgba(0,0,0,0.10);border-bottom:1px solid rgba(0,0,0,0.10);"></div>
<div style="position:absolute;left:938px;top:159.1px;width:27.47px;height:11px;line-height:11px;white-space:nowrap;font-size:9px;color:rgb(36, 64, 36);text-align:center;letter-spacing:0.5px;">21.4</div>
<div style="position:absolute;left:966px;top:159px;width:27px;height:11px;background:rgb(161, 225, 145);border-right:1px solid rgba(0,0,0,0.10);border-bottom:1px solid rgba(0,0,0,0.10);"></div>
<div style="position:absolute;left:966px;top:159.1px;width:27.47px;height:11px;line-height:11px;white-space:nowrap;font-size:9px;color:rgb(45, 63, 40);text-align:center;letter-spacing:0.5px;">23.7</div>
<div style="position:absolute;left:993px;top:159px;width:28px;height:11px;background:rgb(167, 224, 148);border-right:1px solid rgba(0,0,0,0.10);border-bottom:1px solid rgba(0,0,0,0.10);"></div>
<div style="position:absolute;left:993px;top:159.1px;width:27.47px;height:11px;line-height:11px;white-space:nowrap;font-size:9px;color:rgb(46, 62, 41);text-align:center;letter-spacing:0.5px;">24.2</div>
<div style="position:absolute;left:1021px;top:159px;width:27px;height:11px;background:rgb(174, 220, 147);border-right:1px solid rgba(0,0,0,0.10);border-bottom:1px solid rgba(0,0,0,0.10);"></div>
<div style="position:absolute;left:1021px;top:159.1px;width:27.47px;height:11px;line-height:11px;white-space:nowrap;font-size:9px;color:rgb(48, 61, 41);text-align:center;letter-spacing:0.5px;">25.1</div>
<div style="position:absolute;left:1048px;top:159px;width:28px;height:11px;background:rgb(174, 220, 147);border-right:1px solid rgba(0,0,0,0.10);border-bottom:1px solid rgba(0,0,0,0.10);"></div>
<div style="position:absolute;left:1048px;top:159.1px;width:27.47px;height:11px;line-height:11px;white-space:nowrap;font-size:9px;color:rgb(48, 61, 41);text-align:center;letter-spacing:0.5px;">25.1</div>
<div style="position:absolute;left:1076px;top:159px;width:27px;height:11px;background:rgb(174, 220, 147);border-right:1px solid rgba(0,0,0,0.10);border-bottom:1px solid rgba(0,0,0,0.10);"></div>
<div style="position:absolute;left:1076px;top:159.1px;width:27.47px;height:11px;line-height:11px;white-space:nowrap;font-size:9px;color:rgb(48, 61, 41);text-align:center;letter-spacing:0.5px;">25.1</div>
<div style="position:absolute;left:1103px;top:159px;width:28px;height:11px;background:rgb(174, 220, 147);border-right:1px solid rgba(0,0,0,0.10);border-bottom:1px solid rgba(0,0,0,0.10);"></div>
<div style="position:absolute;left:1103px;top:159.1px;width:27.47px;height:11px;line-height:11px;white-space:nowrap;font-size:9px;color:rgb(48, 61, 41);text-align:center;letter-spacing:0.5px;">25.1</div>
<div style="position:absolute;left:1131px;top:159px;width:27px;height:11px;background:rgb(174, 220, 147);border-right:1px solid rgba(0,0,0,0.10);border-bottom:1px solid rgba(0,0,0,0.10);"></div>
<div style="position:absolute;left:1131px;top:159.1px;width:27.47px;height:11px;line-height:11px;white-space:nowrap;font-size:9px;color:rgb(48, 61, 41);text-align:center;letter-spacing:0.5px;">25.1</div>
<div style="position:absolute;left:1158px;top:159px;width:28px;height:11px;background:rgb(179, 217, 144);border-right:1px solid rgba(0,0,0,0.10);border-bottom:1px solid rgba(0,0,0,0.10);"></div>
<div style="position:absolute;left:1158px;top:159.1px;width:27.47px;height:11px;line-height:11px;white-space:nowrap;font-size:9px;color:rgb(50, 60, 40);text-align:center;letter-spacing:0.5px;">26.0</div>
<div style="position:absolute;left:856px;top:170px;width:27px;height:10px;background:rgb(134, 208, 171);border-right:1px solid rgba(0,0,0,0.10);border-bottom:1px solid rgba(0,0,0,0.10);"></div>
<div style="position:absolute;left:856px;top:169.5px;width:27.47px;height:11px;line-height:11px;white-space:nowrap;font-size:9px;color:rgb(37, 58, 47);text-align:center;letter-spacing:0.5px;">17.1</div>
<div style="position:absolute;left:883px;top:170px;width:28px;height:10px;background:rgb(133, 213, 163);border-right:1px solid rgba(0,0,0,0.10);border-bottom:1px solid rgba(0,0,0,0.10);"></div>
<div style="position:absolute;left:883px;top:169.5px;width:27.47px;height:11px;line-height:11px;white-space:nowrap;font-size:9px;color:rgb(37, 59, 45);text-align:center;letter-spacing:0.5px;">17.9</div>
<div style="position:absolute;left:911px;top:170px;width:27px;height:10px;background:rgb(137, 230, 133);border-right:1px solid rgba(0,0,0,0.10);border-bottom:1px solid rgba(0,0,0,0.10);"></div>
<div style="position:absolute;left:911px;top:169.5px;width:27.47px;height:11px;line-height:11px;white-space:nowrap;font-size:9px;color:rgb(38, 64, 37);text-align:center;letter-spacing:0.5px;">21.9</div>
<div style="position:absolute;left:938px;top:170px;width:28px;height:10px;background:rgb(171, 223, 149);border-right:1px solid rgba(0,0,0,0.10);border-bottom:1px solid rgba(0,0,0,0.10);"></div>
<div style="position:absolute;left:938px;top:169.5px;width:27.47px;height:11px;line-height:11px;white-space:nowrap;font-size:9px;color:rgb(47, 62, 41);text-align:center;letter-spacing:0.5px;">24.6</div>
<div style="position:absolute;left:966px;top:170px;width:27px;height:10px;background:rgb(188, 209, 140);border-right:1px solid rgba(0,0,0,0.10);border-bottom:1px solid rgba(0,0,0,0.10);"></div>
<div style="position:absolute;left:966px;top:169.5px;width:27.47px;height:11px;line-height:11px;white-space:nowrap;font-size:9px;color:rgb(52, 58, 39);text-align:center;letter-spacing:0.5px;">27.5</div>
<div style="position:absolute;left:993px;top:170px;width:28px;height:10px;background:rgb(203, 194, 143);border-right:1px solid rgba(0,0,0,0.10);border-bottom:1px solid rgba(0,0,0,0.10);"></div>
<div style="position:absolute;left:993px;top:169.5px;width:27.47px;height:11px;line-height:11px;white-space:nowrap;font-size:9px;color:rgb(56, 54, 40);text-align:center;letter-spacing:0.5px;">29.1</div>
<div style="position:absolute;left:1021px;top:170px;width:27px;height:10px;background:rgb(207, 190, 144);border-right:1px solid rgba(0,0,0,0.10);border-bottom:1px solid rgba(0,0,0,0.10);"></div>
<div style="position:absolute;left:1021px;top:169.5px;width:27.47px;height:11px;line-height:11px;white-space:nowrap;font-size:9px;color:rgb(57, 53, 40);text-align:center;letter-spacing:0.5px;">29.6</div>
<div style="position:absolute;left:1048px;top:170px;width:28px;height:10px;background:rgb(207, 190, 144);border-right:1px solid rgba(0,0,0,0.10);border-bottom:1px solid rgba(0,0,0,0.10);"></div>
<div style="position:absolute;left:1048px;top:169.5px;width:27.47px;height:11px;line-height:11px;white-space:nowrap;font-size:9px;color:rgb(57, 53, 40);text-align:center;letter-spacing:0.5px;">29.6</div>
<div style="position:absolute;left:1076px;top:170px;width:27px;height:10px;background:rgb(207, 190, 144);border-right:1px solid rgba(0,0,0,0.10);border-bottom:1px solid rgba(0,0,0,0.10);"></div>
<div style="position:absolute;left:1076px;top:169.5px;width:27.47px;height:11px;line-height:11px;white-space:nowrap;font-size:9px;color:rgb(57, 53, 40);text-align:center;letter-spacing:0.5px;">29.6</div>
<div style="position:absolute;left:1103px;top:170px;width:28px;height:10px;background:rgb(207, 190, 144);border-right:1px solid rgba(0,0,0,0.10);border-bottom:1px solid rgba(0,0,0,0.10);"></div>
<div style="position:absolute;left:1103px;top:169.5px;width:27.47px;height:11px;line-height:11px;white-space:nowrap;font-size:9px;color:rgb(57, 53, 40);text-align:center;letter-spacing:0.5px;">29.6</div>
<div style="position:absolute;left:1131px;top:170px;width:27px;height:10px;background:rgb(207, 190, 144);border-right:1px solid rgba(0,0,0,0.10);border-bottom:1px solid rgba(0,0,0,0.10);"></div>
<div style="position:absolute;left:1131px;top:169.5px;width:27.47px;height:11px;line-height:11px;white-space:nowrap;font-size:9px;color:rgb(57, 53, 40);text-align:center;letter-spacing:0.5px;">29.6</div>
<div style="position:absolute;left:1158px;top:170px;width:28px;height:10px;background:rgb(210, 185, 144);border-right:1px solid rgba(0,0,0,0.10);border-bottom:1px solid rgba(0,0,0,0.10);"></div>
<div style="position:absolute;left:1158px;top:169.5px;width:27.47px;height:11px;line-height:11px;white-space:nowrap;font-size:9px;color:rgb(58, 51, 40);text-align:center;letter-spacing:0.5px;">30.1</div>
<div style="position:absolute;left:856px;top:180px;width:27px;height:10px;background:rgb(132, 214, 159);border-right:1px solid rgba(0,0,0,0.10);border-bottom:1px solid rgba(0,0,0,0.10);"></div>
<div style="position:absolute;left:856px;top:179.9px;width:27.47px;height:11px;line-height:11px;white-space:nowrap;font-size:9px;color:rgb(36, 59, 44);text-align:center;letter-spacing:0.5px;">18.2</div>
<div style="position:absolute;left:883px;top:180px;width:28px;height:10px;background:rgb(131, 220, 149);border-right:1px solid rgba(0,0,0,0.10);border-bottom:1px solid rgba(0,0,0,0.10);"></div>
<div style="position:absolute;left:883px;top:179.9px;width:27.47px;height:11px;line-height:11px;white-space:nowrap;font-size:9px;color:rgb(36, 61, 41);text-align:center;letter-spacing:0.5px;">19.2</div>
<div style="position:absolute;left:911px;top:180px;width:27px;height:10px;background:rgb(166, 224, 148);border-right:1px solid rgba(0,0,0,0.10);border-bottom:1px solid rgba(0,0,0,0.10);"></div>
<div style="position:absolute;left:911px;top:179.9px;width:27.47px;height:11px;line-height:11px;white-space:nowrap;font-size:9px;color:rgb(46, 62, 41);text-align:center;letter-spacing:0.5px;">24.1</div>
<div style="position:absolute;left:938px;top:180px;width:28px;height:10px;background:rgb(191, 206, 141);border-right:1px solid rgba(0,0,0,0.10);border-bottom:1px solid rgba(0,0,0,0.10);"></div>
<div style="position:absolute;left:938px;top:179.9px;width:27.47px;height:11px;line-height:11px;white-space:nowrap;font-size:9px;color:rgb(53, 57, 39);text-align:center;letter-spacing:0.5px;">27.8</div>
<div style="position:absolute;left:966px;top:180px;width:27px;height:10px;background:rgb(220, 173, 144);border-right:1px solid rgba(0,0,0,0.10);border-bottom:1px solid rgba(0,0,0,0.10);"></div>
<div style="position:absolute;left:966px;top:179.9px;width:27.47px;height:11px;line-height:11px;white-space:nowrap;font-size:9px;color:rgb(61, 48, 40);text-align:center;letter-spacing:0.5px;">31.4</div>
<div style="position:absolute;left:993px;top:180px;width:28px;height:10px;background:rgb(231, 158, 144);border-right:1px solid rgba(0,0,0,0.10);border-bottom:1px solid rgba(0,0,0,0.10);"></div>
<div style="position:absolute;left:993px;top:179.9px;width:27.47px;height:11px;line-height:11px;white-space:nowrap;font-size:9px;color:rgb(64, 44, 40);text-align:center;letter-spacing:0.5px;">34.2</div>
<div style="position:absolute;left:1021px;top:180px;width:27px;height:10px;background:rgb(231, 158, 144);border-right:1px solid rgba(0,0,0,0.10);border-bottom:1px solid rgba(0,0,0,0.10);"></div>
<div style="position:absolute;left:1021px;top:179.9px;width:27.47px;height:11px;line-height:11px;white-space:nowrap;font-size:9px;color:rgb(64, 44, 40);text-align:center;letter-spacing:0.5px;">34.3</div>
<div style="position:absolute;left:1048px;top:180px;width:28px;height:10px;background:rgb(231, 158, 144);border-right:1px solid rgba(0,0,0,0.10);border-bottom:1px solid rgba(0,0,0,0.10);"></div>
<div style="position:absolute;left:1048px;top:179.9px;width:27.47px;height:11px;line-height:11px;white-space:nowrap;font-size:9px;color:rgb(64, 44, 40);text-align:center;letter-spacing:0.5px;">34.3</div>
<div style="position:absolute;left:1076px;top:180px;width:27px;height:10px;background:rgb(231, 158, 144);border-right:1px solid rgba(0,0,0,0.10);border-bottom:1px solid rgba(0,0,0,0.10);"></div>
<div style="position:absolute;left:1076px;top:179.9px;width:27.47px;height:11px;line-height:11px;white-space:nowrap;font-size:9px;color:rgb(64, 44, 40);text-align:center;letter-spacing:0.5px;">34.3</div>
<div style="position:absolute;left:1103px;top:180px;width:28px;height:10px;background:rgb(231, 158, 144);border-right:1px solid rgba(0,0,0,0.10);border-bottom:1px solid rgba(0,0,0,0.10);"></div>
<div style="position:absolute;left:1103px;top:179.9px;width:27.47px;height:11px;line-height:11px;white-space:nowrap;font-size:9px;color:rgb(64, 44, 40);text-align:center;letter-spacing:0.5px;">34.3</div>
<div style="position:absolute;left:1131px;top:180px;width:27px;height:10px;background:rgb(231, 158, 144);border-right:1px solid rgba(0,0,0,0.10);border-bottom:1px solid rgba(0,0,0,0.10);"></div>
<div style="position:absolute;left:1131px;top:179.9px;width:27.47px;height:11px;line-height:11px;white-space:nowrap;font-size:9px;color:rgb(64, 44, 40);text-align:center;letter-spacing:0.5px;">34.3</div>
<div style="position:absolute;left:1158px;top:180px;width:28px;height:10px;background:rgb(232, 157, 144);border-right:1px solid rgba(0,0,0,0.10);border-bottom:1px solid rgba(0,0,0,0.10);"></div>
<div style="position:absolute;left:1158px;top:179.9px;width:27.47px;height:11px;line-height:11px;white-space:nowrap;font-size:9px;color:rgb(64, 43, 40);text-align:center;letter-spacing:0.5px;">34.4</div>
<div style="position:absolute;left:856px;top:190px;width:27px;height:11px;background:rgb(134, 208, 171);border-right:1px solid rgba(0,0,0,0.10);border-bottom:1px solid rgba(0,0,0,0.10);"></div>
<div style="position:absolute;left:856px;top:190.3px;width:27.47px;height:11px;line-height:11px;white-space:nowrap;font-size:9px;color:rgb(37, 58, 47);text-align:center;letter-spacing:0.5px;">17.1</div>
<div style="position:absolute;left:883px;top:190px;width:28px;height:11px;background:rgb(134, 208, 171);border-right:1px solid rgba(0,0,0,0.10);border-bottom:1px solid rgba(0,0,0,0.10);"></div>
<div style="position:absolute;left:883px;top:190.3px;width:27.47px;height:11px;line-height:11px;white-space:nowrap;font-size:9px;color:rgb(37, 58, 47);text-align:center;letter-spacing:0.5px;">17.1</div>
<div style="position:absolute;left:911px;top:190px;width:27px;height:11px;background:rgb(166, 224, 148);border-right:1px solid rgba(0,0,0,0.10);border-bottom:1px solid rgba(0,0,0,0.10);"></div>
<div style="position:absolute;left:911px;top:190.3px;width:27.47px;height:11px;line-height:11px;white-space:nowrap;font-size:9px;color:rgb(46, 62, 41);text-align:center;letter-spacing:0.5px;">24.1</div>
<div style="position:absolute;left:938px;top:190px;width:28px;height:11px;background:rgb(203, 194, 143);border-right:1px solid rgba(0,0,0,0.10);border-bottom:1px solid rgba(0,0,0,0.10);"></div>
<div style="position:absolute;left:938px;top:190.3px;width:27.47px;height:11px;line-height:11px;white-space:nowrap;font-size:9px;color:rgb(56, 54, 40);text-align:center;letter-spacing:0.5px;">29.1</div>
<div style="position:absolute;left:966px;top:190px;width:27px;height:11px;background:rgb(229, 162, 144);border-right:1px solid rgba(0,0,0,0.10);border-bottom:1px solid rgba(0,0,0,0.10);"></div>
<div style="position:absolute;left:966px;top:190.3px;width:27.47px;height:11px;line-height:11px;white-space:nowrap;font-size:9px;color:rgb(64, 45, 40);text-align:center;letter-spacing:0.5px;">32.9</div>
<div style="position:absolute;left:993px;top:190px;width:28px;height:11px;background:rgb(236, 144, 147);border-right:1px solid rgba(0,0,0,0.10);border-bottom:1px solid rgba(0,0,0,0.10);"></div>
<div style="position:absolute;left:993px;top:190.3px;width:27.47px;height:11px;line-height:11px;white-space:nowrap;font-size:9px;color:rgb(66, 40, 41);text-align:center;letter-spacing:0.5px;">36.1</div>
<div style="position:absolute;left:1021px;top:190px;width:27px;height:11px;background:rgb(236, 144, 147);border-right:1px solid rgba(0,0,0,0.10);border-bottom:1px solid rgba(0,0,0,0.10);"></div>
<div style="position:absolute;left:1021px;top:190.3px;width:27.47px;height:11px;line-height:11px;white-space:nowrap;font-size:9px;color:rgb(66, 40, 41);text-align:center;letter-spacing:0.5px;">36.1</div>
<div style="position:absolute;left:1048px;top:190px;width:28px;height:11px;background:rgb(236, 144, 147);border-right:1px solid rgba(0,0,0,0.10);border-bottom:1px solid rgba(0,0,0,0.10);"></div>
<div style="position:absolute;left:1048px;top:190.3px;width:27.47px;height:11px;line-height:11px;white-space:nowrap;font-size:9px;color:rgb(66, 40, 41);text-align:center;letter-spacing:0.5px;">36.1</div>
<div style="position:absolute;left:1076px;top:190px;width:27px;height:11px;background:rgb(236, 144, 147);border-right:1px solid rgba(0,0,0,0.10);border-bottom:1px solid rgba(0,0,0,0.10);"></div>
<div style="position:absolute;left:1076px;top:190.3px;width:27.47px;height:11px;line-height:11px;white-space:nowrap;font-size:9px;color:rgb(66, 40, 41);text-align:center;letter-spacing:0.5px;">36.1</div>
<div style="position:absolute;left:1103px;top:190px;width:28px;height:11px;background:rgb(236, 144, 147);border-right:1px solid rgba(0,0,0,0.10);border-bottom:1px solid rgba(0,0,0,0.10);"></div>
<div style="position:absolute;left:1103px;top:190.3px;width:27.47px;height:11px;line-height:11px;white-space:nowrap;font-size:9px;color:rgb(66, 40, 41);text-align:center;letter-spacing:0.5px;">36.1</div>
<div style="position:absolute;left:1131px;top:190px;width:27px;height:11px;background:rgb(236, 144, 147);border-right:1px solid rgba(0,0,0,0.10);border-bottom:1px solid rgba(0,0,0,0.10);"></div>
<div style="position:absolute;left:1131px;top:190.3px;width:27.47px;height:11px;line-height:11px;white-space:nowrap;font-size:9px;color:rgb(66, 40, 41);text-align:center;letter-spacing:0.5px;">36.1</div>
<div style="position:absolute;left:1158px;top:190px;width:28px;height:11px;background:rgb(236, 144, 147);border-right:1px solid rgba(0,0,0,0.10);border-bottom:1px solid rgba(0,0,0,0.10);"></div>
<div style="position:absolute;left:1158px;top:190.3px;width:27.47px;height:11px;line-height:11px;white-space:nowrap;font-size:9px;color:rgb(66, 40, 41);text-align:center;letter-spacing:0.5px;">36.1</div>
<div style="position:absolute;left:856px;top:201px;width:27px;height:10px;background:rgb(134, 208, 171);border-right:1px solid rgba(0,0,0,0.10);border-bottom:1px solid rgba(0,0,0,0.10);"></div>
<div style="position:absolute;left:856px;top:200.7px;width:27.47px;height:11px;line-height:11px;white-space:nowrap;font-size:9px;color:rgb(37, 58, 47);text-align:center;letter-spacing:0.5px;">17.1</div>
<div style="position:absolute;left:883px;top:201px;width:28px;height:10px;background:rgb(134, 208, 171);border-right:1px solid rgba(0,0,0,0.10);border-bottom:1px solid rgba(0,0,0,0.10);"></div>
<div style="position:absolute;left:883px;top:200.7px;width:27.47px;height:11px;line-height:11px;white-space:nowrap;font-size:9px;color:rgb(37, 58, 47);text-align:center;letter-spacing:0.5px;">17.1</div>
<div style="position:absolute;left:911px;top:201px;width:27px;height:10px;background:rgb(166, 224, 148);border-right:1px solid rgba(0,0,0,0.10);border-bottom:1px solid rgba(0,0,0,0.10);"></div>
<div style="position:absolute;left:911px;top:200.7px;width:27.47px;height:11px;line-height:11px;white-space:nowrap;font-size:9px;color:rgb(46, 62, 41);text-align:center;letter-spacing:0.5px;">24.1</div>
<div style="position:absolute;left:938px;top:201px;width:28px;height:10px;background:rgb(210, 185, 144);border-right:1px solid rgba(0,0,0,0.10);border-bottom:1px solid rgba(0,0,0,0.10);"></div>
<div style="position:absolute;left:938px;top:200.7px;width:27.47px;height:11px;line-height:11px;white-space:nowrap;font-size:9px;color:rgb(58, 51, 40);text-align:center;letter-spacing:0.5px;">30.1</div>
<div style="position:absolute;left:966px;top:201px;width:27px;height:10px;background:rgb(231, 158, 144);border-right:1px solid rgba(0,0,0,0.10);border-bottom:1px solid rgba(0,0,0,0.10);"></div>
<div style="position:absolute;left:966px;top:200.7px;width:27.47px;height:11px;line-height:11px;white-space:nowrap;font-size:9px;color:rgb(64, 44, 40);text-align:center;letter-spacing:0.5px;">34.0</div>
<div style="position:absolute;left:993px;top:201px;width:28px;height:10px;background:rgb(240, 136, 150);border-right:1px solid rgba(0,0,0,0.10);border-bottom:1px solid rgba(0,0,0,0.10);"></div>
<div style="position:absolute;left:993px;top:200.7px;width:27.47px;height:11px;line-height:11px;white-space:nowrap;font-size:9px;color:rgb(67, 38, 42);text-align:center;letter-spacing:0.5px;">37.2</div>
<div style="position:absolute;left:1021px;top:201px;width:27px;height:10px;background:rgb(240, 136, 150);border-right:1px solid rgba(0,0,0,0.10);border-bottom:1px solid rgba(0,0,0,0.10);"></div>
<div style="position:absolute;left:1021px;top:200.7px;width:27.47px;height:11px;line-height:11px;white-space:nowrap;font-size:9px;color:rgb(67, 38, 42);text-align:center;letter-spacing:0.5px;">37.2</div>
<div style="position:absolute;left:1048px;top:201px;width:28px;height:10px;background:rgb(240, 136, 150);border-right:1px solid rgba(0,0,0,0.10);border-bottom:1px solid rgba(0,0,0,0.10);"></div>
<div style="position:absolute;left:1048px;top:200.7px;width:27.47px;height:11px;line-height:11px;white-space:nowrap;font-size:9px;color:rgb(67, 38, 42);text-align:center;letter-spacing:0.5px;">37.2</div>
<div style="position:absolute;left:1076px;top:201px;width:27px;height:10px;background:rgb(240, 136, 150);border-right:1px solid rgba(0,0,0,0.10);border-bottom:1px solid rgba(0,0,0,0.10);"></div>
<div style="position:absolute;left:1076px;top:200.7px;width:27.47px;height:11px;line-height:11px;white-space:nowrap;font-size:9px;color:rgb(67, 38, 42);text-align:center;letter-spacing:0.5px;">37.2</div>
<div style="position:absolute;left:1103px;top:201px;width:28px;height:10px;background:rgb(240, 136, 150);border-right:1px solid rgba(0,0,0,0.10);border-bottom:1px solid rgba(0,0,0,0.10);"></div>
<div style="position:absolute;left:1103px;top:200.7px;width:27.47px;height:11px;line-height:11px;white-space:nowrap;font-size:9px;color:rgb(67, 38, 42);text-align:center;letter-spacing:0.5px;">37.2</div>
<div style="position:absolute;left:1131px;top:201px;width:27px;height:10px;background:rgb(240, 136, 150);border-right:1px solid rgba(0,0,0,0.10);border-bottom:1px solid rgba(0,0,0,0.10);"></div>
<div style="position:absolute;left:1131px;top:200.7px;width:27.47px;height:11px;line-height:11px;white-space:nowrap;font-size:9px;color:rgb(67, 38, 42);text-align:center;letter-spacing:0.5px;">37.2</div>
<div style="position:absolute;left:1158px;top:201px;width:28px;height:10px;background:rgb(240, 136, 150);border-right:1px solid rgba(0,0,0,0.10);border-bottom:1px solid rgba(0,0,0,0.10);"></div>
<div style="position:absolute;left:1158px;top:200.7px;width:27.47px;height:11px;line-height:11px;white-space:nowrap;font-size:9px;color:rgb(67, 38, 42);text-align:center;letter-spacing:0.5px;">37.2</div>
<div style="position:absolute;left:830px;top:212.10000000000002px;width:25.5px;height:16.5px;background:#fafafa;border:1px solid #c8c8c8;border-radius:3px;"></div>
<svg style="position:absolute;left:830px;top:212.10000000000002px" width="26" height="17"><polyline points="8,3 8,12 19,12" fill="none" stroke="#555" stroke-width="2"/><polyline points="6,5 8,2.5 10,5" fill="none" stroke="#555" stroke-width="1.5"/><polyline points="17,10 19.5,12 17,14" fill="none" stroke="#555" stroke-width="1.5"/></svg>
<div style="position:absolute;left:856.0px;top:211.10000000000002px;width:27.47px;height:18px;background:#c8c8c8;border-right:2px solid #f0f0f0;border-top:1px solid #e8e8e8;"></div>
<div style="position:absolute;left:856.0px;top:212.10000000000002px;width:26.47px;height:17px;line-height:17px;white-space:nowrap;font-size:9.5px;color:#333;text-align:center;letter-spacing:0.3px;">800</div>
<div style="position:absolute;left:883.47px;top:211.10000000000002px;width:27.47px;height:18px;background:#c8c8c8;border-right:2px solid #f0f0f0;border-top:1px solid #e8e8e8;"></div>
<div style="position:absolute;left:883.47px;top:212.10000000000002px;width:26.47px;height:17px;line-height:17px;white-space:nowrap;font-size:9.5px;color:#333;text-align:center;letter-spacing:0.3px;">1200</div>
<div style="position:absolute;left:910.94px;top:211.10000000000002px;width:27.47px;height:18px;background:#c8c8c8;border-right:2px solid #f0f0f0;border-top:1px solid #e8e8e8;"></div>
<div style="position:absolute;left:910.94px;top:212.10000000000002px;width:26.47px;height:17px;line-height:17px;white-space:nowrap;font-size:9.5px;color:#333;text-align:center;letter-spacing:0.3px;">1800</div>
<div style="position:absolute;left:938.41px;top:211.10000000000002px;width:27.47px;height:18px;background:#c8c8c8;border-right:2px solid #f0f0f0;border-top:1px solid #e8e8e8;"></div>
<div style="position:absolute;left:938.41px;top:212.10000000000002px;width:26.47px;height:17px;line-height:17px;white-space:nowrap;font-size:9.5px;color:#333;text-align:center;letter-spacing:0.3px;">2300</div>
<div style="position:absolute;left:965.88px;top:211.10000000000002px;width:27.47px;height:18px;background:#c8c8c8;border-right:2px solid #f0f0f0;border-top:1px solid #e8e8e8;"></div>
<div style="position:absolute;left:965.88px;top:212.10000000000002px;width:26.47px;height:17px;line-height:17px;white-space:nowrap;font-size:9.5px;color:#333;text-align:center;letter-spacing:0.3px;">2900</div>
<div style="position:absolute;left:993.35px;top:211.10000000000002px;width:27.47px;height:18px;background:#c8c8c8;border-right:2px solid #f0f0f0;border-top:1px solid #e8e8e8;"></div>
<div style="position:absolute;left:993.35px;top:212.10000000000002px;width:26.47px;height:17px;line-height:17px;white-space:nowrap;font-size:9.5px;color:#333;text-align:center;letter-spacing:0.3px;">3400</div>
<div style="position:absolute;left:1020.8199999999999px;top:211.10000000000002px;width:27.47px;height:18px;background:#c8c8c8;border-right:2px solid #f0f0f0;border-top:1px solid #e8e8e8;"></div>
<div style="position:absolute;left:1020.8199999999999px;top:212.10000000000002px;width:26.47px;height:17px;line-height:17px;white-space:nowrap;font-size:9.5px;color:#333;text-align:center;letter-spacing:0.3px;">4000</div>
<div style="position:absolute;left:1048.29px;top:211.10000000000002px;width:27.47px;height:18px;background:#c8c8c8;border-right:2px solid #f0f0f0;border-top:1px solid #e8e8e8;"></div>
<div style="position:absolute;left:1048.29px;top:212.10000000000002px;width:26.47px;height:17px;line-height:17px;white-space:nowrap;font-size:9.5px;color:#333;text-align:center;letter-spacing:0.3px;">4600</div>
<div style="position:absolute;left:1075.76px;top:211.10000000000002px;width:27.47px;height:18px;background:#c8c8c8;border-right:2px solid #f0f0f0;border-top:1px solid #e8e8e8;"></div>
<div style="position:absolute;left:1075.76px;top:212.10000000000002px;width:26.47px;height:17px;line-height:17px;white-space:nowrap;font-size:9.5px;color:#333;text-align:center;letter-spacing:0.3px;">5200</div>
<div style="position:absolute;left:1103.23px;top:211.10000000000002px;width:27.47px;height:18px;background:#c8c8c8;border-right:2px solid #f0f0f0;border-top:1px solid #e8e8e8;"></div>
<div style="position:absolute;left:1103.23px;top:212.10000000000002px;width:26.47px;height:17px;line-height:17px;white-space:nowrap;font-size:9.5px;color:#333;text-align:center;letter-spacing:0.3px;">5700</div>
<div style="position:absolute;left:1130.7px;top:211.10000000000002px;width:27.47px;height:18px;background:#c8c8c8;border-right:2px solid #f0f0f0;border-top:1px solid #e8e8e8;"></div>
<div style="position:absolute;left:1130.7px;top:212.10000000000002px;width:26.47px;height:17px;line-height:17px;white-space:nowrap;font-size:9.5px;color:#333;text-align:center;letter-spacing:0.3px;">6300</div>
<div style="position:absolute;left:1158.17px;top:211.10000000000002px;width:27.47px;height:18px;background:#c8c8c8;border-right:2px solid #f0f0f0;border-top:1px solid #e8e8e8;"></div>
<div style="position:absolute;left:1158.17px;top:212.10000000000002px;width:26.47px;height:17px;line-height:17px;white-space:nowrap;font-size:9.5px;color:#333;text-align:center;letter-spacing:0.3px;">7000</div>
<div style="position:absolute;left:824.5px;top:283.5px;width:366px;height:164px;border:1px solid #a0a0a0;border-right-color:#d0d0d0;border-bottom-color:#d8d8d8;background:#f4f4f4;"></div>
<div style="position:absolute;left:825.5px;top:284.5px;width:364px;height:2px;background:#fff;opacity:0.6;"></div>
<div style="position:absolute;left:832.7px;top:286.2px;height:15px;line-height:15px;white-space:nowrap;transform:scaleX(0.8781);transform-origin:left;font-size:12px;font-weight:bold;color:#1a1a1a;">afrTable1</div>
<div style="position:absolute;left:914.5px;top:287.5px;width:1px;height:13px;background:#b0b0b0;"></div>
<svg style="position:absolute;left:1004px;top:288.5px" width="14" height="14" viewBox="0 0 14 14"><rect x="0.5" y="0.5" width="13" height="13" rx="3" fill="url(#tgr)" stroke="#78b060"/><path d="M7 2.5 L10.5 6.5 L8.3 6.5 L8.3 11 L5.7 11 L5.7 6.5 L3.5 6.5 Z" fill="#f4fff0"/></svg>
<svg style="position:absolute;left:1022.5px;top:288.5px" width="14" height="14" viewBox="0 0 14 14"><rect x="0.5" y="0.5" width="13" height="13" rx="3" fill="url(#tgr)" stroke="#78b060"/><path d="M7 11.5 L10.5 7.5 L8.3 7.5 L8.3 3 L5.7 3 L5.7 7.5 L3.5 7.5 Z" fill="#f4fff0"/></svg>
<svg style="position:absolute;left:1041px;top:288.5px" width="14" height="14" viewBox="0 0 14 14"><rect x="0.5" y="0.5" width="13" height="13" rx="3" fill="url(#tbg)" stroke="#b4b4b4"/><rect x="4.5" y="5" width="5" height="1.3" fill="#444"/><rect x="4.5" y="7.8" width="5" height="1.3" fill="#444"/></svg>
<svg style="position:absolute;left:1059.5px;top:288.5px" width="14" height="14" viewBox="0 0 14 14"><rect x="0.5" y="0.5" width="13" height="13" rx="3" fill="url(#tbg)" stroke="#b4b4b4"/><path d="M7 4 L10.5 9.5 L3.5 9.5 Z" fill="#111"/></svg>
<svg style="position:absolute;left:1078px;top:288.5px" width="14" height="14" viewBox="0 0 14 14"><rect x="0.5" y="0.5" width="13" height="13" rx="3" fill="url(#tbg)" stroke="#b4b4b4"/><path d="M7 10 L10.5 4.5 L3.5 4.5 Z" fill="#111"/></svg>
<svg style="position:absolute;left:1096.5px;top:288.5px" width="14" height="14" viewBox="0 0 14 14"><rect x="0.5" y="0.5" width="13" height="13" rx="3" fill="url(#tbg)" stroke="#b4b4b4"/><rect x="3.5" y="6.4" width="7" height="1.4" fill="#666"/></svg>
<svg style="position:absolute;left:1115px;top:288.5px" width="14" height="14" viewBox="0 0 14 14"><rect x="0.5" y="0.5" width="13" height="13" rx="3" fill="url(#tbg)" stroke="#b4b4b4"/><rect x="3.5" y="6.4" width="7" height="1.4" fill="#555"/><rect x="6.3" y="3.5" width="1.4" height="7" fill="#555"/></svg>
<svg style="position:absolute;left:1133.5px;top:288.5px" width="14" height="14" viewBox="0 0 14 14"><rect x="0.5" y="0.5" width="13" height="13" rx="3" fill="url(#tbg)" stroke="#b4b4b4"/><path d="M7 3 L7 11 M3.5 5 L10.5 9 M3.5 9 L10.5 5" stroke="#111" stroke-width="1.3"/></svg>
<svg style="position:absolute;left:1152px;top:288.5px" width="14" height="14" viewBox="0 0 14 14"><rect x="0.5" y="0.5" width="13" height="13" rx="3" fill="url(#tbg)" stroke="#b4b4b4"/><line x1="4" y1="10" x2="7" y2="7" stroke="#d02020" stroke-width="2.6" stroke-linecap="round"/><line x1="7" y1="7" x2="10" y2="4" stroke="#2030b0" stroke-width="2.6" stroke-linecap="round"/></svg>
<svg style="position:absolute;left:1170.5px;top:288.5px" width="14" height="14" viewBox="0 0 14 14"><rect x="0.5" y="0.5" width="13" height="13" rx="3" fill="url(#tcl)" stroke="#a0a0b0"/></svg>
<div style="position:absolute;left:829px;top:305.3px;width:26px;height:10.4px;background:linear-gradient(#d8d8d8,#c4c4c4);border-bottom:1px solid #8a8a8a;border-top:1px solid #f0f0f0;"></div>
<div style="position:absolute;left:829px;top:305.3px;width:26px;height:11px;line-height:11px;white-space:nowrap;font-size:9px;color:#333;text-align:center;letter-spacing:0.4px;">200</div>
<div style="position:absolute;left:829px;top:315.7px;width:26px;height:10.4px;background:linear-gradient(#d8d8d8,#c4c4c4);border-bottom:1px solid #8a8a8a;border-top:1px solid #f0f0f0;"></div>
<div style="position:absolute;left:829px;top:315.7px;width:26px;height:11px;line-height:11px;white-space:nowrap;font-size:9px;color:#333;text-align:center;letter-spacing:0.4px;">187</div>
<div style="position:absolute;left:829px;top:326.1px;width:26px;height:10.4px;background:linear-gradient(#d8d8d8,#c4c4c4);border-bottom:1px solid #8a8a8a;border-top:1px solid #f0f0f0;"></div>
<div style="position:absolute;left:829px;top:326.1px;width:26px;height:11px;line-height:11px;white-space:nowrap;font-size:9px;color:#333;text-align:center;letter-spacing:0.4px;">175</div>
<div style="position:absolute;left:829px;top:336.5px;width:26px;height:10.4px;background:linear-gradient(#d8d8d8,#c4c4c4);border-bottom:1px solid #8a8a8a;border-top:1px solid #f0f0f0;"></div>
<div style="position:absolute;left:829px;top:336.5px;width:26px;height:11px;line-height:11px;white-space:nowrap;font-size:9px;color:#333;text-align:center;letter-spacing:0.4px;">160</div>
<div style="position:absolute;left:829px;top:346.90000000000003px;width:26px;height:10.4px;background:linear-gradient(#d8d8d8,#c4c4c4);border-bottom:1px solid #8a8a8a;border-top:1px solid #f0f0f0;"></div>
<div style="position:absolute;left:829px;top:346.90000000000003px;width:26px;height:11px;line-height:11px;white-space:nowrap;font-size:9px;color:#333;text-align:center;letter-spacing:0.4px;">145</div>
<div style="position:absolute;left:829px;top:357.3px;width:26px;height:10.4px;background:linear-gradient(#d8d8d8,#c4c4c4);border-bottom:1px solid #8a8a8a;border-top:1px solid #f0f0f0;"></div>
<div style="position:absolute;left:829px;top:357.3px;width:26px;height:11px;line-height:11px;white-space:nowrap;font-size:9px;color:#333;text-align:center;letter-spacing:0.4px;">120</div>
<div style="position:absolute;left:829px;top:367.70000000000005px;width:26px;height:10.4px;background:linear-gradient(#d8d8d8,#c4c4c4);border-bottom:1px solid #8a8a8a;border-top:1px solid #f0f0f0;"></div>
<div style="position:absolute;left:829px;top:367.70000000000005px;width:26px;height:11px;line-height:11px;white-space:nowrap;font-size:9px;color:#333;text-align:center;letter-spacing:0.4px;">100</div>
<div style="position:absolute;left:829px;top:378.1px;width:26px;height:10.4px;background:linear-gradient(#d8d8d8,#c4c4c4);border-bottom:1px solid #8a8a8a;border-top:1px solid #f0f0f0;"></div>
<div style="position:absolute;left:829px;top:378.1px;width:26px;height:11px;line-height:11px;white-space:nowrap;font-size:9px;color:#333;text-align:center;letter-spacing:0.4px;">87</div>
<div style="position:absolute;left:829px;top:388.5px;width:26px;height:10.4px;background:linear-gradient(#d8d8d8,#c4c4c4);border-bottom:1px solid #8a8a8a;border-top:1px solid #f0f0f0;"></div>
<div style="position:absolute;left:829px;top:388.5px;width:26px;height:11px;line-height:11px;white-space:nowrap;font-size:9px;color:#333;text-align:center;letter-spacing:0.4px;">75</div>
<div style="position:absolute;left:829px;top:398.90000000000003px;width:26px;height:10.4px;background:linear-gradient(#d8d8d8,#c4c4c4);border-bottom:1px solid #8a8a8a;border-top:1px solid #f0f0f0;"></div>
<div style="position:absolute;left:829px;top:398.90000000000003px;width:26px;height:11px;line-height:11px;white-space:nowrap;font-size:9px;color:#333;text-align:center;letter-spacing:0.4px;">60</div>
<div style="position:absolute;left:829px;top:409.3px;width:26px;height:10.4px;background:linear-gradient(#d8d8d8,#c4c4c4);border-bottom:1px solid #8a8a8a;border-top:1px solid #f0f0f0;"></div>
<div style="position:absolute;left:829px;top:409.3px;width:26px;height:11px;line-height:11px;white-space:nowrap;font-size:9px;color:#333;text-align:center;letter-spacing:0.4px;">45</div>
<div style="position:absolute;left:829px;top:419.70000000000005px;width:26px;height:10.4px;background:linear-gradient(#d8d8d8,#c4c4c4);border-bottom:1px solid #8a8a8a;border-top:1px solid #f0f0f0;"></div>
<div style="position:absolute;left:829px;top:419.70000000000005px;width:26px;height:11px;line-height:11px;white-space:nowrap;font-size:9px;color:#333;text-align:center;letter-spacing:0.4px;">30</div>
<div style="position:absolute;left:856px;top:305px;width:27px;height:11px;background:rgb(112, 112, 240);border-right:1px solid rgba(0,0,0,0.10);border-bottom:1px solid rgba(0,0,0,0.10);"></div>
<div style="position:absolute;left:856px;top:305.3px;width:27.47px;height:11px;line-height:11px;white-space:nowrap;font-size:9px;color:rgb(31, 31, 67);text-align:center;letter-spacing:0.5px;">11.8</div>
<div style="position:absolute;left:883px;top:305px;width:28px;height:11px;background:rgb(112, 112, 240);border-right:1px solid rgba(0,0,0,0.10);border-bottom:1px solid rgba(0,0,0,0.10);"></div>
<div style="position:absolute;left:883px;top:305.3px;width:27.47px;height:11px;line-height:11px;white-space:nowrap;font-size:9px;color:rgb(31, 31, 67);text-align:center;letter-spacing:0.5px;">11.8</div>
<div style="position:absolute;left:911px;top:305px;width:27px;height:11px;background:rgb(112, 112, 240);border-right:1px solid rgba(0,0,0,0.10);border-bottom:1px solid rgba(0,0,0,0.10);"></div>
<div style="position:absolute;left:911px;top:305.3px;width:27.47px;height:11px;line-height:11px;white-space:nowrap;font-size:9px;color:rgb(31, 31, 67);text-align:center;letter-spacing:0.5px;">11.8</div>
<div style="position:absolute;left:938px;top:305px;width:28px;height:11px;background:rgb(112, 112, 240);border-right:1px solid rgba(0,0,0,0.10);border-bottom:1px solid rgba(0,0,0,0.10);"></div>
<div style="position:absolute;left:938px;top:305.3px;width:27.47px;height:11px;line-height:11px;white-space:nowrap;font-size:9px;color:rgb(31, 31, 67);text-align:center;letter-spacing:0.5px;">11.8</div>
<div style="position:absolute;left:966px;top:305px;width:27px;height:11px;background:rgb(112, 112, 240);border-right:1px solid rgba(0,0,0,0.10);border-bottom:1px solid rgba(0,0,0,0.10);"></div>
<div style="position:absolute;left:966px;top:305.3px;width:27.47px;height:11px;line-height:11px;white-space:nowrap;font-size:9px;color:rgb(31, 31, 67);text-align:center;letter-spacing:0.5px;">11.8</div>
<div style="position:absolute;left:993px;top:305px;width:28px;height:11px;background:rgb(112, 112, 240);border-right:1px solid rgba(0,0,0,0.10);border-bottom:1px solid rgba(0,0,0,0.10);"></div>
<div style="position:absolute;left:993px;top:305.3px;width:27.47px;height:11px;line-height:11px;white-space:nowrap;font-size:9px;color:rgb(31, 31, 67);text-align:center;letter-spacing:0.5px;">11.8</div>
<div style="position:absolute;left:1021px;top:305px;width:27px;height:11px;background:rgb(112, 112, 240);border-right:1px solid rgba(0,0,0,0.10);border-bottom:1px solid rgba(0,0,0,0.10);"></div>
<div style="position:absolute;left:1021px;top:305.3px;width:27.47px;height:11px;line-height:11px;white-space:nowrap;font-size:9px;color:rgb(31, 31, 67);text-align:center;letter-spacing:0.5px;">11.8</div>
<div style="position:absolute;left:1048px;top:305px;width:28px;height:11px;background:rgb(112, 112, 240);border-right:1px solid rgba(0,0,0,0.10);border-bottom:1px solid rgba(0,0,0,0.10);"></div>
<div style="position:absolute;left:1048px;top:305.3px;width:27.47px;height:11px;line-height:11px;white-space:nowrap;font-size:9px;color:rgb(31, 31, 67);text-align:center;letter-spacing:0.5px;">11.8</div>
<div style="position:absolute;left:1076px;top:305px;width:27px;height:11px;background:rgb(112, 112, 240);border-right:1px solid rgba(0,0,0,0.10);border-bottom:1px solid rgba(0,0,0,0.10);"></div>
<div style="position:absolute;left:1076px;top:305.3px;width:27.47px;height:11px;line-height:11px;white-space:nowrap;font-size:9px;color:rgb(31, 31, 67);text-align:center;letter-spacing:0.5px;">11.8</div>
<div style="position:absolute;left:1103px;top:305px;width:28px;height:11px;background:rgb(112, 112, 240);border-right:1px solid rgba(0,0,0,0.10);border-bottom:1px solid rgba(0,0,0,0.10);"></div>
<div style="position:absolute;left:1103px;top:305.3px;width:27.47px;height:11px;line-height:11px;white-space:nowrap;font-size:9px;color:rgb(31, 31, 67);text-align:center;letter-spacing:0.5px;">11.8</div>
<div style="position:absolute;left:1131px;top:305px;width:27px;height:11px;background:rgb(112, 112, 240);border-right:1px solid rgba(0,0,0,0.10);border-bottom:1px solid rgba(0,0,0,0.10);"></div>
<div style="position:absolute;left:1131px;top:305.3px;width:27.47px;height:11px;line-height:11px;white-space:nowrap;font-size:9px;color:rgb(31, 31, 67);text-align:center;letter-spacing:0.5px;">11.8</div>
<div style="position:absolute;left:1158px;top:305px;width:28px;height:11px;background:rgb(112, 112, 240);border-right:1px solid rgba(0,0,0,0.10);border-bottom:1px solid rgba(0,0,0,0.10);"></div>
<div style="position:absolute;left:1158px;top:305.3px;width:27.47px;height:11px;line-height:11px;white-space:nowrap;font-size:9px;color:rgb(31, 31, 67);text-align:center;letter-spacing:0.5px;">11.8</div>
<div style="position:absolute;left:856px;top:316px;width:27px;height:10px;background:rgb(112, 112, 240);border-right:1px solid rgba(0,0,0,0.10);border-bottom:1px solid rgba(0,0,0,0.10);"></div>
<div style="position:absolute;left:856px;top:315.7px;width:27.47px;height:11px;line-height:11px;white-space:nowrap;font-size:9px;color:rgb(31, 31, 67);text-align:center;letter-spacing:0.5px;">11.8</div>
<div style="position:absolute;left:883px;top:316px;width:28px;height:10px;background:rgb(112, 112, 240);border-right:1px solid rgba(0,0,0,0.10);border-bottom:1px solid rgba(0,0,0,0.10);"></div>
<div style="position:absolute;left:883px;top:315.7px;width:27.47px;height:11px;line-height:11px;white-space:nowrap;font-size:9px;color:rgb(31, 31, 67);text-align:center;letter-spacing:0.5px;">11.8</div>
<div style="position:absolute;left:911px;top:316px;width:27px;height:10px;background:rgb(112, 112, 240);border-right:1px solid rgba(0,0,0,0.10);border-bottom:1px solid rgba(0,0,0,0.10);"></div>
<div style="position:absolute;left:911px;top:315.7px;width:27.47px;height:11px;line-height:11px;white-space:nowrap;font-size:9px;color:rgb(31, 31, 67);text-align:center;letter-spacing:0.5px;">11.8</div>
<div style="position:absolute;left:938px;top:316px;width:28px;height:10px;background:rgb(112, 112, 240);border-right:1px solid rgba(0,0,0,0.10);border-bottom:1px solid rgba(0,0,0,0.10);"></div>
<div style="position:absolute;left:938px;top:315.7px;width:27.47px;height:11px;line-height:11px;white-space:nowrap;font-size:9px;color:rgb(31, 31, 67);text-align:center;letter-spacing:0.5px;">11.8</div>
<div style="position:absolute;left:966px;top:316px;width:27px;height:10px;background:rgb(112, 112, 240);border-right:1px solid rgba(0,0,0,0.10);border-bottom:1px solid rgba(0,0,0,0.10);"></div>
<div style="position:absolute;left:966px;top:315.7px;width:27.47px;height:11px;line-height:11px;white-space:nowrap;font-size:9px;color:rgb(31, 31, 67);text-align:center;letter-spacing:0.5px;">11.8</div>
<div style="position:absolute;left:993px;top:316px;width:28px;height:10px;background:rgb(112, 112, 240);border-right:1px solid rgba(0,0,0,0.10);border-bottom:1px solid rgba(0,0,0,0.10);"></div>
<div style="position:absolute;left:993px;top:315.7px;width:27.47px;height:11px;line-height:11px;white-space:nowrap;font-size:9px;color:rgb(31, 31, 67);text-align:center;letter-spacing:0.5px;">11.8</div>
<div style="position:absolute;left:1021px;top:316px;width:27px;height:10px;background:rgb(112, 112, 240);border-right:1px solid rgba(0,0,0,0.10);border-bottom:1px solid rgba(0,0,0,0.10);"></div>
<div style="position:absolute;left:1021px;top:315.7px;width:27.47px;height:11px;line-height:11px;white-space:nowrap;font-size:9px;color:rgb(31, 31, 67);text-align:center;letter-spacing:0.5px;">11.8</div>
<div style="position:absolute;left:1048px;top:316px;width:28px;height:10px;background:rgb(112, 112, 240);border-right:1px solid rgba(0,0,0,0.10);border-bottom:1px solid rgba(0,0,0,0.10);"></div>
<div style="position:absolute;left:1048px;top:315.7px;width:27.47px;height:11px;line-height:11px;white-space:nowrap;font-size:9px;color:rgb(31, 31, 67);text-align:center;letter-spacing:0.5px;">11.8</div>
<div style="position:absolute;left:1076px;top:316px;width:27px;height:10px;background:rgb(112, 112, 240);border-right:1px solid rgba(0,0,0,0.10);border-bottom:1px solid rgba(0,0,0,0.10);"></div>
<div style="position:absolute;left:1076px;top:315.7px;width:27.47px;height:11px;line-height:11px;white-space:nowrap;font-size:9px;color:rgb(31, 31, 67);text-align:center;letter-spacing:0.5px;">11.8</div>
<div style="position:absolute;left:1103px;top:316px;width:28px;height:10px;background:rgb(112, 112, 240);border-right:1px solid rgba(0,0,0,0.10);border-bottom:1px solid rgba(0,0,0,0.10);"></div>
<div style="position:absolute;left:1103px;top:315.7px;width:27.47px;height:11px;line-height:11px;white-space:nowrap;font-size:9px;color:rgb(31, 31, 67);text-align:center;letter-spacing:0.5px;">11.8</div>
<div style="position:absolute;left:1131px;top:316px;width:27px;height:10px;background:rgb(112, 112, 240);border-right:1px solid rgba(0,0,0,0.10);border-bottom:1px solid rgba(0,0,0,0.10);"></div>
<div style="position:absolute;left:1131px;top:315.7px;width:27.47px;height:11px;line-height:11px;white-space:nowrap;font-size:9px;color:rgb(31, 31, 67);text-align:center;letter-spacing:0.5px;">11.8</div>
<div style="position:absolute;left:1158px;top:316px;width:28px;height:10px;background:rgb(112, 112, 240);border-right:1px solid rgba(0,0,0,0.10);border-bottom:1px solid rgba(0,0,0,0.10);"></div>
<div style="position:absolute;left:1158px;top:315.7px;width:27.47px;height:11px;line-height:11px;white-space:nowrap;font-size:9px;color:rgb(31, 31, 67);text-align:center;letter-spacing:0.5px;">11.8</div>
<div style="position:absolute;left:856px;top:326px;width:27px;height:10px;background:rgb(112, 112, 240);border-right:1px solid rgba(0,0,0,0.10);border-bottom:1px solid rgba(0,0,0,0.10);"></div>
<div style="position:absolute;left:856px;top:326.1px;width:27.47px;height:11px;line-height:11px;white-space:nowrap;font-size:9px;color:rgb(31, 31, 67);text-align:center;letter-spacing:0.5px;">11.8</div>
<div style="position:absolute;left:883px;top:326px;width:28px;height:10px;background:rgb(112, 112, 240);border-right:1px solid rgba(0,0,0,0.10);border-bottom:1px solid rgba(0,0,0,0.10);"></div>
<div style="position:absolute;left:883px;top:326.1px;width:27.47px;height:11px;line-height:11px;white-space:nowrap;font-size:9px;color:rgb(31, 31, 67);text-align:center;letter-spacing:0.5px;">11.8</div>
<div style="position:absolute;left:911px;top:326px;width:27px;height:10px;background:rgb(112, 112, 240);border-right:1px solid rgba(0,0,0,0.10);border-bottom:1px solid rgba(0,0,0,0.10);"></div>
<div style="position:absolute;left:911px;top:326.1px;width:27.47px;height:11px;line-height:11px;white-space:nowrap;font-size:9px;color:rgb(31, 31, 67);text-align:center;letter-spacing:0.5px;">11.8</div>
<div style="position:absolute;left:938px;top:326px;width:28px;height:10px;background:rgb(112, 112, 240);border-right:1px solid rgba(0,0,0,0.10);border-bottom:1px solid rgba(0,0,0,0.10);"></div>
<div style="position:absolute;left:938px;top:326.1px;width:27.47px;height:11px;line-height:11px;white-space:nowrap;font-size:9px;color:rgb(31, 31, 67);text-align:center;letter-spacing:0.5px;">11.8</div>
<div style="position:absolute;left:966px;top:326px;width:27px;height:10px;background:rgb(112, 112, 240);border-right:1px solid rgba(0,0,0,0.10);border-bottom:1px solid rgba(0,0,0,0.10);"></div>
<div style="position:absolute;left:966px;top:326.1px;width:27.47px;height:11px;line-height:11px;white-space:nowrap;font-size:9px;color:rgb(31, 31, 67);text-align:center;letter-spacing:0.5px;">11.8</div>
<div style="position:absolute;left:993px;top:326px;width:28px;height:10px;background:rgb(112, 112, 240);border-right:1px solid rgba(0,0,0,0.10);border-bottom:1px solid rgba(0,0,0,0.10);"></div>
<div style="position:absolute;left:993px;top:326.1px;width:27.47px;height:11px;line-height:11px;white-space:nowrap;font-size:9px;color:rgb(31, 31, 67);text-align:center;letter-spacing:0.5px;">11.8</div>
<div style="position:absolute;left:1021px;top:326px;width:27px;height:10px;background:rgb(112, 112, 240);border-right:1px solid rgba(0,0,0,0.10);border-bottom:1px solid rgba(0,0,0,0.10);"></div>
<div style="position:absolute;left:1021px;top:326.1px;width:27.47px;height:11px;line-height:11px;white-space:nowrap;font-size:9px;color:rgb(31, 31, 67);text-align:center;letter-spacing:0.5px;">11.8</div>
<div style="position:absolute;left:1048px;top:326px;width:28px;height:10px;background:rgb(112, 112, 240);border-right:1px solid rgba(0,0,0,0.10);border-bottom:1px solid rgba(0,0,0,0.10);"></div>
<div style="position:absolute;left:1048px;top:326.1px;width:27.47px;height:11px;line-height:11px;white-space:nowrap;font-size:9px;color:rgb(31, 31, 67);text-align:center;letter-spacing:0.5px;">11.8</div>
<div style="position:absolute;left:1076px;top:326px;width:27px;height:10px;background:rgb(112, 112, 240);border-right:1px solid rgba(0,0,0,0.10);border-bottom:1px solid rgba(0,0,0,0.10);"></div>
<div style="position:absolute;left:1076px;top:326.1px;width:27.47px;height:11px;line-height:11px;white-space:nowrap;font-size:9px;color:rgb(31, 31, 67);text-align:center;letter-spacing:0.5px;">11.8</div>
<div style="position:absolute;left:1103px;top:326px;width:28px;height:10px;background:rgb(112, 112, 240);border-right:1px solid rgba(0,0,0,0.10);border-bottom:1px solid rgba(0,0,0,0.10);"></div>
<div style="position:absolute;left:1103px;top:326.1px;width:27.47px;height:11px;line-height:11px;white-space:nowrap;font-size:9px;color:rgb(31, 31, 67);text-align:center;letter-spacing:0.5px;">11.8</div>
<div style="position:absolute;left:1131px;top:326px;width:27px;height:10px;background:rgb(112, 112, 240);border-right:1px solid rgba(0,0,0,0.10);border-bottom:1px solid rgba(0,0,0,0.10);"></div>
<div style="position:absolute;left:1131px;top:326.1px;width:27.47px;height:11px;line-height:11px;white-space:nowrap;font-size:9px;color:rgb(31, 31, 67);text-align:center;letter-spacing:0.5px;">11.8</div>
<div style="position:absolute;left:1158px;top:326px;width:28px;height:10px;background:rgb(112, 112, 240);border-right:1px solid rgba(0,0,0,0.10);border-bottom:1px solid rgba(0,0,0,0.10);"></div>
<div style="position:absolute;left:1158px;top:326.1px;width:27.47px;height:11px;line-height:11px;white-space:nowrap;font-size:9px;color:rgb(31, 31, 67);text-align:center;letter-spacing:0.5px;">11.8</div>
<div style="position:absolute;left:856px;top:336px;width:27px;height:11px;background:rgb(140, 157, 231);border-right:1px solid rgba(0,0,0,0.10);border-bottom:1px solid rgba(0,0,0,0.10);"></div>
<div style="position:absolute;left:856px;top:336.5px;width:27.47px;height:11px;line-height:11px;white-space:nowrap;font-size:9px;color:rgb(39, 43, 64);text-align:center;letter-spacing:0.5px;">12.2</div>
<div style="position:absolute;left:883px;top:336px;width:28px;height:11px;background:rgb(140, 157, 231);border-right:1px solid rgba(0,0,0,0.10);border-bottom:1px solid rgba(0,0,0,0.10);"></div>
<div style="position:absolute;left:883px;top:336.5px;width:27.47px;height:11px;line-height:11px;white-space:nowrap;font-size:9px;color:rgb(39, 43, 64);text-align:center;letter-spacing:0.5px;">12.2</div>
<div style="position:absolute;left:911px;top:336px;width:27px;height:11px;background:rgb(140, 157, 231);border-right:1px solid rgba(0,0,0,0.10);border-bottom:1px solid rgba(0,0,0,0.10);"></div>
<div style="position:absolute;left:911px;top:336.5px;width:27.47px;height:11px;line-height:11px;white-space:nowrap;font-size:9px;color:rgb(39, 43, 64);text-align:center;letter-spacing:0.5px;">12.2</div>
<div style="position:absolute;left:938px;top:336px;width:28px;height:11px;background:rgb(140, 157, 231);border-right:1px solid rgba(0,0,0,0.10);border-bottom:1px solid rgba(0,0,0,0.10);"></div>
<div style="position:absolute;left:938px;top:336.5px;width:27.47px;height:11px;line-height:11px;white-space:nowrap;font-size:9px;color:rgb(39, 43, 64);text-align:center;letter-spacing:0.5px;">12.2</div>
<div style="position:absolute;left:966px;top:336px;width:27px;height:11px;background:rgb(140, 157, 231);border-right:1px solid rgba(0,0,0,0.10);border-bottom:1px solid rgba(0,0,0,0.10);"></div>
<div style="position:absolute;left:966px;top:336.5px;width:27.47px;height:11px;line-height:11px;white-space:nowrap;font-size:9px;color:rgb(39, 43, 64);text-align:center;letter-spacing:0.5px;">12.2</div>
<div style="position:absolute;left:993px;top:336px;width:28px;height:11px;background:rgb(140, 157, 231);border-right:1px solid rgba(0,0,0,0.10);border-bottom:1px solid rgba(0,0,0,0.10);"></div>
<div style="position:absolute;left:993px;top:336.5px;width:27.47px;height:11px;line-height:11px;white-space:nowrap;font-size:9px;color:rgb(39, 43, 64);text-align:center;letter-spacing:0.5px;">12.2</div>
<div style="position:absolute;left:1021px;top:336px;width:27px;height:11px;background:rgb(140, 157, 231);border-right:1px solid rgba(0,0,0,0.10);border-bottom:1px solid rgba(0,0,0,0.10);"></div>
<div style="position:absolute;left:1021px;top:336.5px;width:27.47px;height:11px;line-height:11px;white-space:nowrap;font-size:9px;color:rgb(39, 43, 64);text-align:center;letter-spacing:0.5px;">12.2</div>
<div style="position:absolute;left:1048px;top:336px;width:28px;height:11px;background:rgb(140, 157, 231);border-right:1px solid rgba(0,0,0,0.10);border-bottom:1px solid rgba(0,0,0,0.10);"></div>
<div style="position:absolute;left:1048px;top:336.5px;width:27.47px;height:11px;line-height:11px;white-space:nowrap;font-size:9px;color:rgb(39, 43, 64);text-align:center;letter-spacing:0.5px;">12.2</div>
<div style="position:absolute;left:1076px;top:336px;width:27px;height:11px;background:rgb(140, 157, 231);border-right:1px solid rgba(0,0,0,0.10);border-bottom:1px solid rgba(0,0,0,0.10);"></div>
<div style="position:absolute;left:1076px;top:336.5px;width:27.47px;height:11px;line-height:11px;white-space:nowrap;font-size:9px;color:rgb(39, 43, 64);text-align:center;letter-spacing:0.5px;">12.2</div>
<div style="position:absolute;left:1103px;top:336px;width:28px;height:11px;background:rgb(140, 157, 231);border-right:1px solid rgba(0,0,0,0.10);border-bottom:1px solid rgba(0,0,0,0.10);"></div>
<div style="position:absolute;left:1103px;top:336.5px;width:27.47px;height:11px;line-height:11px;white-space:nowrap;font-size:9px;color:rgb(39, 43, 64);text-align:center;letter-spacing:0.5px;">12.2</div>
<div style="position:absolute;left:1131px;top:336px;width:27px;height:11px;background:rgb(140, 157, 231);border-right:1px solid rgba(0,0,0,0.10);border-bottom:1px solid rgba(0,0,0,0.10);"></div>
<div style="position:absolute;left:1131px;top:336.5px;width:27.47px;height:11px;line-height:11px;white-space:nowrap;font-size:9px;color:rgb(39, 43, 64);text-align:center;letter-spacing:0.5px;">12.2</div>
<div style="position:absolute;left:1158px;top:336px;width:28px;height:11px;background:rgb(140, 157, 231);border-right:1px solid rgba(0,0,0,0.10);border-bottom:1px solid rgba(0,0,0,0.10);"></div>
<div style="position:absolute;left:1158px;top:336.5px;width:27.47px;height:11px;line-height:11px;white-space:nowrap;font-size:9px;color:rgb(39, 43, 64);text-align:center;letter-spacing:0.5px;">12.2</div>
<div style="position:absolute;left:856px;top:347px;width:27px;height:10px;background:rgb(140, 157, 231);border-right:1px solid rgba(0,0,0,0.10);border-bottom:1px solid rgba(0,0,0,0.10);"></div>
<div style="position:absolute;left:856px;top:346.90000000000003px;width:27.47px;height:11px;line-height:11px;white-space:nowrap;font-size:9px;color:rgb(39, 43, 64);text-align:center;letter-spacing:0.5px;">12.2</div>
<div style="position:absolute;left:883px;top:347px;width:28px;height:10px;background:rgb(140, 157, 231);border-right:1px solid rgba(0,0,0,0.10);border-bottom:1px solid rgba(0,0,0,0.10);"></div>
<div style="position:absolute;left:883px;top:346.90000000000003px;width:27.47px;height:11px;line-height:11px;white-space:nowrap;font-size:9px;color:rgb(39, 43, 64);text-align:center;letter-spacing:0.5px;">12.2</div>
<div style="position:absolute;left:911px;top:347px;width:27px;height:10px;background:rgb(140, 157, 231);border-right:1px solid rgba(0,0,0,0.10);border-bottom:1px solid rgba(0,0,0,0.10);"></div>
<div style="position:absolute;left:911px;top:346.90000000000003px;width:27.47px;height:11px;line-height:11px;white-space:nowrap;font-size:9px;color:rgb(39, 43, 64);text-align:center;letter-spacing:0.5px;">12.2</div>
<div style="position:absolute;left:938px;top:347px;width:28px;height:10px;background:rgb(140, 157, 231);border-right:1px solid rgba(0,0,0,0.10);border-bottom:1px solid rgba(0,0,0,0.10);"></div>
<div style="position:absolute;left:938px;top:346.90000000000003px;width:27.47px;height:11px;line-height:11px;white-space:nowrap;font-size:9px;color:rgb(39, 43, 64);text-align:center;letter-spacing:0.5px;">12.2</div>
<div style="position:absolute;left:966px;top:347px;width:27px;height:10px;background:rgb(140, 157, 231);border-right:1px solid rgba(0,0,0,0.10);border-bottom:1px solid rgba(0,0,0,0.10);"></div>
<div style="position:absolute;left:966px;top:346.90000000000003px;width:27.47px;height:11px;line-height:11px;white-space:nowrap;font-size:9px;color:rgb(39, 43, 64);text-align:center;letter-spacing:0.5px;">12.2</div>
<div style="position:absolute;left:993px;top:347px;width:28px;height:10px;background:rgb(140, 157, 231);border-right:1px solid rgba(0,0,0,0.10);border-bottom:1px solid rgba(0,0,0,0.10);"></div>
<div style="position:absolute;left:993px;top:346.90000000000003px;width:27.47px;height:11px;line-height:11px;white-space:nowrap;font-size:9px;color:rgb(39, 43, 64);text-align:center;letter-spacing:0.5px;">12.2</div>
<div style="position:absolute;left:1021px;top:347px;width:27px;height:10px;background:rgb(140, 157, 231);border-right:1px solid rgba(0,0,0,0.10);border-bottom:1px solid rgba(0,0,0,0.10);"></div>
<div style="position:absolute;left:1021px;top:346.90000000000003px;width:27.47px;height:11px;line-height:11px;white-space:nowrap;font-size:9px;color:rgb(39, 43, 64);text-align:center;letter-spacing:0.5px;">12.2</div>
<div style="position:absolute;left:1048px;top:347px;width:28px;height:10px;background:rgb(140, 157, 231);border-right:1px solid rgba(0,0,0,0.10);border-bottom:1px solid rgba(0,0,0,0.10);"></div>
<div style="position:absolute;left:1048px;top:346.90000000000003px;width:27.47px;height:11px;line-height:11px;white-space:nowrap;font-size:9px;color:rgb(39, 43, 64);text-align:center;letter-spacing:0.5px;">12.2</div>
<div style="position:absolute;left:1076px;top:347px;width:27px;height:10px;background:rgb(140, 157, 231);border-right:1px solid rgba(0,0,0,0.10);border-bottom:1px solid rgba(0,0,0,0.10);"></div>
<div style="position:absolute;left:1076px;top:346.90000000000003px;width:27.47px;height:11px;line-height:11px;white-space:nowrap;font-size:9px;color:rgb(39, 43, 64);text-align:center;letter-spacing:0.5px;">12.2</div>
<div style="position:absolute;left:1103px;top:347px;width:28px;height:10px;background:rgb(140, 157, 231);border-right:1px solid rgba(0,0,0,0.10);border-bottom:1px solid rgba(0,0,0,0.10);"></div>
<div style="position:absolute;left:1103px;top:346.90000000000003px;width:27.47px;height:11px;line-height:11px;white-space:nowrap;font-size:9px;color:rgb(39, 43, 64);text-align:center;letter-spacing:0.5px;">12.2</div>
<div style="position:absolute;left:1131px;top:347px;width:27px;height:10px;background:rgb(140, 157, 231);border-right:1px solid rgba(0,0,0,0.10);border-bottom:1px solid rgba(0,0,0,0.10);"></div>
<div style="position:absolute;left:1131px;top:346.90000000000003px;width:27.47px;height:11px;line-height:11px;white-space:nowrap;font-size:9px;color:rgb(39, 43, 64);text-align:center;letter-spacing:0.5px;">12.2</div>
<div style="position:absolute;left:1158px;top:347px;width:28px;height:10px;background:rgb(140, 157, 231);border-right:1px solid rgba(0,0,0,0.10);border-bottom:1px solid rgba(0,0,0,0.10);"></div>
<div style="position:absolute;left:1158px;top:346.90000000000003px;width:27.47px;height:11px;line-height:11px;white-space:nowrap;font-size:9px;color:rgb(39, 43, 64);text-align:center;letter-spacing:0.5px;">12.2</div>
<div style="position:absolute;left:856px;top:357px;width:27px;height:11px;background:rgb(143, 179, 216);border-right:1px solid rgba(0,0,0,0.10);border-bottom:1px solid rgba(0,0,0,0.10);"></div>
<div style="position:absolute;left:856px;top:357.3px;width:27.47px;height:11px;line-height:11px;white-space:nowrap;font-size:9px;color:rgb(40, 50, 60);text-align:center;letter-spacing:0.5px;">12.5</div>
<div style="position:absolute;left:883px;top:357px;width:28px;height:11px;background:rgb(143, 179, 216);border-right:1px solid rgba(0,0,0,0.10);border-bottom:1px solid rgba(0,0,0,0.10);"></div>
<div style="position:absolute;left:883px;top:357.3px;width:27.47px;height:11px;line-height:11px;white-space:nowrap;font-size:9px;color:rgb(40, 50, 60);text-align:center;letter-spacing:0.5px;">12.5</div>
<div style="position:absolute;left:911px;top:357px;width:27px;height:11px;background:rgb(143, 179, 216);border-right:1px solid rgba(0,0,0,0.10);border-bottom:1px solid rgba(0,0,0,0.10);"></div>
<div style="position:absolute;left:911px;top:357.3px;width:27.47px;height:11px;line-height:11px;white-space:nowrap;font-size:9px;color:rgb(40, 50, 60);text-align:center;letter-spacing:0.5px;">12.5</div>
<div style="position:absolute;left:938px;top:357px;width:28px;height:11px;background:rgb(143, 179, 216);border-right:1px solid rgba(0,0,0,0.10);border-bottom:1px solid rgba(0,0,0,0.10);"></div>
<div style="position:absolute;left:938px;top:357.3px;width:27.47px;height:11px;line-height:11px;white-space:nowrap;font-size:9px;color:rgb(40, 50, 60);text-align:center;letter-spacing:0.5px;">12.5</div>
<div style="position:absolute;left:966px;top:357px;width:27px;height:11px;background:rgb(143, 179, 216);border-right:1px solid rgba(0,0,0,0.10);border-bottom:1px solid rgba(0,0,0,0.10);"></div>
<div style="position:absolute;left:966px;top:357.3px;width:27.47px;height:11px;line-height:11px;white-space:nowrap;font-size:9px;color:rgb(40, 50, 60);text-align:center;letter-spacing:0.5px;">12.5</div>
<div style="position:absolute;left:993px;top:357px;width:28px;height:11px;background:rgb(143, 179, 216);border-right:1px solid rgba(0,0,0,0.10);border-bottom:1px solid rgba(0,0,0,0.10);"></div>
<div style="position:absolute;left:993px;top:357.3px;width:27.47px;height:11px;line-height:11px;white-space:nowrap;font-size:9px;color:rgb(40, 50, 60);text-align:center;letter-spacing:0.5px;">12.5</div>
<div style="position:absolute;left:1021px;top:357px;width:27px;height:11px;background:rgb(143, 179, 216);border-right:1px solid rgba(0,0,0,0.10);border-bottom:1px solid rgba(0,0,0,0.10);"></div>
<div style="position:absolute;left:1021px;top:357.3px;width:27.47px;height:11px;line-height:11px;white-space:nowrap;font-size:9px;color:rgb(40, 50, 60);text-align:center;letter-spacing:0.5px;">12.5</div>
<div style="position:absolute;left:1048px;top:357px;width:28px;height:11px;background:rgb(143, 179, 216);border-right:1px solid rgba(0,0,0,0.10);border-bottom:1px solid rgba(0,0,0,0.10);"></div>
<div style="position:absolute;left:1048px;top:357.3px;width:27.47px;height:11px;line-height:11px;white-space:nowrap;font-size:9px;color:rgb(40, 50, 60);text-align:center;letter-spacing:0.5px;">12.5</div>
<div style="position:absolute;left:1076px;top:357px;width:27px;height:11px;background:rgb(143, 179, 216);border-right:1px solid rgba(0,0,0,0.10);border-bottom:1px solid rgba(0,0,0,0.10);"></div>
<div style="position:absolute;left:1076px;top:357.3px;width:27.47px;height:11px;line-height:11px;white-space:nowrap;font-size:9px;color:rgb(40, 50, 60);text-align:center;letter-spacing:0.5px;">12.5</div>
<div style="position:absolute;left:1103px;top:357px;width:28px;height:11px;background:rgb(143, 179, 216);border-right:1px solid rgba(0,0,0,0.10);border-bottom:1px solid rgba(0,0,0,0.10);"></div>
<div style="position:absolute;left:1103px;top:357.3px;width:27.47px;height:11px;line-height:11px;white-space:nowrap;font-size:9px;color:rgb(40, 50, 60);text-align:center;letter-spacing:0.5px;">12.5</div>
<div style="position:absolute;left:1131px;top:357px;width:27px;height:11px;background:rgb(143, 179, 216);border-right:1px solid rgba(0,0,0,0.10);border-bottom:1px solid rgba(0,0,0,0.10);"></div>
<div style="position:absolute;left:1131px;top:357.3px;width:27.47px;height:11px;line-height:11px;white-space:nowrap;font-size:9px;color:rgb(40, 50, 60);text-align:center;letter-spacing:0.5px;">12.5</div>
<div style="position:absolute;left:1158px;top:357px;width:28px;height:11px;background:rgb(143, 179, 216);border-right:1px solid rgba(0,0,0,0.10);border-bottom:1px solid rgba(0,0,0,0.10);"></div>
<div style="position:absolute;left:1158px;top:357.3px;width:27.47px;height:11px;line-height:11px;white-space:nowrap;font-size:9px;color:rgb(40, 50, 60);text-align:center;letter-spacing:0.5px;">12.5</div>
<div style="position:absolute;left:856px;top:368px;width:27px;height:10px;background:rgb(144, 184, 213);border-right:1px solid rgba(0,0,0,0.10);border-bottom:1px solid rgba(0,0,0,0.10);"></div>
<div style="position:absolute;left:856px;top:367.70000000000005px;width:27.47px;height:11px;line-height:11px;white-space:nowrap;font-size:9px;color:rgb(40, 51, 59);text-align:center;letter-spacing:0.5px;">12.6</div>
<div style="position:absolute;left:883px;top:368px;width:28px;height:10px;background:rgb(144, 184, 213);border-right:1px solid rgba(0,0,0,0.10);border-bottom:1px solid rgba(0,0,0,0.10);"></div>
<div style="position:absolute;left:883px;top:367.70000000000005px;width:27.47px;height:11px;line-height:11px;white-space:nowrap;font-size:9px;color:rgb(40, 51, 59);text-align:center;letter-spacing:0.5px;">12.6</div>
<div style="position:absolute;left:911px;top:368px;width:27px;height:10px;background:rgb(144, 184, 213);border-right:1px solid rgba(0,0,0,0.10);border-bottom:1px solid rgba(0,0,0,0.10);"></div>
<div style="position:absolute;left:911px;top:367.70000000000005px;width:27.47px;height:11px;line-height:11px;white-space:nowrap;font-size:9px;color:rgb(40, 51, 59);text-align:center;letter-spacing:0.5px;">12.6</div>
<div style="position:absolute;left:938px;top:368px;width:28px;height:10px;background:rgb(144, 184, 213);border-right:1px solid rgba(0,0,0,0.10);border-bottom:1px solid rgba(0,0,0,0.10);"></div>
<div style="position:absolute;left:938px;top:367.70000000000005px;width:27.47px;height:11px;line-height:11px;white-space:nowrap;font-size:9px;color:rgb(40, 51, 59);text-align:center;letter-spacing:0.5px;">12.6</div>
<div style="position:absolute;left:966px;top:368px;width:27px;height:10px;background:rgb(144, 184, 213);border-right:1px solid rgba(0,0,0,0.10);border-bottom:1px solid rgba(0,0,0,0.10);"></div>
<div style="position:absolute;left:966px;top:367.70000000000005px;width:27.47px;height:11px;line-height:11px;white-space:nowrap;font-size:9px;color:rgb(40, 51, 59);text-align:center;letter-spacing:0.5px;">12.6</div>
<div style="position:absolute;left:993px;top:368px;width:28px;height:10px;background:rgb(144, 184, 213);border-right:1px solid rgba(0,0,0,0.10);border-bottom:1px solid rgba(0,0,0,0.10);"></div>
<div style="position:absolute;left:993px;top:367.70000000000005px;width:27.47px;height:11px;line-height:11px;white-space:nowrap;font-size:9px;color:rgb(40, 51, 59);text-align:center;letter-spacing:0.5px;">12.6</div>
<div style="position:absolute;left:1021px;top:368px;width:27px;height:10px;background:rgb(144, 184, 213);border-right:1px solid rgba(0,0,0,0.10);border-bottom:1px solid rgba(0,0,0,0.10);"></div>
<div style="position:absolute;left:1021px;top:367.70000000000005px;width:27.47px;height:11px;line-height:11px;white-space:nowrap;font-size:9px;color:rgb(40, 51, 59);text-align:center;letter-spacing:0.5px;">12.6</div>
<div style="position:absolute;left:1048px;top:368px;width:28px;height:10px;background:rgb(144, 184, 213);border-right:1px solid rgba(0,0,0,0.10);border-bottom:1px solid rgba(0,0,0,0.10);"></div>
<div style="position:absolute;left:1048px;top:367.70000000000005px;width:27.47px;height:11px;line-height:11px;white-space:nowrap;font-size:9px;color:rgb(40, 51, 59);text-align:center;letter-spacing:0.5px;">12.6</div>
<div style="position:absolute;left:1076px;top:368px;width:27px;height:10px;background:rgb(144, 184, 213);border-right:1px solid rgba(0,0,0,0.10);border-bottom:1px solid rgba(0,0,0,0.10);"></div>
<div style="position:absolute;left:1076px;top:367.70000000000005px;width:27.47px;height:11px;line-height:11px;white-space:nowrap;font-size:9px;color:rgb(40, 51, 59);text-align:center;letter-spacing:0.5px;">12.6</div>
<div style="position:absolute;left:1103px;top:368px;width:28px;height:10px;background:rgb(144, 184, 213);border-right:1px solid rgba(0,0,0,0.10);border-bottom:1px solid rgba(0,0,0,0.10);"></div>
<div style="position:absolute;left:1103px;top:367.70000000000005px;width:27.47px;height:11px;line-height:11px;white-space:nowrap;font-size:9px;color:rgb(40, 51, 59);text-align:center;letter-spacing:0.5px;">12.6</div>
<div style="position:absolute;left:1131px;top:368px;width:27px;height:10px;background:rgb(144, 184, 213);border-right:1px solid rgba(0,0,0,0.10);border-bottom:1px solid rgba(0,0,0,0.10);"></div>
<div style="position:absolute;left:1131px;top:367.70000000000005px;width:27.47px;height:11px;line-height:11px;white-space:nowrap;font-size:9px;color:rgb(40, 51, 59);text-align:center;letter-spacing:0.5px;">12.6</div>
<div style="position:absolute;left:1158px;top:368px;width:28px;height:10px;background:rgb(144, 184, 213);border-right:1px solid rgba(0,0,0,0.10);border-bottom:1px solid rgba(0,0,0,0.10);"></div>
<div style="position:absolute;left:1158px;top:367.70000000000005px;width:27.47px;height:11px;line-height:11px;white-space:nowrap;font-size:9px;color:rgb(40, 51, 59);text-align:center;letter-spacing:0.5px;">12.6</div>
<div style="position:absolute;left:856px;top:378px;width:27px;height:10px;background:rgb(128, 232, 128);border-right:1px solid rgba(0,0,0,0.10);border-bottom:1px solid rgba(0,0,0,0.10);"></div>
<div style="position:absolute;left:856px;top:378.1px;width:27.47px;height:11px;line-height:11px;white-space:nowrap;font-size:9px;color:rgb(35, 64, 35);text-align:center;letter-spacing:0.5px;">13.4</div>
<div style="position:absolute;left:883px;top:378px;width:28px;height:10px;background:rgb(128, 232, 128);border-right:1px solid rgba(0,0,0,0.10);border-bottom:1px solid rgba(0,0,0,0.10);"></div>
<div style="position:absolute;left:883px;top:378.1px;width:27.47px;height:11px;line-height:11px;white-space:nowrap;font-size:9px;color:rgb(35, 64, 35);text-align:center;letter-spacing:0.5px;">13.4</div>
<div style="position:absolute;left:911px;top:378px;width:27px;height:10px;background:rgb(128, 232, 128);border-right:1px solid rgba(0,0,0,0.10);border-bottom:1px solid rgba(0,0,0,0.10);"></div>
<div style="position:absolute;left:911px;top:378.1px;width:27.47px;height:11px;line-height:11px;white-space:nowrap;font-size:9px;color:rgb(35, 64, 35);text-align:center;letter-spacing:0.5px;">13.4</div>
<div style="position:absolute;left:938px;top:378px;width:28px;height:10px;background:rgb(128, 232, 128);border-right:1px solid rgba(0,0,0,0.10);border-bottom:1px solid rgba(0,0,0,0.10);"></div>
<div style="position:absolute;left:938px;top:378.1px;width:27.47px;height:11px;line-height:11px;white-space:nowrap;font-size:9px;color:rgb(35, 64, 35);text-align:center;letter-spacing:0.5px;">13.4</div>
<div style="position:absolute;left:966px;top:378px;width:27px;height:10px;background:rgb(128, 232, 128);border-right:1px solid rgba(0,0,0,0.10);border-bottom:1px solid rgba(0,0,0,0.10);"></div>
<div style="position:absolute;left:966px;top:378.1px;width:27.47px;height:11px;line-height:11px;white-space:nowrap;font-size:9px;color:rgb(35, 64, 35);text-align:center;letter-spacing:0.5px;">13.4</div>
<div style="position:absolute;left:993px;top:378px;width:28px;height:10px;background:rgb(128, 232, 128);border-right:1px solid rgba(0,0,0,0.10);border-bottom:1px solid rgba(0,0,0,0.10);"></div>
<div style="position:absolute;left:993px;top:378.1px;width:27.47px;height:11px;line-height:11px;white-space:nowrap;font-size:9px;color:rgb(35, 64, 35);text-align:center;letter-spacing:0.5px;">13.4</div>
<div style="position:absolute;left:1021px;top:378px;width:27px;height:10px;background:rgb(128, 232, 128);border-right:1px solid rgba(0,0,0,0.10);border-bottom:1px solid rgba(0,0,0,0.10);"></div>
<div style="position:absolute;left:1021px;top:378.1px;width:27.47px;height:11px;line-height:11px;white-space:nowrap;font-size:9px;color:rgb(35, 64, 35);text-align:center;letter-spacing:0.5px;">13.4</div>
<div style="position:absolute;left:1048px;top:378px;width:28px;height:10px;background:rgb(128, 232, 128);border-right:1px solid rgba(0,0,0,0.10);border-bottom:1px solid rgba(0,0,0,0.10);"></div>
<div style="position:absolute;left:1048px;top:378.1px;width:27.47px;height:11px;line-height:11px;white-space:nowrap;font-size:9px;color:rgb(35, 64, 35);text-align:center;letter-spacing:0.5px;">13.4</div>
<div style="position:absolute;left:1076px;top:378px;width:27px;height:10px;background:rgb(128, 232, 128);border-right:1px solid rgba(0,0,0,0.10);border-bottom:1px solid rgba(0,0,0,0.10);"></div>
<div style="position:absolute;left:1076px;top:378.1px;width:27.47px;height:11px;line-height:11px;white-space:nowrap;font-size:9px;color:rgb(35, 64, 35);text-align:center;letter-spacing:0.5px;">13.4</div>
<div style="position:absolute;left:1103px;top:378px;width:28px;height:10px;background:rgb(128, 232, 128);border-right:1px solid rgba(0,0,0,0.10);border-bottom:1px solid rgba(0,0,0,0.10);"></div>
<div style="position:absolute;left:1103px;top:378.1px;width:27.47px;height:11px;line-height:11px;white-space:nowrap;font-size:9px;color:rgb(35, 64, 35);text-align:center;letter-spacing:0.5px;">13.4</div>
<div style="position:absolute;left:1131px;top:378px;width:27px;height:10px;background:rgb(128, 232, 128);border-right:1px solid rgba(0,0,0,0.10);border-bottom:1px solid rgba(0,0,0,0.10);"></div>
<div style="position:absolute;left:1131px;top:378.1px;width:27.47px;height:11px;line-height:11px;white-space:nowrap;font-size:9px;color:rgb(35, 64, 35);text-align:center;letter-spacing:0.5px;">13.4</div>
<div style="position:absolute;left:1158px;top:378px;width:28px;height:10px;background:rgb(128, 232, 128);border-right:1px solid rgba(0,0,0,0.10);border-bottom:1px solid rgba(0,0,0,0.10);"></div>
<div style="position:absolute;left:1158px;top:378.1px;width:27.47px;height:11px;line-height:11px;white-space:nowrap;font-size:9px;color:rgb(35, 64, 35);text-align:center;letter-spacing:0.5px;">13.4</div>
<div style="position:absolute;left:856px;top:388px;width:27px;height:11px;background:rgb(203, 194, 143);border-right:1px solid rgba(0,0,0,0.10);border-bottom:1px solid rgba(0,0,0,0.10);"></div>
<div style="position:absolute;left:856px;top:388.5px;width:27.47px;height:11px;line-height:11px;white-space:nowrap;font-size:9px;color:rgb(56, 54, 40);text-align:center;letter-spacing:0.5px;">14.2</div>
<div style="position:absolute;left:883px;top:388px;width:28px;height:11px;background:rgb(203, 194, 143);border-right:1px solid rgba(0,0,0,0.10);border-bottom:1px solid rgba(0,0,0,0.10);"></div>
<div style="position:absolute;left:883px;top:388.5px;width:27.47px;height:11px;line-height:11px;white-space:nowrap;font-size:9px;color:rgb(56, 54, 40);text-align:center;letter-spacing:0.5px;">14.2</div>
<div style="position:absolute;left:911px;top:388px;width:27px;height:11px;background:rgb(203, 194, 143);border-right:1px solid rgba(0,0,0,0.10);border-bottom:1px solid rgba(0,0,0,0.10);"></div>
<div style="position:absolute;left:911px;top:388.5px;width:27.47px;height:11px;line-height:11px;white-space:nowrap;font-size:9px;color:rgb(56, 54, 40);text-align:center;letter-spacing:0.5px;">14.2</div>
<div style="position:absolute;left:938px;top:388px;width:28px;height:11px;background:rgb(203, 194, 143);border-right:1px solid rgba(0,0,0,0.10);border-bottom:1px solid rgba(0,0,0,0.10);"></div>
<div style="position:absolute;left:938px;top:388.5px;width:27.47px;height:11px;line-height:11px;white-space:nowrap;font-size:9px;color:rgb(56, 54, 40);text-align:center;letter-spacing:0.5px;">14.2</div>
<div style="position:absolute;left:966px;top:388px;width:27px;height:11px;background:rgb(203, 194, 143);border-right:1px solid rgba(0,0,0,0.10);border-bottom:1px solid rgba(0,0,0,0.10);"></div>
<div style="position:absolute;left:966px;top:388.5px;width:27.47px;height:11px;line-height:11px;white-space:nowrap;font-size:9px;color:rgb(56, 54, 40);text-align:center;letter-spacing:0.5px;">14.2</div>
<div style="position:absolute;left:993px;top:388px;width:28px;height:11px;background:rgb(203, 194, 143);border-right:1px solid rgba(0,0,0,0.10);border-bottom:1px solid rgba(0,0,0,0.10);"></div>
<div style="position:absolute;left:993px;top:388.5px;width:27.47px;height:11px;line-height:11px;white-space:nowrap;font-size:9px;color:rgb(56, 54, 40);text-align:center;letter-spacing:0.5px;">14.2</div>
<div style="position:absolute;left:1021px;top:388px;width:27px;height:11px;background:rgb(203, 194, 143);border-right:1px solid rgba(0,0,0,0.10);border-bottom:1px solid rgba(0,0,0,0.10);"></div>
<div style="position:absolute;left:1021px;top:388.5px;width:27.47px;height:11px;line-height:11px;white-space:nowrap;font-size:9px;color:rgb(56, 54, 40);text-align:center;letter-spacing:0.5px;">14.2</div>
<div style="position:absolute;left:1048px;top:388px;width:28px;height:11px;background:rgb(203, 194, 143);border-right:1px solid rgba(0,0,0,0.10);border-bottom:1px solid rgba(0,0,0,0.10);"></div>
<div style="position:absolute;left:1048px;top:388.5px;width:27.47px;height:11px;line-height:11px;white-space:nowrap;font-size:9px;color:rgb(56, 54, 40);text-align:center;letter-spacing:0.5px;">14.2</div>
<div style="position:absolute;left:1076px;top:388px;width:27px;height:11px;background:rgb(203, 194, 143);border-right:1px solid rgba(0,0,0,0.10);border-bottom:1px solid rgba(0,0,0,0.10);"></div>
<div style="position:absolute;left:1076px;top:388.5px;width:27.47px;height:11px;line-height:11px;white-space:nowrap;font-size:9px;color:rgb(56, 54, 40);text-align:center;letter-spacing:0.5px;">14.2</div>
<div style="position:absolute;left:1103px;top:388px;width:28px;height:11px;background:rgb(203, 194, 143);border-right:1px solid rgba(0,0,0,0.10);border-bottom:1px solid rgba(0,0,0,0.10);"></div>
<div style="position:absolute;left:1103px;top:388.5px;width:27.47px;height:11px;line-height:11px;white-space:nowrap;font-size:9px;color:rgb(56, 54, 40);text-align:center;letter-spacing:0.5px;">14.2</div>
<div style="position:absolute;left:1131px;top:388px;width:27px;height:11px;background:rgb(203, 194, 143);border-right:1px solid rgba(0,0,0,0.10);border-bottom:1px solid rgba(0,0,0,0.10);"></div>
<div style="position:absolute;left:1131px;top:388.5px;width:27.47px;height:11px;line-height:11px;white-space:nowrap;font-size:9px;color:rgb(56, 54, 40);text-align:center;letter-spacing:0.5px;">14.2</div>
<div style="position:absolute;left:1158px;top:388px;width:28px;height:11px;background:rgb(203, 194, 143);border-right:1px solid rgba(0,0,0,0.10);border-bottom:1px solid rgba(0,0,0,0.10);"></div>
<div style="position:absolute;left:1158px;top:388.5px;width:27.47px;height:11px;line-height:11px;white-space:nowrap;font-size:9px;color:rgb(56, 54, 40);text-align:center;letter-spacing:0.5px;">14.2</div>
<div style="position:absolute;left:856px;top:399px;width:27px;height:10px;background:rgb(185, 212, 140);border-right:1px solid rgba(0,0,0,0.10);border-bottom:1px solid rgba(0,0,0,0.10);"></div>
<div style="position:absolute;left:856px;top:398.90000000000003px;width:27.47px;height:11px;line-height:11px;white-space:nowrap;font-size:9px;color:rgb(51, 59, 39);text-align:center;letter-spacing:0.5px;">14.0</div>
<div style="position:absolute;left:883px;top:399px;width:28px;height:10px;background:rgb(185, 212, 140);border-right:1px solid rgba(0,0,0,0.10);border-bottom:1px solid rgba(0,0,0,0.10);"></div>
<div style="position:absolute;left:883px;top:398.90000000000003px;width:27.47px;height:11px;line-height:11px;white-space:nowrap;font-size:9px;color:rgb(51, 59, 39);text-align:center;letter-spacing:0.5px;">14.0</div>
<div style="position:absolute;left:911px;top:399px;width:27px;height:10px;background:rgb(185, 212, 140);border-right:1px solid rgba(0,0,0,0.10);border-bottom:1px solid rgba(0,0,0,0.10);"></div>
<div style="position:absolute;left:911px;top:398.90000000000003px;width:27.47px;height:11px;line-height:11px;white-space:nowrap;font-size:9px;color:rgb(51, 59, 39);text-align:center;letter-spacing:0.5px;">14.0</div>
<div style="position:absolute;left:938px;top:399px;width:28px;height:10px;background:rgb(231, 158, 144);border-right:1px solid rgba(0,0,0,0.10);border-bottom:1px solid rgba(0,0,0,0.10);"></div>
<div style="position:absolute;left:938px;top:398.90000000000003px;width:27.47px;height:11px;line-height:11px;white-space:nowrap;font-size:9px;color:rgb(64, 44, 40);text-align:center;letter-spacing:0.5px;">14.7</div>
<div style="position:absolute;left:966px;top:399px;width:27px;height:10px;background:rgb(229, 161, 144);border-right:1px solid rgba(0,0,0,0.10);border-bottom:1px solid rgba(0,0,0,0.10);"></div>
<div style="position:absolute;left:966px;top:398.90000000000003px;width:27.47px;height:11px;line-height:11px;white-space:nowrap;font-size:9px;color:rgb(64, 45, 40);text-align:center;letter-spacing:0.5px;">14.6</div>
<div style="position:absolute;left:993px;top:399px;width:28px;height:10px;background:rgb(226, 165, 144);border-right:1px solid rgba(0,0,0,0.10);border-bottom:1px solid rgba(0,0,0,0.10);"></div>
<div style="position:absolute;left:993px;top:398.90000000000003px;width:27.47px;height:11px;line-height:11px;white-space:nowrap;font-size:9px;color:rgb(63, 46, 40);text-align:center;letter-spacing:0.5px;">14.5</div>
<div style="position:absolute;left:1021px;top:399px;width:27px;height:10px;background:rgb(226, 165, 144);border-right:1px solid rgba(0,0,0,0.10);border-bottom:1px solid rgba(0,0,0,0.10);"></div>
<div style="position:absolute;left:1021px;top:398.90000000000003px;width:27.47px;height:11px;line-height:11px;white-space:nowrap;font-size:9px;color:rgb(63, 46, 40);text-align:center;letter-spacing:0.5px;">14.5</div>
<div style="position:absolute;left:1048px;top:399px;width:28px;height:10px;background:rgb(226, 165, 144);border-right:1px solid rgba(0,0,0,0.10);border-bottom:1px solid rgba(0,0,0,0.10);"></div>
<div style="position:absolute;left:1048px;top:398.90000000000003px;width:27.47px;height:11px;line-height:11px;white-space:nowrap;font-size:9px;color:rgb(63, 46, 40);text-align:center;letter-spacing:0.5px;">14.5</div>
<div style="position:absolute;left:1076px;top:399px;width:27px;height:10px;background:rgb(226, 165, 144);border-right:1px solid rgba(0,0,0,0.10);border-bottom:1px solid rgba(0,0,0,0.10);"></div>
<div style="position:absolute;left:1076px;top:398.90000000000003px;width:27.47px;height:11px;line-height:11px;white-space:nowrap;font-size:9px;color:rgb(63, 46, 40);text-align:center;letter-spacing:0.5px;">14.5</div>
<div style="position:absolute;left:1103px;top:399px;width:28px;height:10px;background:rgb(185, 212, 140);border-right:1px solid rgba(0,0,0,0.10);border-bottom:1px solid rgba(0,0,0,0.10);"></div>
<div style="position:absolute;left:1103px;top:398.90000000000003px;width:27.47px;height:11px;line-height:11px;white-space:nowrap;font-size:9px;color:rgb(51, 59, 39);text-align:center;letter-spacing:0.5px;">14.0</div>
<div style="position:absolute;left:1131px;top:399px;width:27px;height:10px;background:rgb(185, 212, 140);border-right:1px solid rgba(0,0,0,0.10);border-bottom:1px solid rgba(0,0,0,0.10);"></div>
<div style="position:absolute;left:1131px;top:398.90000000000003px;width:27.47px;height:11px;line-height:11px;white-space:nowrap;font-size:9px;color:rgb(51, 59, 39);text-align:center;letter-spacing:0.5px;">14.0</div>
<div style="position:absolute;left:1158px;top:399px;width:28px;height:10px;background:rgb(185, 212, 140);border-right:1px solid rgba(0,0,0,0.10);border-bottom:1px solid rgba(0,0,0,0.10);"></div>
<div style="position:absolute;left:1158px;top:398.90000000000003px;width:27.47px;height:11px;line-height:11px;white-space:nowrap;font-size:9px;color:rgb(51, 59, 39);text-align:center;letter-spacing:0.5px;">14.0</div>
<div style="position:absolute;left:856px;top:409px;width:27px;height:11px;background:rgb(231, 158, 144);border-right:1px solid rgba(0,0,0,0.10);border-bottom:1px solid rgba(0,0,0,0.10);"></div>
<div style="position:absolute;left:856px;top:409.3px;width:27.47px;height:11px;line-height:11px;white-space:nowrap;font-size:9px;color:rgb(64, 44, 40);text-align:center;letter-spacing:0.5px;">14.7</div>
<div style="position:absolute;left:883px;top:409px;width:28px;height:11px;background:rgb(231, 158, 144);border-right:1px solid rgba(0,0,0,0.10);border-bottom:1px solid rgba(0,0,0,0.10);"></div>
<div style="position:absolute;left:883px;top:409.3px;width:27.47px;height:11px;line-height:11px;white-space:nowrap;font-size:9px;color:rgb(64, 44, 40);text-align:center;letter-spacing:0.5px;">14.7</div>
<div style="position:absolute;left:911px;top:409px;width:27px;height:11px;background:rgb(231, 158, 144);border-right:1px solid rgba(0,0,0,0.10);border-bottom:1px solid rgba(0,0,0,0.10);"></div>
<div style="position:absolute;left:911px;top:409.3px;width:27.47px;height:11px;line-height:11px;white-space:nowrap;font-size:9px;color:rgb(64, 44, 40);text-align:center;letter-spacing:0.5px;">14.7</div>
<div style="position:absolute;left:938px;top:409px;width:28px;height:11px;background:rgb(231, 158, 144);border-right:1px solid rgba(0,0,0,0.10);border-bottom:1px solid rgba(0,0,0,0.10);"></div>
<div style="position:absolute;left:938px;top:409.3px;width:27.47px;height:11px;line-height:11px;white-space:nowrap;font-size:9px;color:rgb(64, 44, 40);text-align:center;letter-spacing:0.5px;">14.7</div>
<div style="position:absolute;left:966px;top:409px;width:27px;height:11px;background:rgb(231, 158, 144);border-right:1px solid rgba(0,0,0,0.10);border-bottom:1px solid rgba(0,0,0,0.10);"></div>
<div style="position:absolute;left:966px;top:409.3px;width:27.47px;height:11px;line-height:11px;white-space:nowrap;font-size:9px;color:rgb(64, 44, 40);text-align:center;letter-spacing:0.5px;">14.7</div>
<div style="position:absolute;left:993px;top:409px;width:28px;height:11px;background:rgb(231, 158, 144);border-right:1px solid rgba(0,0,0,0.10);border-bottom:1px solid rgba(0,0,0,0.10);"></div>
<div style="position:absolute;left:993px;top:409.3px;width:27.47px;height:11px;line-height:11px;white-space:nowrap;font-size:9px;color:rgb(64, 44, 40);text-align:center;letter-spacing:0.5px;">14.7</div>
<div style="position:absolute;left:1021px;top:409px;width:27px;height:11px;background:rgb(231, 158, 144);border-right:1px solid rgba(0,0,0,0.10);border-bottom:1px solid rgba(0,0,0,0.10);"></div>
<div style="position:absolute;left:1021px;top:409.3px;width:27.47px;height:11px;line-height:11px;white-space:nowrap;font-size:9px;color:rgb(64, 44, 40);text-align:center;letter-spacing:0.5px;">14.7</div>
<div style="position:absolute;left:1048px;top:409px;width:28px;height:11px;background:rgb(240, 136, 150);border-right:1px solid rgba(0,0,0,0.10);border-bottom:1px solid rgba(0,0,0,0.10);"></div>
<div style="position:absolute;left:1048px;top:409.3px;width:27.47px;height:11px;line-height:11px;white-space:nowrap;font-size:9px;color:rgb(67, 38, 42);text-align:center;letter-spacing:0.5px;">15.0</div>
<div style="position:absolute;left:1076px;top:409px;width:27px;height:11px;background:rgb(240, 136, 150);border-right:1px solid rgba(0,0,0,0.10);border-bottom:1px solid rgba(0,0,0,0.10);"></div>
<div style="position:absolute;left:1076px;top:409.3px;width:27.47px;height:11px;line-height:11px;white-space:nowrap;font-size:9px;color:rgb(67, 38, 42);text-align:center;letter-spacing:0.5px;">15.0</div>
<div style="position:absolute;left:1103px;top:409px;width:28px;height:11px;background:rgb(180, 216, 143);border-right:1px solid rgba(0,0,0,0.10);border-bottom:1px solid rgba(0,0,0,0.10);"></div>
<div style="position:absolute;left:1103px;top:409.3px;width:27.47px;height:11px;line-height:11px;white-space:nowrap;font-size:9px;color:rgb(50, 60, 40);text-align:center;letter-spacing:0.5px;">13.9</div>
<div style="position:absolute;left:1131px;top:409px;width:27px;height:11px;background:rgb(174, 220, 147);border-right:1px solid rgba(0,0,0,0.10);border-bottom:1px solid rgba(0,0,0,0.10);"></div>
<div style="position:absolute;left:1131px;top:409.3px;width:27.47px;height:11px;line-height:11px;white-space:nowrap;font-size:9px;color:rgb(48, 61, 41);text-align:center;letter-spacing:0.5px;">13.8</div>
<div style="position:absolute;left:1158px;top:409px;width:28px;height:11px;background:rgb(167, 224, 148);border-right:1px solid rgba(0,0,0,0.10);border-bottom:1px solid rgba(0,0,0,0.10);"></div>
<div style="position:absolute;left:1158px;top:409.3px;width:27.47px;height:11px;line-height:11px;white-space:nowrap;font-size:9px;color:rgb(46, 62, 41);text-align:center;letter-spacing:0.5px;">13.7</div>
<div style="position:absolute;left:856px;top:420px;width:27px;height:10px;background:rgb(231, 158, 144);border-right:1px solid rgba(0,0,0,0.10);border-bottom:1px solid rgba(0,0,0,0.10);"></div>
<div style="position:absolute;left:856px;top:419.70000000000005px;width:27.47px;height:11px;line-height:11px;white-space:nowrap;font-size:9px;color:rgb(64, 44, 40);text-align:center;letter-spacing:0.5px;">14.7</div>
<div style="position:absolute;left:883px;top:420px;width:28px;height:10px;background:rgb(231, 158, 144);border-right:1px solid rgba(0,0,0,0.10);border-bottom:1px solid rgba(0,0,0,0.10);"></div>
<div style="position:absolute;left:883px;top:419.70000000000005px;width:27.47px;height:11px;line-height:11px;white-space:nowrap;font-size:9px;color:rgb(64, 44, 40);text-align:center;letter-spacing:0.5px;">14.7</div>
<div style="position:absolute;left:911px;top:420px;width:27px;height:10px;background:rgb(231, 158, 144);border-right:1px solid rgba(0,0,0,0.10);border-bottom:1px solid rgba(0,0,0,0.10);"></div>
<div style="position:absolute;left:911px;top:419.70000000000005px;width:27.47px;height:11px;line-height:11px;white-space:nowrap;font-size:9px;color:rgb(64, 44, 40);text-align:center;letter-spacing:0.5px;">14.7</div>
<div style="position:absolute;left:938px;top:420px;width:28px;height:10px;background:rgb(231, 158, 144);border-right:1px solid rgba(0,0,0,0.10);border-bottom:1px solid rgba(0,0,0,0.10);"></div>
<div style="position:absolute;left:938px;top:419.70000000000005px;width:27.47px;height:11px;line-height:11px;white-space:nowrap;font-size:9px;color:rgb(64, 44, 40);text-align:center;letter-spacing:0.5px;">14.7</div>
<div style="position:absolute;left:966px;top:420px;width:27px;height:10px;background:rgb(231, 158, 144);border-right:1px solid rgba(0,0,0,0.10);border-bottom:1px solid rgba(0,0,0,0.10);"></div>
<div style="position:absolute;left:966px;top:419.70000000000005px;width:27.47px;height:11px;line-height:11px;white-space:nowrap;font-size:9px;color:rgb(64, 44, 40);text-align:center;letter-spacing:0.5px;">14.7</div>
<div style="position:absolute;left:993px;top:420px;width:28px;height:10px;background:rgb(231, 158, 144);border-right:1px solid rgba(0,0,0,0.10);border-bottom:1px solid rgba(0,0,0,0.10);"></div>
<div style="position:absolute;left:993px;top:419.70000000000005px;width:27.47px;height:11px;line-height:11px;white-space:nowrap;font-size:9px;color:rgb(64, 44, 40);text-align:center;letter-spacing:0.5px;">14.7</div>
<div style="position:absolute;left:1021px;top:420px;width:27px;height:10px;background:rgb(231, 158, 144);border-right:1px solid rgba(0,0,0,0.10);border-bottom:1px solid rgba(0,0,0,0.10);"></div>
<div style="position:absolute;left:1021px;top:419.70000000000005px;width:27.47px;height:11px;line-height:11px;white-space:nowrap;font-size:9px;color:rgb(64, 44, 40);text-align:center;letter-spacing:0.5px;">14.7</div>
<div style="position:absolute;left:1048px;top:420px;width:28px;height:10px;background:rgb(240, 136, 150);border-right:1px solid rgba(0,0,0,0.10);border-bottom:1px solid rgba(0,0,0,0.10);"></div>
<div style="position:absolute;left:1048px;top:419.70000000000005px;width:27.47px;height:11px;line-height:11px;white-space:nowrap;font-size:9px;color:rgb(67, 38, 42);text-align:center;letter-spacing:0.5px;">15.0</div>
<div style="position:absolute;left:1076px;top:420px;width:27px;height:10px;background:rgb(240, 136, 150);border-right:1px solid rgba(0,0,0,0.10);border-bottom:1px solid rgba(0,0,0,0.10);"></div>
<div style="position:absolute;left:1076px;top:419.70000000000005px;width:27.47px;height:11px;line-height:11px;white-space:nowrap;font-size:9px;color:rgb(67, 38, 42);text-align:center;letter-spacing:0.5px;">15.0</div>
<div style="position:absolute;left:1103px;top:420px;width:28px;height:10px;background:rgb(203, 194, 143);border-right:1px solid rgba(0,0,0,0.10);border-bottom:1px solid rgba(0,0,0,0.10);"></div>
<div style="position:absolute;left:1103px;top:419.70000000000005px;width:27.47px;height:11px;line-height:11px;white-space:nowrap;font-size:9px;color:rgb(56, 54, 40);text-align:center;letter-spacing:0.5px;">14.2</div>
<div style="position:absolute;left:1131px;top:420px;width:27px;height:10px;background:rgb(194, 203, 141);border-right:1px solid rgba(0,0,0,0.10);border-bottom:1px solid rgba(0,0,0,0.10);"></div>
<div style="position:absolute;left:1131px;top:419.70000000000005px;width:27.47px;height:11px;line-height:11px;white-space:nowrap;font-size:9px;color:rgb(54, 56, 39);text-align:center;letter-spacing:0.5px;">14.1</div>
<div style="position:absolute;left:1158px;top:420px;width:28px;height:10px;background:rgb(185, 212, 140);border-right:1px solid rgba(0,0,0,0.10);border-bottom:1px solid rgba(0,0,0,0.10);"></div>
<div style="position:absolute;left:1158px;top:419.70000000000005px;width:27.47px;height:11px;line-height:11px;white-space:nowrap;font-size:9px;color:rgb(51, 59, 39);text-align:center;letter-spacing:0.5px;">14.0</div>
<div style="position:absolute;left:830px;top:431.1px;width:25.5px;height:16.5px;background:#fafafa;border:1px solid #c8c8c8;border-radius:3px;"></div>
<svg style="position:absolute;left:830px;top:431.1px" width="26" height="17"><polyline points="8,3 8,12 19,12" fill="none" stroke="#555" stroke-width="2"/><polyline points="6,5 8,2.5 10,5" fill="none" stroke="#555" stroke-width="1.5"/><polyline points="17,10 19.5,12 17,14" fill="none" stroke="#555" stroke-width="1.5"/></svg>
<div style="position:absolute;left:856.0px;top:430.1px;width:27.47px;height:18px;background:#c8c8c8;border-right:2px solid #f0f0f0;border-top:1px solid #e8e8e8;"></div>
<div style="position:absolute;left:856.0px;top:431.1px;width:26.47px;height:17px;line-height:17px;white-space:nowrap;font-size:9.5px;color:#333;text-align:center;letter-spacing:0.3px;">500</div>
<div style="position:absolute;left:883.47px;top:430.1px;width:27.47px;height:18px;background:#c8c8c8;border-right:2px solid #f0f0f0;border-top:1px solid #e8e8e8;"></div>
<div style="position:absolute;left:883.47px;top:431.1px;width:26.47px;height:17px;line-height:17px;white-space:nowrap;font-size:9.5px;color:#333;text-align:center;letter-spacing:0.3px;">800</div>
<div style="position:absolute;left:910.94px;top:430.1px;width:27.47px;height:18px;background:#c8c8c8;border-right:2px solid #f0f0f0;border-top:1px solid #e8e8e8;"></div>
<div style="position:absolute;left:910.94px;top:431.1px;width:26.47px;height:17px;line-height:17px;white-space:nowrap;font-size:9.5px;color:#333;text-align:center;letter-spacing:0.3px;">1100</div>
<div style="position:absolute;left:938.41px;top:430.1px;width:27.47px;height:18px;background:#c8c8c8;border-right:2px solid #f0f0f0;border-top:1px solid #e8e8e8;"></div>
<div style="position:absolute;left:938.41px;top:431.1px;width:26.47px;height:17px;line-height:17px;white-space:nowrap;font-size:9.5px;color:#333;text-align:center;letter-spacing:0.3px;">1400</div>
<div style="position:absolute;left:965.88px;top:430.1px;width:27.47px;height:18px;background:#c8c8c8;border-right:2px solid #f0f0f0;border-top:1px solid #e8e8e8;"></div>
<div style="position:absolute;left:965.88px;top:431.1px;width:26.47px;height:17px;line-height:17px;white-space:nowrap;font-size:9.5px;color:#333;text-align:center;letter-spacing:0.3px;">2000</div>
<div style="position:absolute;left:993.35px;top:430.1px;width:27.47px;height:18px;background:#c8c8c8;border-right:2px solid #f0f0f0;border-top:1px solid #e8e8e8;"></div>
<div style="position:absolute;left:993.35px;top:431.1px;width:26.47px;height:17px;line-height:17px;white-space:nowrap;font-size:9.5px;color:#333;text-align:center;letter-spacing:0.3px;">2600</div>
<div style="position:absolute;left:1020.8199999999999px;top:430.1px;width:27.47px;height:18px;background:#c8c8c8;border-right:2px solid #f0f0f0;border-top:1px solid #e8e8e8;"></div>
<div style="position:absolute;left:1020.8199999999999px;top:431.1px;width:26.47px;height:17px;line-height:17px;white-space:nowrap;font-size:9.5px;color:#333;text-align:center;letter-spacing:0.3px;">3100</div>
<div style="position:absolute;left:1048.29px;top:430.1px;width:27.47px;height:18px;background:#c8c8c8;border-right:2px solid #f0f0f0;border-top:1px solid #e8e8e8;"></div>
<div style="position:absolute;left:1048.29px;top:431.1px;width:26.47px;height:17px;line-height:17px;white-space:nowrap;font-size:9.5px;color:#333;text-align:center;letter-spacing:0.3px;">3700</div>
<div style="position:absolute;left:1075.76px;top:430.1px;width:27.47px;height:18px;background:#c8c8c8;border-right:2px solid #f0f0f0;border-top:1px solid #e8e8e8;"></div>
<div style="position:absolute;left:1075.76px;top:431.1px;width:26.47px;height:17px;line-height:17px;white-space:nowrap;font-size:9.5px;color:#333;text-align:center;letter-spacing:0.3px;">4300</div>
<div style="position:absolute;left:1103.23px;top:430.1px;width:27.47px;height:18px;background:#c8c8c8;border-right:2px solid #f0f0f0;border-top:1px solid #e8e8e8;"></div>
<div style="position:absolute;left:1103.23px;top:431.1px;width:26.47px;height:17px;line-height:17px;white-space:nowrap;font-size:9.5px;color:#333;text-align:center;letter-spacing:0.3px;">4900</div>
<div style="position:absolute;left:1130.7px;top:430.1px;width:27.47px;height:18px;background:#c8c8c8;border-right:2px solid #f0f0f0;border-top:1px solid #e8e8e8;"></div>
<div style="position:absolute;left:1130.7px;top:431.1px;width:26.47px;height:17px;line-height:17px;white-space:nowrap;font-size:9.5px;color:#333;text-align:center;letter-spacing:0.3px;">5400</div>
<div style="position:absolute;left:1158.17px;top:430.1px;width:27.47px;height:18px;background:#c8c8c8;border-right:2px solid #f0f0f0;border-top:1px solid #e8e8e8;"></div>
<div style="position:absolute;left:1158.17px;top:431.1px;width:26.47px;height:17px;line-height:17px;white-space:nowrap;font-size:9.5px;color:#333;text-align:center;letter-spacing:0.3px;">6000</div>
<div style="position:absolute;left:832px;top:239.5px;width:114px;height:17.5px;border:1px solid #9a9a9a;border-radius:3px;background:linear-gradient(#f6f6f6,#e8e8e8 50%,#d8d8d8 51%,#e0e0e0);"></div>
<div style="position:absolute;left:832px;top:239.5px;width:114px;height:17.5px;line-height:17.5px;white-space:nowrap;font-size:11.5px;color:#222;text-align:center;"><span style="display:inline-block;transform:scaleX(0.88);">Open Tune File</span></div>
<div style="position:absolute;left:950px;top:239.5px;width:114px;height:17.5px;border:1px solid #9a9a9a;border-radius:3px;background:linear-gradient(#f6f6f6,#e8e8e8 50%,#d8d8d8 51%,#e0e0e0);"></div>
<div style="position:absolute;left:950px;top:239.5px;width:114px;height:17.5px;line-height:17.5px;white-space:nowrap;font-size:11.5px;color:#555;text-align:center;"><span style="display:inline-block;transform:scaleX(0.88);">Save Tune</span></div>
<div style="position:absolute;left:832px;top:259.5px;width:114px;height:17.5px;border:1px solid #9a9a9a;border-radius:3px;background:linear-gradient(#f6f6f6,#e8e8e8 50%,#d8d8d8 51%,#e0e0e0);"></div>
<div style="position:absolute;left:832px;top:259.5px;width:114px;height:17.5px;line-height:17.5px;white-space:nowrap;font-size:11.5px;color:#222;text-align:center;"><span style="display:inline-block;transform:scaleX(0.88);">VE Analyzer</span></div>
<div style="position:absolute;left:950px;top:259.5px;width:114px;height:17.5px;border:1px solid #9a9a9a;border-radius:3px;background:linear-gradient(#f6f6f6,#e8e8e8 50%,#d8d8d8 51%,#e0e0e0);"></div>
<div style="position:absolute;left:950px;top:259.5px;width:114px;height:17.5px;line-height:17.5px;white-space:nowrap;font-size:11.5px;color:#555;text-align:center;"><span style="display:inline-block;transform:scaleX(0.88);">Save Tune As</span></div>
<div style="position:absolute;left:1067px;top:238px;width:117px;height:1px;background:#a0a0a0;"></div>
<div style="position:absolute;left:1067px;top:258px;width:117px;height:1px;background:#a0a0a0;"></div>
<div style="position:absolute;left:1067px;top:238px;width:1px;height:42px;background:#b8b8b8;"></div>
<div style="position:absolute;left:1068px;top:239px;width:116px;height:19px;background:#f8f8f8;"></div>
<div style="position:absolute;left:1082.6px;top:240.2px;height:15px;line-height:15px;white-space:nowrap;transform:scaleX(0.9797);transform-origin:left;font-size:12px;font-weight:bold;color:#222;">advanceTable1</div>
<div style="position:absolute;left:1099.0px;top:260.5px;height:15px;line-height:15px;white-space:nowrap;transform:scaleX(0.9714);transform-origin:left;font-size:12px;font-weight:bold;color:#222;">afrTable1</div>
<div style="position:absolute;left:0px;top:451px;width:1196px;height:187px;background:#ecebe2;"></div>
<div style="position:absolute;left:9px;top:453px;width:0;height:0;border-left:4px solid transparent;border-right:4px solid transparent;border-top:4px solid #000;"></div>
<div style="position:absolute;left:19px;top:452px;width:0;height:0;border-left:4px solid transparent;border-right:4px solid transparent;border-bottom:4px solid #000;"></div>
<div style="position:absolute;left:1.8px;top:463.3px;height:14px;line-height:14px;white-space:nowrap;transform:scaleX(0.8736);transform-origin:left;font-size:11px;font-weight:normal;color:#222;">Record 1752 of 8213 - Zoom: 10.0x - Play speed: 100.0%</div>
<div class="ind" style="left:864px;width:38.5px;background:#62ee62;border:1px solid #c8d8c8;color:#1a3a1a;"><span style="display:inline-block;transform:scaleX(0.82);">Crank:N</span></div>
<div class="ind" style="left:904.5px;width:38.5px;background:#62ee62;border:1px solid #c8d8c8;color:#1a3a1a;"><span style="display:inline-block;transform:scaleX(0.82);">ASE:N</span></div>
<div class="ind" style="left:945px;width:38.5px;background:#ee5c5c;border:1px solid #c8d8c8;color:#5a1a1a;"><span style="display:inline-block;transform:scaleX(0.82);">Warm:Y</span></div>
<div class="ind" style="left:985.5px;width:38.5px;background:#ee5c5c;border:1px solid #c8d8c8;color:#5a1a1a;"><span style="display:inline-block;transform:scaleX(0.82);">Run:Y</span></div>
<div class="ind" style="left:1026px;width:38.5px;background:#62ee62;border:1px solid #c8d8c8;color:#1a3a1a;"><span style="display:inline-block;transform:scaleX(0.82);">Accel:N</span></div>
<div class="ind" style="left:1066.5px;width:38.5px;background:#62ee62;border:1px solid #c8d8c8;color:#1a3a1a;"><span style="display:inline-block;transform:scaleX(0.82);">Decel:N</span></div>
<div class="ind" style="left:1107px;width:38.5px;background:#62ee62;border:1px solid #c8d8c8;color:#1a3a1a;"><span style="display:inline-block;transform:scaleX(0.82);">bit 7:N</span></div>
<div class="ind" style="left:1147.5px;width:38.5px;background:#62ee62;border:1px solid #c8d8c8;color:#1a3a1a;"><span style="display:inline-block;transform:scaleX(0.82);">bit 8:N</span></div>
<div class="dc" style="left:2.0px;top:485.0px;width:132.8px;"><span style="display:inline-block;transform:scaleX(0.85);">Time:542.871</span></div>
<div class="dc" style="left:134.8px;top:485.0px;width:132.8px;"><span style="display:inline-block;transform:scaleX(0.85);">SecL:381.0</span></div>
<div class="dc" style="left:267.6px;top:485.0px;width:132.8px;"><span style="display:inline-block;transform:scaleX(0.85);">RPM:1702.0</span></div>
<div class="dc" style="left:400.4px;top:485.0px;width:132.8px;"><span style="display:inline-block;transform:scaleX(0.85);">MAP:49.0</span></div>
<div class="dc" style="left:533.2px;top:485.0px;width:132.8px;"><span style="display:inline-block;transform:scaleX(0.85);">TP:15.0</span></div>
<div class="dc" style="left:666.0px;top:485.0px;width:132.8px;"><span style="display:inline-block;transform:scaleX(0.85);">AFR:22.3</span></div>
<div class="dc" style="left:798.8px;top:485.0px;width:132.8px;"><span style="display:inline-block;transform:scaleX(0.85);">MAT:71.9</span></div>
<div class="dc" style="left:931.6px;top:485.0px;width:132.8px;"><span style="display:inline-block;transform:scaleX(0.85);">CLT:137.9</span></div>
<div class="dc" style="left:1064.4px;top:485.0px;width:132.8px;"><span style="display:inline-block;transform:scaleX(0.85);">Engine:9.0</span></div>
<div class="dc" style="left:2.0px;top:501.6px;width:132.8px;"><span style="display:inline-block;transform:scaleX(0.85);">Gego:100.0</span></div>
<div class="dc" style="left:134.8px;top:501.6px;width:132.8px;"><span style="display:inline-block;transform:scaleX(0.85);">Gair:99.0</span></div>
<div class="dc" style="left:267.6px;top:501.6px;width:132.8px;"><span style="display:inline-block;transform:scaleX(0.85);">Gwarm:118.0</span></div>
<div class="dc" style="left:400.4px;top:501.6px;width:132.8px;"><span style="display:inline-block;transform:scaleX(0.85);">Gbaro:102.0</span></div>
<div class="dc" style="left:533.2px;top:501.6px;width:132.8px;"><span style="display:inline-block;transform:scaleX(0.85);">Gammae:118.0</span></div>
<div class="dc" style="left:666.0px;top:501.6px;width:132.8px;"><span style="display:inline-block;transform:scaleX(0.85);">TPSacc:100.0</span></div>
<div class="dc" style="left:798.8px;top:501.6px;width:132.8px;"><span style="display:inline-block;transform:scaleX(0.85);">Gve:52.0</span></div>
<div class="dc" style="left:931.6px;top:501.6px;width:132.8px;"><span style="display:inline-block;transform:scaleX(0.85);">PW:2.746</span></div>
<div class="dc" style="left:1064.4px;top:501.6px;width:132.8px;"><span style="display:inline-block;transform:scaleX(0.85);">DutyCycle1:3.9</span></div>
<div class="dc" style="left:2.0px;top:518.2px;width:132.8px;"><span style="display:inline-block;transform:scaleX(0.85);">Gve2:52.0</span></div>
<div class="dc" style="left:134.8px;top:518.2px;width:132.8px;"><span style="display:inline-block;transform:scaleX(0.85);">PW2:2.696</span></div>
<div class="dc" style="left:267.6px;top:518.2px;width:132.8px;"><span style="display:inline-block;transform:scaleX(0.85);">DutyCycle2:3.8</span></div>
<div class="dc" style="left:400.4px;top:518.2px;width:132.8px;"><span style="display:inline-block;transform:scaleX(0.85);">SparkAdv:21.8</span></div>
<div class="dc" style="left:533.2px;top:518.2px;width:132.8px;"><span style="display:inline-block;transform:scaleX(0.85);">knockRet:0.0</span></div>
<div class="dc" style="left:666.0px;top:518.2px;width:132.8px;"><span style="display:inline-block;transform:scaleX(0.85);">ColdAdv:0.0</span></div>
<div class="dc" style="left:798.8px;top:518.2px;width:132.8px;"><span style="display:inline-block;transform:scaleX(0.85);">Dwell:3.0</span></div>
<div class="dc" style="left:931.6px;top:518.2px;width:132.8px;"><span style="display:inline-block;transform:scaleX(0.85);">tpsDOT:0.0</span></div>
<div class="dc" style="left:1064.4px;top:518.2px;width:132.8px;"><span style="display:inline-block;transform:scaleX(0.85);">mapDOT:22.0</span></div>
<div class="dc" style="left:2.0px;top:534.8px;width:132.8px;"><span style="display:inline-block;transform:scaleX(0.85);">IACstep:59.0</span></div>
<div class="dc" style="left:134.8px;top:534.8px;width:132.8px;"><span style="display:inline-block;transform:scaleX(0.85);">Batt V:14.4</span></div>
<div class="dc" style="left:267.6px;top:534.8px;width:132.8px;"><span style="display:inline-block;transform:scaleX(0.85);">deltaT:0.0</span></div>
<div class="dc" style="left:400.4px;top:534.8px;width:132.8px;"><span style="display:inline-block;transform:scaleX(0.85);">WallFuel1:0.0</span></div>
<div class="dc" style="left:533.2px;top:534.8px;width:132.8px;"><span style="display:inline-block;transform:scaleX(0.85);">WallFuel2:0.0</span></div>
<div class="dc" style="left:666.0px;top:534.8px;width:132.8px;"><span style="display:inline-block;transform:scaleX(0.85);">EAE1 %:0.0</span></div>
<div class="dc" style="left:798.8px;top:534.8px;width:132.8px;"><span style="display:inline-block;transform:scaleX(0.85);">EAE2 %:0.0</span></div>
<div class="dc" style="left:931.6px;top:534.8px;width:132.8px;"><span style="display:inline-block;transform:scaleX(0.85);">Load:49.0</span></div>
<div class="dc" style="left:1064.4px;top:534.8px;width:132.8px;"><span style="display:inline-block;transform:scaleX(0.85);">Secondary Load:0.0</span></div>
<div class="dc" style="left:2.0px;top:551.4px;width:132.8px;"><span style="display:inline-block;transform:scaleX(0.85);">Ign load:49.0</span></div>
<div class="dc" style="left:134.8px;top:551.4px;width:132.8px;"><span style="display:inline-block;transform:scaleX(0.85);">Secondary Ign Load:0.0</span></div>
<div class="dc" style="left:267.6px;top:551.4px;width:132.8px;"><span style="display:inline-block;transform:scaleX(0.85);">EAE Load:49.0</span></div>
<div class="dc" style="left:400.4px;top:551.4px;width:132.8px;"><span style="display:inline-block;transform:scaleX(0.85);">AFR Load:49.0</span></div>
<div class="dc" style="left:533.2px;top:551.4px;width:132.8px;"><span style="display:inline-block;transform:scaleX(0.85);">EGT 6 temp:1395.0</span></div>
<div class="dc" style="left:666.0px;top:551.4px;width:132.8px;"><span style="display:inline-block;transform:scaleX(0.85);">EGT 7 temp:1793.0</span></div>
<div class="dc" style="left:798.8px;top:551.4px;width:132.8px;"><span style="display:inline-block;transform:scaleX(0.85);">gpioadc0:0.0</span></div>
<div class="dc" style="left:931.6px;top:551.4px;width:132.8px;"><span style="display:inline-block;transform:scaleX(0.85);">gpioadc1:0.0</span></div>
<div class="dc" style="left:1064.4px;top:551.4px;width:132.8px;"><span style="display:inline-block;transform:scaleX(0.85);">gpioadc2:0.0</span></div>
<div class="dc" style="left:2.0px;top:568.0px;width:132.8px;"><span style="display:inline-block;transform:scaleX(0.85);">gpioadc3:0.0</span></div>
<div class="dc" style="left:134.8px;top:568.0px;width:132.8px;"><span style="display:inline-block;transform:scaleX(0.85);">gpioadc4:0.0</span></div>
<div class="dc" style="left:267.6px;top:568.0px;width:132.8px;"><span style="display:inline-block;transform:scaleX(0.85);">gpioadc5:0.0</span></div>
<div class="dc" style="left:400.4px;top:568.0px;width:132.8px;"><span style="display:inline-block;transform:scaleX(0.85);">gpioadc6:0.0</span></div>
<div class="dc" style="left:533.2px;top:568.0px;width:132.8px;"><span style="display:inline-block;transform:scaleX(0.85);">gpioadc7:0.0</span></div>
<div class="dc" style="left:666.0px;top:568.0px;width:132.8px;"><span style="display:inline-block;transform:scaleX(0.85);">status1:24.0</span></div>
<div class="dc" style="left:798.8px;top:568.0px;width:132.8px;"><span style="display:inline-block;transform:scaleX(0.85);">status2:0.0</span></div>
<div class="dc" style="left:931.6px;top:568.0px;width:132.8px;"><span style="display:inline-block;transform:scaleX(0.85);">status3:0.0</span></div>
<div class="dc" style="left:1064.4px;top:568.0px;width:132.8px;"><span style="display:inline-block;transform:scaleX(0.85);">status4:0.0</span></div>
<div class="dc" style="left:2.0px;top:584.6px;width:132.8px;"><span style="display:inline-block;transform:scaleX(0.85);">status5:0.0</span></div>
<div class="dc" style="left:134.8px;top:584.6px;width:132.8px;"><span style="display:inline-block;transform:scaleX(0.85);">timing err%:5.2</span></div>
<div class="dc" style="left:267.6px;top:584.6px;width:132.8px;"><span style="display:inline-block;transform:scaleX(0.85);">AFR Target 1:14.7</span></div>
<div class="dc" style="left:400.4px;top:584.6px;width:132.8px;"><span style="display:inline-block;transform:scaleX(0.85);">Boost Duty:0.0</span></div>
<div class="dc" style="left:533.2px;top:584.6px;width:132.8px;"><span style="display:inline-block;transform:scaleX(0.85);">PWM Idle Duty:23.0</span></div>
<div class="dc" style="left:666.0px;top:584.6px;width:132.8px;"><span style="display:inline-block;transform:scaleX(0.85);">Lost sync count:0.0</span></div>
<div class="dc" style="left:798.8px;top:584.6px;width:132.8px;"><span style="display:inline-block;transform:scaleX(0.85);">Lost sync reason:0.0</span></div>
<div class="dc" style="left:931.6px;top:584.6px;width:132.8px;"><span style="display:inline-block;transform:scaleX(0.85);">InjTiming1:0.0</span></div>
<div class="dc" style="left:1064.4px;top:584.6px;width:132.8px;"><span style="display:inline-block;transform:scaleX(0.85);">InjTiming2:0.0</span></div>
<div class="dc" style="left:2.0px;top:601.2px;width:132.8px;"><span style="display:inline-block;transform:scaleX(0.85);">PW3:0.0</span></div>
<div class="dc" style="left:134.8px;top:601.2px;width:132.8px;"><span style="display:inline-block;transform:scaleX(0.85);">PW4:0.0</span></div>
<div class="dc" style="left:267.6px;top:601.2px;width:132.8px;"><span style="display:inline-block;transform:scaleX(0.85);">VE Trim 1:100.0</span></div>
<div class="dc" style="left:400.4px;top:601.2px;width:132.8px;"><span style="display:inline-block;transform:scaleX(0.85);">VE Trim 2:100.0</span></div>
<div class="dc" style="left:533.2px;top:601.2px;width:132.8px;"><span style="display:inline-block;transform:scaleX(0.85);">VE Trim 3:100.0</span></div>
<div class="dc" style="left:666.0px;top:601.2px;width:132.8px;"><span style="display:inline-block;transform:scaleX(0.85);">VE Trim 4:100.0</span></div>
<div class="dc" style="left:798.8px;top:601.2px;width:132.8px;"><span style="display:inline-block;transform:scaleX(0.85);">RPMdot:0.0</span></div>
<div style="position:absolute;left:2px;top:619px;width:971px;height:17px;background:#fff;border:1px solid #9a9a9a;border-right-color:#e0e0e0;border-bottom-color:#e0e0e0;"></div>
<div style="position:absolute;left:5px;top:623.5px;width:206px;height:8px;background:#0000e6;"></div>
<div style="position:absolute;left:978px;top:624px;width:8px;height:8px;background:#111;"></div>
<div style="position:absolute;left:998px;top:623px;width:2px;height:10px;background:#333;"></div>
<div style="position:absolute;left:1002px;top:623px;width:2px;height:10px;background:#333;"></div>
<div style="position:absolute;left:1014px;top:622px;width:0;height:0;border-top:6px solid transparent;border-bottom:6px solid transparent;border-left:11px solid #111;"></div>
<svg style="position:absolute;left:1050px;top:620px" width="14" height="16"><circle cx="8.5" cy="6" r="4" fill="none" stroke="#333" stroke-width="1.3"/><line x1="5.5" y1="9" x2="1" y2="14" stroke="#333" stroke-width="1.6"/><line x1="6.5" y1="6" x2="10.5" y2="6" stroke="#333" stroke-width="1.2"/></svg>
<svg style="position:absolute;left:1068px;top:620px" width="14" height="16"><circle cx="8.5" cy="6" r="4" fill="none" stroke="#333" stroke-width="1.3"/><line x1="5.5" y1="9" x2="1" y2="14" stroke="#333" stroke-width="1.6"/><line x1="6.5" y1="6" x2="10.5" y2="6" stroke="#333" stroke-width="1.2"/><line x1="8.5" y1="4" x2="8.5" y2="8" stroke="#333" stroke-width="1.2"/></svg>
<div style="position:absolute;left:1087px;top:622px;width:2.5px;height:12px;background:#111;"></div>
<div style="position:absolute;left:1089px;top:622px;width:0;height:0;border-top:6px solid transparent;border-bottom:6px solid transparent;border-right:10px solid #111;"></div>
<div style="position:absolute;left:1106px;top:623px;width:0;height:0;border-top:5px solid transparent;border-bottom:5px solid transparent;border-right:6px solid #111;"></div>
<div style="position:absolute;left:1111px;top:623px;width:0;height:0;border-top:5px solid transparent;border-bottom:5px solid transparent;border-right:6px solid #111;"></div>
<div style="position:absolute;left:1123px;top:627px;width:13px;height:2px;background:#111;"></div>
<div style="position:absolute;left:1142px;top:627px;width:13px;height:2px;background:#111;"></div>
<div style="position:absolute;left:1147.5px;top:621.5px;width:2px;height:13px;background:#111;"></div>
<div style="position:absolute;left:1161px;top:623px;width:0;height:0;border-top:5px solid transparent;border-bottom:5px solid transparent;border-left:6px solid #111;"></div>
<div style="position:absolute;left:1166px;top:623px;width:0;height:0;border-top:5px solid transparent;border-bottom:5px solid transparent;border-left:6px solid #111;"></div>
<div style="position:absolute;left:1180px;top:622px;width:0;height:0;border-top:6px solid transparent;border-bottom:6px solid transparent;border-left:10px solid #111;"></div>
<div style="position:absolute;left:1189px;top:622px;width:2.5px;height:12px;background:#111;"></div>
<div style="position:absolute;left:0px;top:637px;width:1195px;height:2px;background:#f8f8f6;"></div>
<div style="position:absolute;left:0px;top:639px;width:1196px;height:1px;background:#9a9a9a;"></div>
<div style="position:absolute;left:1193px;top:37px;width:2px;height:603px;background:#fafafa;"></div>
<div style="position:absolute;left:1195px;top:17px;width:2px;height:623px;background:#8a8e92;"></div>
<div style="position:absolute;left:1197px;top:17px;width:3px;height:623px;background:#1a1e22;"></div>
<div style="position:absolute;left:0px;top:640px;width:1200px;height:35px;background:linear-gradient(#2e3844 0%,#1a222c 10%,#121a22 50%,#0a1016 100%);"></div>
<div style="position:absolute;left:0px;top:640px;width:1200px;height:1px;background:#4a5460;"></div>
<svg style="position:absolute;left:5px;top:639px" width="38" height="36"><defs><radialGradient id="orb" cx="50%" cy="40%" r="60%"><stop offset="0" stop-color="#7ac0f0"/><stop offset="0.6" stop-color="#2a78c0"/><stop offset="1" stop-color="#0a3a70"/></radialGradient></defs><circle cx="19" cy="17.5" r="16" fill="url(#orb)" stroke="#1a3050" stroke-width="1"/><rect x="12" y="10" width="6.5" height="6.5" fill="#f06030" rx="1"/><rect x="19.5" y="10" width="6.5" height="6.5" fill="#70c040" rx="1"/><rect x="12" y="17.5" width="6.5" height="6.5" fill="#30a0f0" rx="1"/><rect x="19.5" y="17.5" width="6.5" height="6.5" fill="#f0c020" rx="1"/><ellipse cx="19" cy="9" rx="11" ry="6" fill="#fff" opacity="0.25"/></svg>
<svg style="position:absolute;left:63px;top:641px" width="30" height="30" viewBox="0 0 30 30"><rect x="2" y="7" width="26" height="20" rx="2" fill="#e8d28a"/><rect x="2" y="4" width="11" height="5" rx="1" fill="#d8c070"/><rect x="3" y="11" width="24" height="16" rx="1" fill="#f4e4a8"/><rect x="9" y="18" width="12" height="8" fill="#60a8e0"/></svg>
<svg style="position:absolute;left:118px;top:641px" width="30" height="30" viewBox="0 0 30 30"><circle cx="14" cy="15" r="12.5" fill="#d03a2a"/><path d="M14 15 L25.5 10 A12.5 12.5 0 0 1 8 26 Z" fill="#f0c020"/><path d="M14 15 L8 26 A12.5 12.5 0 0 1 2.5 9 Z" fill="#30a040"/><circle cx="14" cy="15" r="6" fill="#fff"/><circle cx="14" cy="15" r="4.5" fill="#3a70c8"/></svg>
<svg style="position:absolute;left:173px;top:641px" width="30" height="30" viewBox="0 0 30 30"><rect x="1" y="1" width="28" height="28" fill="#4a8a30"/><path d="M1 1 L29 1 L29 29 Q10 20 1 1" fill="#70a848"/><text x="15" y="23" font-size="11" font-weight="bold" fill="#fff" text-anchor="middle" font-family="Liberation Sans">X5</text></svg>
<svg style="position:absolute;left:227px;top:641px" width="30" height="30" viewBox="0 0 30 30"><circle cx="14" cy="15" r="12.5" fill="#e2541c"/><circle cx="16" cy="12.5" r="8.5" fill="#3a6ad0"/><path d="M2 13 Q3 27 15 27.5 Q26 27 27 16 Q23 23 15 22 Q7 21 6 13 Q4 9 7 5 Q2 8 2 13" fill="#f39a2a"/></svg>
<svg style="position:absolute;left:283px;top:641px" width="30" height="30" viewBox="0 0 30 30"><rect x="3" y="4" width="22" height="23" rx="1" fill="#9ab4cc"/><rect x="6" y="2" width="19" height="22" fill="#c8d8e8" opacity="0.7"/><circle cx="13" cy="15" r="7.5" fill="#f08a30"/><path d="M10.5 11 L17 15 L10.5 19 Z" fill="#fff"/></svg>
<svg style="position:absolute;left:337px;top:641px" width="30" height="30" viewBox="0 0 30 30"><path d="M9 4 L19 4 L28 20 L23 28 Z" fill="#f0c020"/><path d="M9 4 L1 19 L6 28 L14 12 Z" fill="#20a050"/><path d="M6 28 L23 28 L28 20 L11 20 Z" fill="#3a7ae0"/></svg>
<svg style="position:absolute;left:390px;top:641px" width="30" height="30" viewBox="0 0 30 30"><rect x="3" y="3" width="18" height="20" fill="#a0b8d0" stroke="#506070"/><rect x="6" y="6" width="12" height="8" fill="#d0e0f0"/><rect x="14" y="16" width="13" height="11" fill="#607890"/><path d="M16 19 L25 25" stroke="#eee" stroke-width="2"/></svg>
<svg style="position:absolute;left:445px;top:641px" width="30" height="30" viewBox="0 0 30 30"><rect x="1" y="2" width="28" height="27" fill="#1a2a90"/><text x="11" y="21" font-size="20" fill="#fff" text-anchor="middle" font-family="Liberation Serif">&#955;</text><text x="22" y="26" font-size="10" fill="#fff" font-family="Liberation Sans">m</text></svg>
<svg style="position:absolute;left:500px;top:641px" width="30" height="30" viewBox="0 0 30 30"><rect x="1" y="2" width="28" height="27" fill="#f4f4f4"/><polyline points="3,24 8,8 13,22 18,6 23,20 27,8" fill="none" stroke="#d02020" stroke-width="2"/><polyline points="3,10 9,22 14,8 19,24 26,12" fill="none" stroke="#20a020" stroke-width="2"/><polyline points="3,18 10,12 16,20 22,10 27,22" fill="none" stroke="#2020d0" stroke-width="1.5"/></svg>
<svg style="position:absolute;left:555px;top:641px" width="30" height="30" viewBox="0 0 30 30"><rect x="1" y="2" width="28" height="27" fill="#1a2a90"/><text x="10" y="20" font-size="18" fill="#fff" text-anchor="middle" font-family="Liberation Serif">&#955;</text><polyline points="14,14 20,6 27,16" fill="none" stroke="#e03030" stroke-width="2"/><text x="20" y="28" font-size="8" font-weight="bold" fill="#a0d0ff" text-anchor="middle" font-family="Liberation Sans">3.0</text></svg>
<svg style="position:absolute;left:608px;top:641px" width="30" height="30" viewBox="0 0 30 30"><circle cx="14" cy="15" r="12.5" fill="#fff"/><path d="M14 15 L14 2.5 A12.5 12.5 0 0 1 26.5 15 Z" fill="#e03030"/><path d="M14 15 L26.5 15 A12.5 12.5 0 0 1 14 27.5 Z" fill="#20a040"/><path d="M14 15 L14 27.5 A12.5 12.5 0 0 1 1.5 15 Z" fill="#f0c020"/><path d="M14 15 L1.5 15 A12.5 12.5 0 0 1 14 2.5 Z" fill="#9040c0"/><circle cx="14" cy="15" r="5" fill="#e0e0e0"/></svg>
<svg style="position:absolute;left:663px;top:641px" width="30" height="30" viewBox="0 0 30 30"><circle cx="14" cy="15" r="12.5" fill="#2a9a3a"/><circle cx="14" cy="15" r="12.5" fill="none" stroke="#d0f0d0" stroke-width="1.5"/><path d="M9 8 L9 17 Q9 22 14 22 Q19 22 19 17 L19 8" fill="none" stroke="#fff" stroke-width="3.5"/></svg>
<svg style="position:absolute;left:723px;top:641px" width="22" height="30" viewBox="0 0 22 30"><path d="M6 9 Q6 3 11 3 Q16 3 16 9 L16 22 Q16 27 11 27 Q6 27 6 22 Z" fill="#4a90d0"/><rect x="7" y="12" width="8" height="3" fill="#c0e0ff"/></svg>
<svg style="position:absolute;left:772px;top:641px" width="30" height="30" viewBox="0 0 30 30"><rect x="8" y="3" width="19" height="24" fill="#f4f4f8" stroke="#a0a8c0"/><rect x="2" y="7" width="15" height="15" fill="#2a5aa8"/><text x="9.5" y="19" font-size="11" font-weight="bold" fill="#fff" text-anchor="middle" font-family="Liberation Sans">W</text><line x1="19" y1="9" x2="25" y2="9" stroke="#6080c0"/><line x1="19" y1="13" x2="25" y2="13" stroke="#6080c0"/><line x1="19" y1="17" x2="25" y2="17" stroke="#6080c0"/></svg>
<div style="position:absolute;left:815px;top:641px;width:52px;height:34px;border:1px solid #b8bcc0;border-radius:3px;background:linear-gradient(#a4a8ac,#80868c 45%,#5e646a 55%,#6a7076);"></div>
<svg style="position:absolute;left:826px;top:641px" width="30" height="30" viewBox="0 0 30 30"><rect x="1" y="2" width="28" height="26" fill="#f8f8f0" stroke="#111" stroke-width="2"/><polyline points="3,12 10,6 16,14 22,8 27,12" fill="none" stroke="#7030c0" stroke-width="2.5"/><polyline points="3,16 9,12 15,20 21,12 27,8" fill="none" stroke="#2050e0" stroke-width="2.5"/><polyline points="3,22 10,16 16,24 27,16" fill="none" stroke="#20c040" stroke-width="2.5"/><polyline points="4,26 14,22 27,22" fill="none" stroke="#f0e020" stroke-width="3"/></svg>
<div style="position:absolute;left:1002px;top:655px;width:0;height:0;border-left:4px solid transparent;border-right:4px solid transparent;border-bottom:5px solid #e8e8e8;"></div>
<svg style="position:absolute;left:1019px;top:648px" width="18" height="18" viewBox="0 0 18 18"><rect x="3" y="2" width="1.5" height="13" fill="#ddd"/><path d="M4 3 L12 3 L12 9 L4 9 Z" fill="#f0f0f0"/><circle cx="12" cy="12" r="4" fill="#d02020"/><path d="M10 10 L14 14 M14 10 L10 14" stroke="#fff" stroke-width="1.2"/></svg>
<svg style="position:absolute;left:1042px;top:648px" width="16" height="18" viewBox="0 0 16 18"><rect x="3" y="3" width="9" height="12" rx="1.5" fill="none" stroke="#e0e0e0" stroke-width="1.5"/><rect x="5" y="9" width="5" height="5" fill="#e0e0e0"/><rect x="5.5" y="1" width="4" height="2" fill="#e0e0e0"/></svg>
<svg style="position:absolute;left:1060px;top:648px" width="20" height="18" viewBox="0 0 20 18"><rect x="1" y="12" width="2.5" height="3" fill="#f0c020"/><rect x="4.5" y="10" width="2.5" height="5" fill="#f0c020"/><rect x="8" y="7" width="2.5" height="8" fill="#f0c020"/><rect x="11.5" y="4" width="2.5" height="11" fill="#e8d040"/><rect x="15" y="1" width="2.5" height="14" fill="#e8d040"/></svg>
<div style="position:absolute;left:1189px;top:641px;width:11px;height:34px;border-left:1px solid #6a7480;background:linear-gradient(90deg,rgba(255,255,255,0.08),rgba(255,255,255,0.02));"></div>
<svg style="position:absolute;left:1084px;top:649px" width="16" height="16" viewBox="0 0 16 16"><path d="M1 6 L4 6 L8 2 L8 14 L4 10 L1 10 Z" fill="#e8e8e8"/><path d="M10 5 Q12 8 10 11" fill="none" stroke="#e8e8e8" stroke-width="1.2"/></svg>
<svg style="position:absolute;left:1102px;top:648px" width="16" height="18" viewBox="0 0 16 18"><path d="M8 2 L14 12 L2 12 Z" fill="#3a8a3a"/><path d="M8 2 L14 12 L11 12 L6 5 Z" fill="#f0c020"/><path d="M2 12 L14 12 L12 15 L4 15 Z" fill="#3a7ae0"/></svg>
<div style="position:absolute;left:1137.5px;top:643.5px;height:15px;line-height:15px;white-space:nowrap;transform:scaleX(0.8380);transform-origin:left;font-size:12px;font-weight:normal;color:#f0f0f0;">2:06 PM</div>
<div style="position:absolute;left:1135.0px;top:658.5px;height:15px;line-height:15px;white-space:nowrap;transform:scaleX(0.8984);transform-origin:left;font-size:12px;font-weight:normal;color:#f0f0f0;">5/8/2013</div>
</body></html>
